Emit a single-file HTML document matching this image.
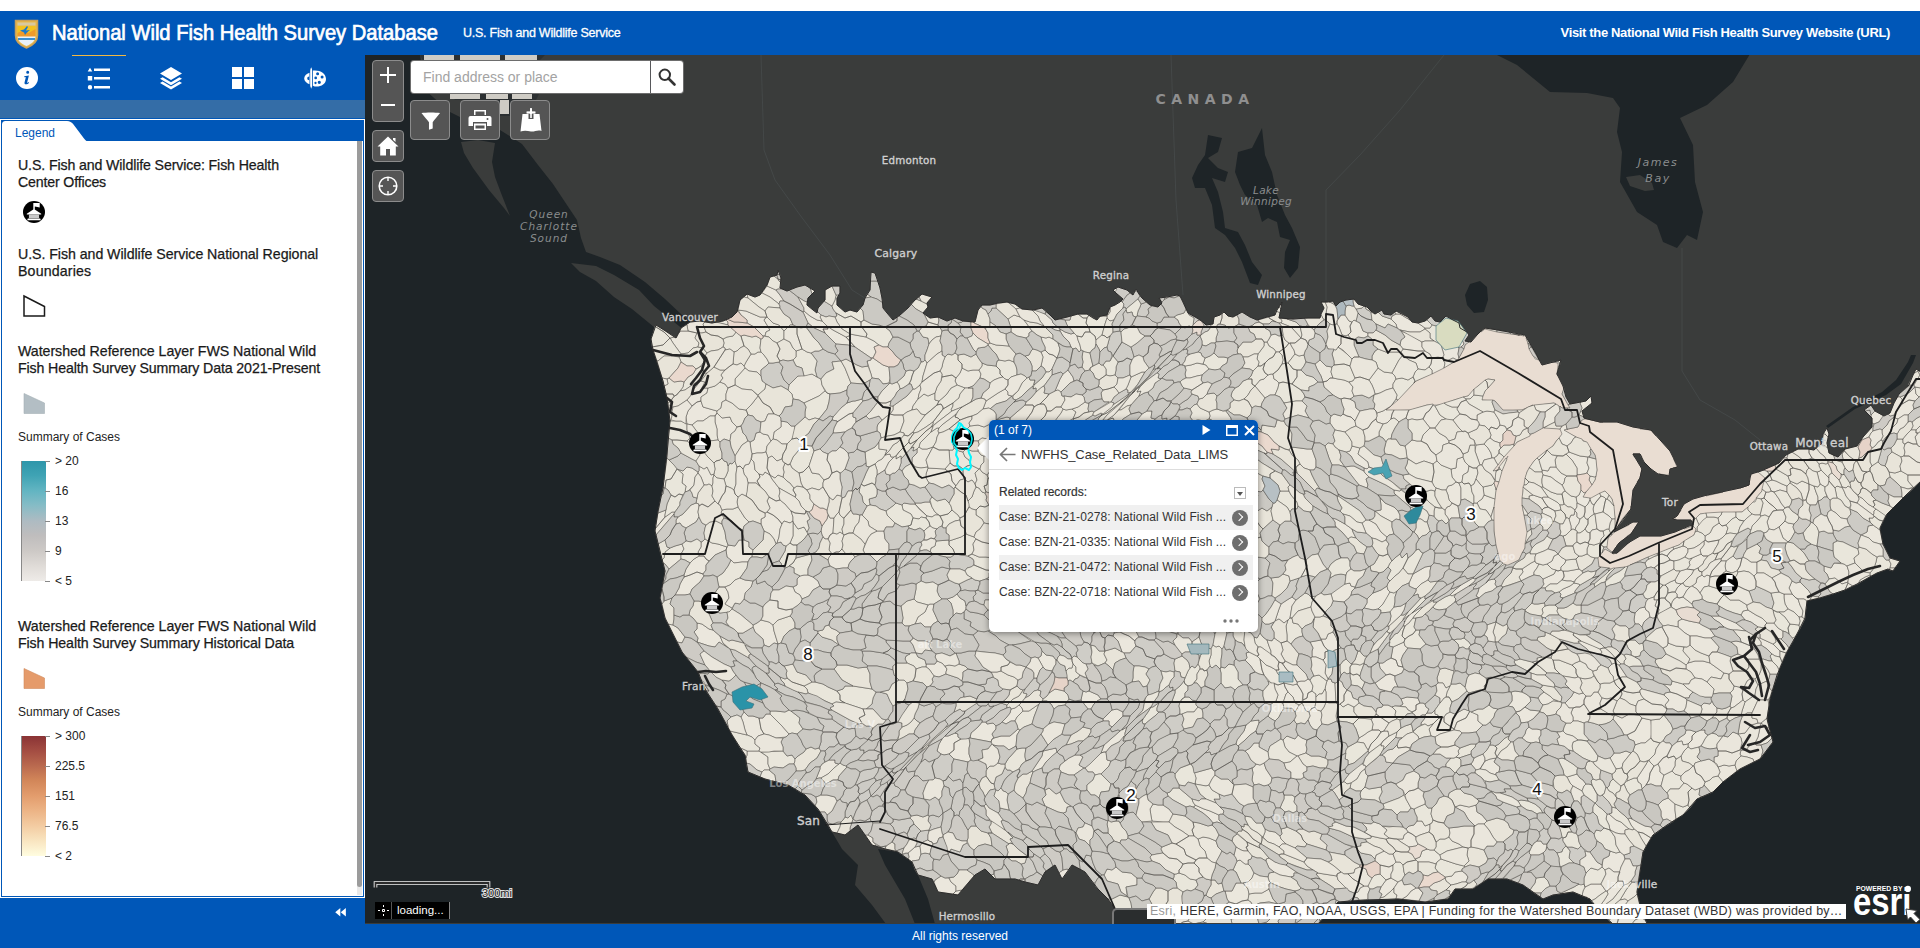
<!DOCTYPE html>
<html lang="en"><head><meta charset="utf-8"><title>National Wild Fish Health Survey Database</title>
<style>
html,body{margin:0;padding:0}
body{width:1920px;height:948px;overflow:hidden;background:#fff;position:relative;font-family:"Liberation Sans",sans-serif;color:#222}
.abs{position:absolute}
#hdr{left:0;top:10.75px;width:1920px;height:44.25px;background:#0057b8}
#title{left:52px;top:10.700px;height:24px;line-height:24px;font-size:21.5px;font-weight:normal;color:#fff;white-space:nowrap;-webkit-text-stroke:.7px #fff;transform-origin:0 50%;transform:scaleX(.936)}
#sub{left:463px;top:14.25px;font-size:12.5px;line-height:16px;color:#fff;white-space:nowrap;letter-spacing:-.24px;-webkit-text-stroke:.3px #fff}
#link{right:30px;top:14.25px;font-size:13px;line-height:16px;font-weight:bold;color:#fff;white-space:nowrap;letter-spacing:-.35px}
#side{left:0;top:55px;width:365px;height:869px;background:#0057b8}
#foot{left:0;top:924px;width:1920px;height:24px;background:#0057b8;color:#fff;font-size:12px;line-height:24px;text-align:center}
.ic{position:absolute;top:11px;width:24px;height:24px}
#band{left:0;top:45px;width:365px;height:18px;background:#346da7}
#pane{left:0;top:64px;width:363px;height:777px;border:1px solid #fff}
#white{left:2px;top:86px;width:360.700px;height:754.500px;background:#fff}
#sbt{left:357.300px;top:86px;width:5px;height:754px;background:#e9e9e9}
#sb{left:357.300px;top:86px;width:5px;height:746px;background:#9b9b9b;border-radius:0 0 2.500px 2.500px}
.lt{position:absolute;left:18px;font-size:14.2px;line-height:17px;color:#1a1a1a;white-space:nowrap;letter-spacing:-.25px;-webkit-text-stroke:.25px #1a1a1a}
.ls{position:absolute;left:18px;font-size:12px;line-height:14px;color:#222;white-space:nowrap}
.rl{position:absolute;left:55px;font-size:12px;line-height:14px;color:#222;white-space:nowrap}
.tick{position:absolute;left:45px;width:5px;height:1px;background:#888}
#map{left:365px;top:55px;width:1555px;height:869px;overflow:hidden;background:#3a3c3b}
.mb{position:absolute;background:#555;border:1px solid #8c8c8c;border-radius:4px;box-sizing:border-box}
.mb svg{position:absolute}
#pop{left:624px;top:365px;width:269px;height:212px;background:#fff;border-radius:5px;box-shadow:0 1px 6px rgba(0,0,0,.45)}
#pop .tb{position:absolute;left:0;top:0;width:269px;height:20px;background:#0057b8;border-radius:5px 5px 0 0;color:#fff;font-size:12px;line-height:20px}
.row{position:absolute;left:10px;width:254px;height:25px;font-size:12px;line-height:25px;color:#333;white-space:nowrap;letter-spacing:.09px}
.row i{position:absolute;left:233px;top:4.5px;width:16px;height:16px;border-radius:50%;background:#6e6e6e}
.row i:after{content:'';position:absolute;left:4px;top:4.500px;width:5px;height:5px;border-top:1.600px solid #fff;border-right:1.600px solid #fff;transform:rotate(45deg)}
</style></head><body>
<div class="abs" id="hdr">
 <svg class="abs" style="left:14px;top:7.75px" width="25" height="30" viewBox="0 0 25 30"><path d="M1.500 1.500h22v15c0 6-4.500 10-11 12.500C6 26.500 1.500 22.500 1.500 16.500z" fill="#e9b949" stroke="#c9a15a" stroke-width="1.500"/><path d="M3.500 3.500h18v3h-18z" fill="#d8c9a0"/><path d="M3.500 7h18v9.500h-18z" fill="#f3c21f"/><path d="M3.500 14l6-3 5 3 7-4v8h-18z" fill="#ef9a2a"/><path d="M3.500 17.500h18c-.3 4.500-4 7.500-9 9.500-5-2-8.700-5-9-9.500z" fill="#e8f1f8"/><path d="M4 19h17v2H4z" fill="#3b8fd0"/><path d="M6 11.500l4-1 3-3.500 1 1-2 3.500 4-.5-3 2.500-2 2.500-1-2.500z" fill="#1c79c9"/></svg>
 <div class="abs" id="title">National Wild Fish Health Survey Database</div>
 <div class="abs" id="sub">U.S. Fish and Wildlife Service</div>
 <div class="abs" id="link">Visit the National Wild Fish Health Survey Website (URL)</div>
</div>
<div class="abs" id="side">
 <div class="abs" style="left:72px;top:0;width:54px;height:1px;background:#f2b843"></div>
 <div class="ic" style="left:15px"><svg viewBox="0 0 24 24" width="24" height="24"><circle cx="12" cy="12" r="11" fill="#fff"/><path fill="#0057b8" d="M11.2 6.2a1.5 1.5 0 1 0 3 0 1.5 1.5 0 1 0-3 0M9.3 10.2l4.6-.6-1.7 6.6c-.1.6.2.7.6.5l.9-.6.4.6c-1 1.1-2.2 1.7-3.3 1.6-1.100-.1-1.500-.9-1.200-2.100l1.100-4.400c.1-.5-.1-.7-.5-.7l-1 .1z"/></svg></div>
 <div class="ic" style="left:87px"><svg viewBox="0 0 24 24" width="24" height="24"><path fill="#fff" d="M3 1.800 5.300 5.600H.7zM.8 10h4.400v4.400H.8zM3 19a2.200 2.200 0 1 0 0 4.400A2.200 2.200 0 0 0 3 19M7 2.600h16V5H7zm0 8.400h16v2.400H7zm0 9h16v2.400H7z"/></svg></div>
 <div class="ic" style="left:159px"><svg viewBox="0 0 24 24" width="24" height="24"><path fill="#fff" d="M12 1 23 7.500 12 14 1 7.500zM3.600 11.300 12 16.300l8.400-5L23 12.800 12 19.300 1 12.800zM3.600 15.500 12 20.500l8.400-5L23 17 12 23.500 1 17z"/></svg></div>
 <div class="ic" style="left:231px"><svg viewBox="0 0 24 24" width="24" height="24"><path fill="#fff" d="M1 1h10v10H1zM13 1h10v10H13zM1 13h10v10H1zM13 13h10v10H13z"/></svg></div>
 <div class="ic" style="left:303px"><svg viewBox="0 0 24 24" width="24" height="24"><path fill="#fff" fill-rule="evenodd" d="M8.200 1.300c.6 1.200 1 2.400 1 3.600v15.100l-1 2.700-1-2.700V4.900c0-1.200.4-2.400 1-3.600zM6.500 6.800v11.400C3.300 17 1.200 14.800 1.200 12.400c0-2.300 2.100-4.500 5.300-5.600zM6.100 10.400a1.900 1.900 0 0 0 0 3.800zM10 4.600c6.800-.8 13 2.800 13 8.400 0 4.600-4.600 7.600-9.400 7.600-1.400 0-2.600-.3-3.600-.9zM13.1 7.7a1.5 1.5 0 1 0 3.0 0a1.5 1.5 0 1 0 -3.0 0zM17.6 11.1a1.5 1.5 0 1 0 3.0 0a1.5 1.5 0 1 0 -3.0 0zM11.35 11.9a1.35 1.35 0 1 0 2.7 0a1.35 1.35 0 1 0 -2.7 0zM14.700000000000001 16.3a1.6 1.6 0 1 0 3.2 0a1.6 1.6 0 1 0 -3.2 0zM11.35 17a1.15 1.15 0 1 0 2.3 0a1.15 1.15 0 1 0 -2.3 0z"/></svg></div>
 <div class="abs" id="band"></div>
 <div class="abs" id="pane"></div>
 <div class="abs" id="white"></div>
 <svg class="abs" style="left:2px;top:66px" width="90" height="21" viewBox="0 0 90 21"><path d="M0 21V3.500Q0 0 3.500 0H65Q69 0 71.500 3.500L82 17.500Q84.500 21 88 21z" fill="#fff"/></svg>
 <div class="abs" style="left:15px;top:71px;font-size:12px;line-height:14px;color:#0057b8">Legend</div>
 <div class="abs" id="sbt"></div><div class="abs" id="sb"></div>

 <div class="lt" style="top:102px;letter-spacing:-0.13px">U.S. Fish and Wildlife Service: Fish Health</div>
 <div class="lt" style="top:119px;letter-spacing:-0.17px">Center Offices</div>
 <svg class="abs" style="left:22px;top:145px" width="24" height="24" viewBox="-12 -12 24 24"><g transform="translate(0,0)"><circle r="11" fill="#000"/><path fill="#fff" d="M-.7,-9h6.400v4.600l-2.300,-.6l-2.600,-.5v3.300h-1.500zM0,-2.900l7.200,4.700v.6h-14.400v-.6zM-6.200,6.400h12.400l.6,1.800h-13.600z"/><path fill="#c9c9c9" d="M-5.100,2.400h10.200v3.900h-10.200z"/></g></svg>
 <div class="lt" style="top:191px;letter-spacing:-0.055px">U.S. Fish and Wildlife Service National Regional</div>
 <div class="lt" style="top:208px;letter-spacing:0.15px">Boundaries</div>
 <svg class="abs" style="left:22px;top:239px" width="25" height="24" viewBox="0 0 25 24"><path d="M2 2 L22.500 12.500V22H2z" fill="none" stroke="#1a1a1a" stroke-width="1.500"/></svg>
 <div class="lt" style="top:288px;letter-spacing:-0.04px">Watershed Reference Layer FWS National Wild</div>
 <div class="lt" style="top:305px;letter-spacing:-0.125px">Fish Health Survey Summary Data 2021-Present</div>
 <svg class="abs" style="left:22px;top:337px" width="25" height="24" viewBox="0 0 25 24"><path d="M2 1.500 L22.500 11V21.500H2z" fill="#b3bec4" stroke="#a4b0b6" stroke-width=".6"/></svg>
 <div class="ls" style="top:375px">Summary of Cases</div>
 <div class="abs" style="left:21px;top:406px;width:24px;height:120px;background:linear-gradient(#2f96aa 0%,#3fa3b4 12%,#63b5c2 25%,#86bcc6 37%,#aebbc2 50%,#bfbdbd 62%,#cdc9c6 75%,#e0dcd8 88%,#eeebe8 100%);border-left:1px solid #888"></div>
 <div class="tick" style="top:406px"></div><div class="tick" style="top:436px"></div><div class="tick" style="top:466px"></div><div class="tick" style="top:496px"></div><div class="tick" style="top:526px"></div>
 <div class="rl" style="top:399px">&gt; 20</div><div class="rl" style="top:429px">16</div><div class="rl" style="top:459px">13</div><div class="rl" style="top:489px">9</div><div class="rl" style="top:519px">&lt; 5</div>
 <div class="lt" style="top:563px;letter-spacing:-0.04px">Watershed Reference Layer FWS National Wild</div>
 <div class="lt" style="top:580px;letter-spacing:-0.11px">Fish Health Survey Summary Historical Data</div>
 <svg class="abs" style="left:22px;top:612px" width="25" height="24" viewBox="0 0 25 24"><path d="M2 1.500 L22.500 11V21.500H2z" fill="#e59b6b" stroke="#d08a5c" stroke-width=".6"/></svg>
 <div class="ls" style="top:650px">Summary of Cases</div>
 <div class="abs" style="left:21px;top:681px;width:24px;height:120px;background:linear-gradient(#8a3335 0%,#a34c42 12%,#ba6a4f 25%,#d28659 37%,#e39d6d 50%,#ecb385 62%,#f3cca2 75%,#f9e6c2 88%,#fffde0 100%);border-left:1px solid #888"></div>
 <div class="tick" style="top:681px"></div><div class="tick" style="top:711px"></div><div class="tick" style="top:741px"></div><div class="tick" style="top:771px"></div><div class="tick" style="top:801px"></div>
 <div class="rl" style="top:674px">&gt; 300</div><div class="rl" style="top:704px">225.5</div><div class="rl" style="top:734px">151</div><div class="rl" style="top:764px">76.5</div><div class="rl" style="top:794px">&lt; 2</div>
 <svg class="abs" style="left:335px;top:853px" width="11.500" height="8.500" viewBox="0 0 13 10"><path d="M6 0v10L0 5zM12.500 0v10l-6-5z" fill="#fff"/></svg>
</div>
<div class="abs" id="map">
<svg id="mapsvg" viewBox="365 55 1555 868" width="1555" height="868" style="position:absolute;left:0;top:0;display:block">
<rect x="365" y="55" width="1555" height="868" fill="#3a3c3b"/>
<polygon points="364,54 420,54 425,90 450,112 470,122 500,130 522,144 538,165 553,184 565,202 577,220 581,238 586,252 600,257 620,265 645,282 665,299 682,315 695,325 681,328 676,338 664,330 656,325 651,339 653,350 663,381 667,398 670,421 667,454 663,488 658,511 655,531 660,551 665,571 660,598 665,618 672,632 682,652 698,672 705,689 718,709 732,735 745,755 748,772 765,779 788,785 805,795 818,809 828,825 832,832 842,849 858,865 855,885 872,905 886,924 364,924" fill="#1e2427"/>
<polygon points="1495,54 1517,65 1550,92 1587,93 1613,98 1620,108 1617,132 1622,152 1620,182 1637,212 1657,225 1663,242 1677,248 1687,235 1697,240 1703,212 1695,182 1693,145 1680,118 1707,105 1733,82 1750,54" fill="#1e2427"/>
<polygon points="1921,481 1907,494 1897,504 1887,514 1880,528 1883,544 1890,558 1900,561 1893,571 1888,569 1877,573 1868,578 1857,584 1845,590 1833,594 1820,598 1807,601 1805,618 1797,634 1787,652 1777,675 1770,699 1767,719 1773,742 1760,759 1740,769 1723,782 1713,792 1697,799 1683,815 1667,825 1653,835 1643,852 1640,872 1637,892 1640,905 1647,924 1921,924" fill="#1e2427"/>
<polygon points="1613,924 1603,915 1590,899 1573,892 1553,895 1543,899 1523,885 1507,879 1488,879 1473,889 1455,889 1448,899 1425,902 1398,899 1365,900 1338,902 1318,924" fill="#1e2427"/>
<polygon points="878,849 898,852 912,862 918,875 928,899 935,924 915,924 905,899 885,865" fill="#1e2427"/>
<polygon points="1826,426 1853,407 1882,392 1896,380 1908,362 1911,355 1916,355 1913,363 1901,384 1886,395 1855,409 1828,428" fill="#1e2427"/>
<polygon points="1262,128 1265,155 1272,172 1277,195 1285,215 1292,228 1300,247 1298,268 1290,278 1284,268 1285,252 1290,240 1280,237 1277,222 1268,218 1262,222 1257,205 1245,195 1240,185 1235,172 1238,152 1252,148 1257,138" fill="#1e2427"/>
<polygon points="1208,135 1222,138 1218,152 1208,158 1218,168 1228,172 1225,182 1212,178 1218,192 1223,212 1225,228 1238,232 1245,245 1252,262 1262,275 1258,285 1250,283 1242,262 1235,248 1225,235 1215,228 1212,205 1205,188 1195,188 1192,178 1198,165 1205,155" fill="#1e2427"/>
<polygon points="1470,284 1480,281 1487,287 1488,300 1484,312 1474,313 1467,305 1465,295" fill="#1e2427"/>
<polygon points="571,263 596,266 614,275 639,290 654,306 669,318 684,330 690,337 676,338 654,327 632,309 614,297 596,281 580,272" fill="#3a3c3b"/>
<polygon points="461,142 478,140 495,143 492,162 495,177 501,193 510,216 504,208 489,190 473,168 464,153" fill="#3a3c3b"/>
<polygon points="1626,177 1640,175 1652,183 1654,190 1645,191 1630,186" fill="#3a3c3b"/>
<g fill="none" stroke="#444848" stroke-width="1"><path d="M761,55L764,150 775,180 800,215 830,255 852,290 868,300"/><path d="M1171,55L1176,200 1183,295"/><path d="M1444,55L1400,110 1360,155 1326,190 1326,300"/><path d="M1682,248L1682,371 1700,400 1735,420 1760,440"/></g>
<polygon points="420,55 545,55 538,62 540,92 536,100 512,100 510,116 500,116 498,100 455,100 448,92 428,70" fill="#2c3032"/>
<g fill="#cfccc5"><rect x="424" y="55" width="30" height="5"/><rect x="460" y="55" width="40" height="6"/><rect x="505" y="55" width="32" height="5"/><rect x="450" y="94" width="30" height="5"/><rect x="486" y="93" width="22" height="6"/><rect x="512" y="94" width="20" height="5"/><rect x="500" y="100" width="9" height="14"/><rect x="521" y="56" width="10" height="3"/></g>
<path d="M656,325l-5,14 2,11 10,31 4,17 3,23 -3,33 -4,34 -5,23 -3,20 5,20 5,20 -5,27 5,20 7,14 10,20 16,20 7,17 13,20 14,26 13,20 3,17 17,7 23,6 17,10 13,14 10,16 4,7 13,3 13-10 14,20 13,4 13,3 14,10 6,13 14,4 6,13 20,3 17-20 10-6 10,10 10,0 10,0 10,3 13,3 7-13 10-7 7,14 10-14 13,7 13,17 10,10 7,10 13,10 10,5 180,0 20-22 27-2 33-1 27,3 23-3 7-10 18,0 15-10 19,0 16,6 20,14 10-4 20-3 17,7 13,16 10,9 34,0 -7-19 -3-13 3-20 3-20 10-17 14-10 16-10 14-16 16-7 10-10 17-13 20-10 13-17 -6-23 3-20 7-24 10-23 10-18 8-16 2-17 13-3 13-4 12-4 12-6 11-6 9-5 11-4 5,2 7-10 -10-3 -7-14 -3-16 7-14 10-10 10-10 14-13 0-109 -5-3 -3,6 -4,10 -10,9 -5,9 -4,10 -6,3 -9-5 -4-6 -7,5 8,8 0,9 -9,10 -6,9 -12,3 -7,8 -9-4 -2-10 2-9 -2-6 -4,6 -1,9 -8,7 -6-1 -10,0 -12,6 -7,8 -18,8 -10,3 -1,4 -1,7 -9,3 -14,3 -19,4 -14,4 -9,5 -7,12 -5,3 5,1 14,0 2,5 -4,1 -14,6 -14,4 -21,0 -12,7 -11,10 -5,0 7-10 12-9 8-12 -6,0 -19,10 7-10 10-13 2-19 7-12 2-9 -9-15 7,0 4,8 7,7 7,5 11,2 1-7 8-2 -8-16 -9-10 -10-11 -18-3 -16-5 -17,0 -16-4 -2-7 10-8 -1-7 -5,5 -16,3 -4-7 -3-11 -6-12 4-14 -19,5 -7-13 -10-17 -27-5 -13-2 -4,3 -4,4 -6,7 -6-1 4-6 -2-3 -7-4 -1-5 -6-3 -7-4 -6,6 -5-1 -4-5 -6,5 -7,2 -6-1 -4-5 -6-3 -6-3 -5,4 -7-1 -2-4 -7,4 -4-3 -4-4 -9-3 -4-5 -8,1 -6,2 -4,4 -3-5 -6,1 -6,0 3,6 -3,6 -1,4 -12,0 -15,1 -14-1 2-10 1-6 -5,8 -2,5 -8,2 -10,3 -7-3 -8-5 -9,5 -5-1 -4-4 -4,3 -6,2 -1,7 -7,1 -3-3 -6-4 -9-5 -5-11 -3-6 -3-1 -10,2 -8,1 3,5 -4,4 -8-2 -8-7 -3-4 -3-5 -3,6 -6-5 -9-3 -5,3 4,4 6,5 -3,3 -5,3 -5,2 -3,8 -7,1 -3,4 -4-2 -6-4 -9,0 -11,3 -12,3 -7-7 -6-5 -9,2 -11-1 -7-5 -8-2 -9,1 -8,2 -8,0 -4,5 -3,12 -12-1 -8-3 -8,3 -9-4 -8,1 -7-5 5-6 -1-4 5-6 -10-3 -7,6 -7,8 -8,7 -7,5 -6-7 -4-5 -1-10 -2-10 -5-15 -4-1 -1,18 -5,8 -2,7 -6,7 -7-2 -5,2 -8-7 0-7 3-5 0-7 -8,0 -7,4 0,10 -7,8 -1,5 -4-3 -6-5 1-7 7-7 -10-6 -8,2 -10,4 -7-3 1-10 -3-8 -1,5 -7,2 -3,8 -7,10 -5,2 -8-3 -7,6 -3,12 -5,5 -9,4 -11,2 -12-2 -10,1 -9,6 -5,10 -12-8z" fill="#e9e6db"/>
<path d="M1411,410l16-5 14,0 13-5 14-4 10-10 10-7 7,1 -10,11 -4,9 14,1 8,10 19-1 10-4 22-3 8,5 9,0 -9-14 2-5 -1-3 -6-12 2-11 -6-1 -11,3 -3-5 -4-1 -6-12 -3-10 0-1 -7-1 -19-3 -15-4 -7,6 -1,1 -6,7 -2,0 -1,0 -3,3 -5,11 -6,6 -38,19 -19,19 -12,11z" fill="#e9ddd2" stroke="#6a6865" stroke-width=".5"/>
<path d="M1544,427l-14,8 -13,7 -12,13 -13,17 6-2 10-14 -6,14 -6,19 -3,21 1,21 2,17 4,14 8,4 11-6 6-12 3-17 -5-21 0-19 4-19 7-11 10-8 9-7 4-6 6-6 -2-5z" fill="#e9ddd2" stroke="#6a6865" stroke-width=".5"/>
<path d="M1570,434l16,8 9,13 2,15 -2,10 -13,17 9,2 14-8 7,8 3,19 -1,14 7-10 10-13 2-19 7-12 2-9 -9-15 7,0 4,8 7,7 7,5 11,2 1-7 8-2 -8-16 -9-10 -10-11 -18-3 -16-5 -17,0 -16-4 -3,3 -3,6 -15,3z" fill="#e9ddd2" stroke="#6a6865" stroke-width=".5"/>
<path d="M1597,558l2,9 13,2 15-2 19-9 16-6 17-7 15-10 3-6 -4-4 -4,1 -14,6 -14,4 -21,0 -12,7 -11,10 -5,0 -7-5z" fill="#e9ddd2" stroke="#6a6865" stroke-width=".5"/>
<path d="M1677,520l14,0 1,3 8-9 42-2 8-6 12-15 4-13 -7-6 -5,1 -3,2 -1,3 -1,7 -9,3 -14,3 -19,4 -14,4 -9,5 -7,12 -5,3z" fill="#e9ddd2" stroke="#6a6865" stroke-width=".5"/>
<path d="M1608,538l-2,10 6,5 7-10 12-9 8-12 -6,0 -19,10z" fill="#e9ddd2" stroke="#6a6865" stroke-width=".5"/>
<g stroke="#484742" stroke-width=".5" stroke-linejoin="round">
<path fill="#ebe7dd" d="M1039,311l-7-1 6,6 2,5 4,5 2,2 4-1 5,3 5,1 0-2 -7-6 -1-3 -7-6zM1425,567l-12,7 -4,9 0,3 4,2 3,1 5-5 7-4 2-4 0-5 1-5zM1120,731l-16,14 -3,8 3-1 2,0 5-6 8-4 6-6 0-3 2-6zM748,298l-1-4 -3,3zM727,557l7,6 8-1 6,0 2-4 2-1 1-7 -4-3 0-5 -5-2 -5,0 -4,6 -7-1 -1,2 -1,3zM1314,470l2-3 0-7 -4-11 -5,0 -7-1 -9-1 -2,3 3,5 6,5 2,4 4,4 6,2zM1584,704l6,9 3-2 8-2 -1-6 2-5 -4-6 -4,0 -3,4 -5,0 -2,4zM744,474l3,4 1,5 8,0 4,3 -3-5 3-4 -1-3 -4-4 -1-8 -3-3 -2,5 -4,1 -2,4zM798,376l-9,9 -1,5 4,4 1,5 6,1 5,3 15-7 6-5 -3-6 -1-6 -4-2 -5-3zM1527,742l4,1 5-1 4,1 -1-5 2-3 0-5 -4-1 -5,0 -3-2 -3,3 -1,4 -3,4zM1092,551l4-1 3-1 2-4 4-2 -3-7 -4-3 -3-1 -5,0 -3,7 -4,2 0,3 2,3 1,3zM1269,346l5,3 2,3 3,0 7-5 3-4 -4-3 -2-5 -4,1 -4-2 -4,1 -2,4 -2,3zM1226,621l-2,5 1,5 2,2 6-1 1-2 0-6 -1-6 3-6 -2-1 -3,1 -2,1 -3,2zM1834,563l-3,5 -7-2 0,5 3,3 2,5 6-1 7,6 6-2 1-10 -2-6 -3-2zM1918,433l-3,4 2,7 1,2 3,1 0-16zM881,531l-4,0 -6,3 -3,4 -5,12 2,4 5,1 7,7 4-4 5-3 3-5 0-6 -4-5 -1-8zM785,504l-5-4 -4,1 -7-4 -2,4 3,7 -3,4 6,3 5,4 4,5 2-3 6,2 3-2 0-4 -2-6zM1548,507l7,4 6-1 -1-5 -3-3 -5-3 -4-2 -5,0 -1,1 3,5zM952,481l-1-7 -6-5 -17-1 -2,6 0,4 3,5 5,1 8,4 7-3 5,4 1-2 1-1zM1067,869l-4,1 -3,2 -1,1 3,6 7-9zM1415,509l2-3 4,1 0-4 -3-3 -10-5 -7-5 -1,1 -6-1 0,3 2,2 14,12zM1282,364l6-1 7-9 -1-4 -2-3 -2-4 -1,0 -3,4 -7,5 3,3 1,5zM765,336l1-4 4-2 -6-10 2-3 -6,0 -14-6 -8-1 3,5 6,5 0,3 7,4 9,9zM1415,715l0,4 3-1 4-3 3,0 2-2 2-4 -3-2 -1-3 -2-1 -3,0 -4,2 0,5 -4,2 0,1zM1043,351l-2,1 2,5 -2,9 3,2 2,4 3,0 3-3 5-11 -4-3 -4-1 -4-4zM680,584l-1,4 -4,7 10,0 5-1 2-5 8-7 4-6 -1-2 -6-2 -7,3 -6,2zM1404,642l-11,5 -2,11 5,2 2,6 5,1 -2-7 2-5 5-7 -3-2zM1643,833l8,5 2-3 2-1 -4-7 -6-1 -6-3 -7-4 -2-1 -2,1 3,6 3,4 4,3zM1422,342l-13-8 -8-3 4,6 -4,3 -1,5 3,4 15,2 7,0 -3-4zM1474,579l-1-1 -12,7 -5,4 -6,6 2,1 4-2 13-8 5-4 3-4zM955,381l2,4 8,3 3,0 5-2 4-4 3-4 1-4 -2-4 -6,0 -5,1 -6-3 -2,5 -4,5zM1571,697l-6,6 4,5 4,0 3-1 4,0 4-3 0-4 2-4 -3-3 -4,1 -5-2zM1491,427l6,2 3-4 -1-5 -5-8 -7-1 -4,1 -6,3 0,5 2,3 0,2 6,1 4,4zM954,743l0,7 -5,4 5,5 14,3 3-2 -2-6 0-6 1-4 -1-6 -8,1zM1043,751l-1,5 -10,15 1,1 4-2 5-2 4-6 11-10 -1-4zM1883,544l-3-14 -7-5 -5,1 -1,6 -6,3 8,3 4,4 7,2zM1762,489l0,2 -6,7 5,1 3-1 1-3 1-3zM1749,483l0,2 -9,3 9-3zM1255,386l10,12 5-3 5,0 3-7 1-5 -3-3 -2-1 -1-5 -2,0 -3,1 -4,4 -4,1zM1623,881l-5,0 -4,4 -7,6 1,3 -3,5 -5,7 3-1 2,0 8-6 11-14zM1117,709l-5,1 -9,9 0,2 6,0 0,4 3,2 6-6 5-5 0-2 0-2zM1621,867l4-8 -1-4 -4-3 -4,1 -6-2 -1,5 -6,3 -1,8 3,3 4-2 5,4 6,0zM1446,437l-7-4 -4-5 -5,0 -7,7 -2,6 6,3 4,7 5,4 6-4 1-6 6-2 0-2zM1194,924l-6-3 -5,1 -3,2zM1387,423l4-4 1-5 2-4 -8,0 12-10 -2-1 -5,7 -8,5 -6,2 0,3 -1,3 1,3 6,2zM1246,653l1,5 -2,2 5,5 5,7 4,2 5,1 -2-5 -2-11 -3-3 -8-4zM874,341l-8-4 -16-3 -1,2 -3,1 9,10 16,11 2,0 3-6 -2-5 5-2zM720,442l4-3 3,1 3,1 1-7 4-3 2-4 -5-5 -2-5 -8,1 -5-5 -2,3 0,6 2,7 0,6 1,5zM827,824l5,8 5,1 3-6 1-5 -3,0 -5,2 -5-1zM1226,585l-2-6 -8-4 -3,2 -7,0 -3,3 0,4 6,3 6,5 2,8 4-2 6-4 4-2 1-1zM1466,399l4,0 4-4 0-6 -6,7 -5,1zM1388,731l-4,0 -3,1 -4,6 -6,6 -3,7 1,2 12-9 2-3 6-5zM1574,515l-3,0 -2,4 2,7 0,4 2-1 2,1 1-3 3-4 1-4 -3-2 0-4 -2-2zM1016,746l1-11 3-5 -2-1 -8,7 -9,0 -7,2 -2,1 -1,3 1,2 1,1 5,1 6,0 5,4zM853,426l3-4 0-4 -3-1 0-4 -4,1 -12,8 -3,6 -1,5 3,0 9-1 3-2 4-2zM1458,354l1-6 -2-2 -4-1 -5-1 -2,2 -5-1 3,10 -2,3 5,3 6-3 4,2 2-2zM1324,387l9,8 5,3 3,1 3-1 6,1 2-1 2-2 -2-5 1-4 -4-5 -5-2 -6-1 -5-1 -3,0 -3,3 -4,1zM1374,717l-3,2 2,5 -1,6 7,0 2,2 3-1 5-8 -3-2 -10-7zM1352,529l-7-5 -9-5 -4-1 3,4 0,3 1,2 6,5 6,7 3-2 5,1 -3-6zM1396,862l-3-8 -4,0 -5-3 -4,2 -4,2 -1,4 0,2 3,2 2,2 9,2 6-3zM978,727l-7,6 -1,5 21,4 1-3 2-1 -2-4 4-5 0-3 -3-3 -6,1 -1-2 -4,0zM1782,484l-6-3 -4-1 -6,2 4,6 1,3 3,1 6-2 7,2 0-2 0-4zM1564,483l1-5 2-2 -6-3 -5-6 -6,0 -2,4 -6-1 0,2 1,3 8,2 5,4 6,4zM1327,681l-1,3 -1,5 1,3 0,10 3,1 7,0 -1-20 -3-1 -1-3 -3,0zM1337,321l0,3 2,3 3,8 4,1 2-1 3-3 -1-6 2-4 -3-1 -4-6 -4,0zM1704,541l0,4 -4,5 1,4 2,2 5,0 5-3 2-4 3-5 1-4 -11,2 -3-2zM894,415l9,0 4-3 5-2 1-4 5-7 1-5 2-5 -1-4 -5,4 -2,0 -6,7 -14,10 0,4 -3,4zM1584,474l3-1 2-5 -2-5 1-6 -8-1 -11-4 -3,2 6,6 5,8 0,7zM1311,709l-2,3 1,4 -2,4 2,5 3,4 4,1 3-4 2-2 -1-4 1-5 -1-4 -4-1 -2-3zM843,568l5,0 1-4 2-3 4-4 -3-4 -6,1 -4-5 -3,3 -3,0 -4,2 -3,3 -1,3 1,4 1,2 6,3zM1781,503l-2-4 -5-7 -3-1 -2,1 -3,0 -1,3 -1,3 5,5 4,3 4,4 6,0 2-2zM1570,586l-7,3 -4,3 2,2 -1,3 3,1 12-5 0-2 5-6 -1-1 -5-1zM1381,532l-5-8 -7-4 -3,0 -4,3 4,10 6,5 4,1 6,3 4-2 1-3zM672,512l-4,3 -3,2 -10,12 0,2 1,4 18-21 1-2zM1396,314l-4,2 -1,3 5,5 1,4 3,2 10,2 10,0 5-3 0-1 -7-5 -6-1 -2-2 -10-6zM956,486l4-6 4-1 -1-6 0-4 -4-3 -5,0 -4-3 -5,6 6,5 1,7zM836,552l3,0 3-3 1-4 -1-4 2-6 -1-1 -3-2 -3,2 -4-1 -3,2 -2,4 2,4 -1,7 3,4zM1673,709l5,3 6-1 2-4 1-7 -2-2 -8-4 -7-2 -5,1 -1,2 5,5 -4,5 2,4zM920,846l-5,1 -7,6 1,4 -1,2 4,3 0-1 7-1 2-6zM1529,853l2,2 8,0 4-2 3-3 1-6 -4,0 -2-3 -4,0 -3,2 -2,3 -2,4zM759,751l-12,0 0,4 -1,3 0,5 4,1 7,6 5,2 2-2 5,0 1-1 -2-5 0-7zM855,401l-2,0 -6,2 -5,4 -5,5 -4,5 -1,3 5,1 0,1 12-8 4-1 10-12 -1-2zM1810,600l2-4 -3-5 -9-9 -4,1 -4-2 -3,7 3,6 4,4 2,1 6,0 3,2zM1305,681l-4,0 -4,1 0,2 4,6 2,4 0,6 4-2 1-5 4-2 1-5 -3-6 -2-1zM1558,571l-2-1 -2,4 -11,5 0,3 1,2 -3,4 4,0 5-4 7,0 5-4 2-3 0-2 -1-4 -2-1zM769,647l5-4 4,1 -4-13 -1-6 -4-3 -8-2 -4,3 -4,2 0,2 2,5 8,7 1,6zM1335,430l10,2 6-4 5-2 -1-5 -4-4 -4-1 -4-2 -2,2 -7-2 -3,2 -1,3 0,4 2,3zM1638,883l-6-1 -6,8 -6,10 5-1 3,2 6-4 3-3 0-2zM1062,440l1-2 -1-2 -4,1 1-2 -6,2 -6,8 -2,4 5-1 2,0 5-1 2-2 2-3zM1651,838l-8-5 -5-1 3,6 5,8zM1679,598l-2-1 -3,2 -2,3 -1,4 2,2 3,2 5-2 6-1 7,1 -2-4 -9-7zM1559,406l-3-2 -11,8 0,5 -2,5 0,6 6-3 6-3 0-5 5-6zM697,333l-9-2 -8,0 -4,7 -1-1 -5,1 3,5 8,11 7-1 5-5 5-1 1-4 -4-5zM745,368l4,3 8,1 4,4 0-6 5-4 3-3 -2-4 -3-4 -3-3 -3,0 -3,2 -4,0 -5,8 -2,4zM1579,415l5,2 -2-6 10-8 -1-7 -5,5 -5,1 -1,1 2,5zM1536,410l6,2 3,0 11-8 -2-1 -20,2zM688,491l6-6 1-8 3-4 0-1 -6-4 -5-1 -4,4 -6-2 6,5 -1,9 4,3 -1,6zM1109,564l7-1 3-3 1-4 5-3 0-1 -4-2 -7-7 -6,1 -3-1 -4,2 -2,4 -3,1 5,4 3,6zM1435,428l6-8 5-1 -6-4 -5-9 -2-1 -4,6 -3,2 -3,6 7,9zM1544,508l4-1 -3-4 -3-5 -9-3 -4,1 0,3 10,7 3,4zM779,488l-7-9 -2-4 -5-3 -2,3 -4-1 1,3 -3,4 3,5 5,5 4,6 7,4 4-1 -1-4 1-4zM1090,620l-1-5 2-4 -5,0 -4-3 -5,1 -6,3 -3,3 -1,6 6,2 3,3 4,0 4-4 4,2zM1222,915l4,2 5,2 15-2 5-4 1-3 1-4 -2-4 -3-2 -6,1 -6,3 -7-2 -4,3 0,5 -4,2zM1074,333l-3,1 -6-2 -5-3 0,2 3,5 6,6 2,5 2,2 3-1 3,4 2-2 -1-5 -2-5 -1-4zM1788,523l-3-2 -6,6 4,11 5,4 3-3 4-7 -2-5 1-3zM1137,420l-3,6 0,5 0,1 4,3 10-2 2-4 4-5 1-5 -4-1 1-7 -5,0 -5,3zM1642,789l4-4 3-5 1-7 4-7 -2-2 -2-2 -1-2 -1,1 -3,5 -8,12 1,4 3,2zM1262,446l-12-8 -5-6 -3,0 -5-3 -5,0 -8,0 8,8 12,5 8,7 5,1 7,3 3,1 0-2zM1403,355l6,5 7,3 2,6 7,1 4-3 2-3 1-6 -2-4 -5-3 -7,0 -15-2 -2,3zM1387,691l4,1 3-5 4,0 -3-7 0-4 -5-2 -4,1 -8,6 -3,2 4,6zM1409,623l4-5 2-3 8-8 -3,1 -8,5 -3,2 -5,7 1-1 -2,5 2,0zM1015,540l2-5 0-11 -13-8 -3,2 -3,5 -4,2 5,5 6,4 5,6zM1396,519l4,1 0-5 -2-4 -4-4 -9-4 -5-5 1,7 0,5 -6,1 6,5 11,6zM1533,719l7-8 -10-1 -5-3 -5,4 -4,1 0,1 3,3 2,7 7-1zM1478,824l6,0 3-3 -5-6 -5-3 -1-7 -7,2 -9-2 -5,2 9,5 4,7 7,7zM1564,575l0,2 -2,3 5,1 4,0 3,1 2-3 7-6 -1-2 -3-2 -11,2 -5,0zM1637,915l0-4 -6,2 -4,0 -6,1 -3,5 -1,5 15,0 3-4 5-2zM1728,629l5,1 4,0 9,1 -10-8 -9-4 -8-3 -8,0 4,4 5,3 4,4zM1461,347l3-3 -3-7 2-6 -7-4 -7-2 -6,0 -3,2 4,7 8,5 1,6 4,1 2,2zM694,559l-4,4 -4,6 -2,6 0,2 6-2 7-3 6,2 3-4 0-5 3-4 -3-2 -2-3 -5,0zM1740,754l1,2 6,1 6,2 1,3 4-2 3-2 2-7 -2-6 -5,0 -1-2 -6,3 -3,4 -5,0zM1416,840l0-3 -4-3 -4-2 -4,3 -1,4 -6,0 4,3 8,5 7-1 2-2zM1662,554l-9,3 -6,3 -2,3 1,3 1,2 4-1 3,1 5-4 5-1 6-3 -1-2 -2-2zM1616,833l5,1 4,0 0-4 4-1 -8-7 -5-2 -7-6 -2,0 -1,5 3,6 1,5zM1275,832l-6-1 -4-2 0,3 -2,5 5,5 6,2 5,3 3-3 4,0 -5-5 -1-3zM752,737l3,3 3-4 6-2 -3-5 -2-11 -6-2 -5,0 -4-4 -2,3 -1,2 2,5 2,8 2,5zM1338,643l-2-6 -3-5 -5,2 -2,5 -5,0 3,7 6,6 2,0 3-2 6-2zM1350,338l4,2 4-3 6,1 4-2 0-3 -5-2 -3-8 -6-3 -2,2 -2,4 1,6 -3,3zM1894,415l1,3 3,1 6-4 4,0 6-6 -1-4 2-4 -6-1 -7,4 -6,7zM1702,625l-3-2 -10-2 -7-2 -4,2 0,6 7,6 5,3 7,0 8,2 6,0 4-2 -5-7zM938,621l-5-11 1-6 -4,0 -2,1 -3,7 -7,5 -3,7 6-1 4,4 6,0 2-3zM1775,656l5,1 0-6 -7-7 -13-6 -2,0 3,4 0,3 6,4 5,5zM1469,733l7-1 7-7 -5-4 0-6 -8-4 -4,7 -9,4 -3,8 6,1 2,2zM1137,633l-3-4 -1-3 -7-3 -3-2 -1,3 -3,3 1,5 4,2 5,2 6,5 1-2 3-2zM1649,612l-3-2 -1-3 -5,1 -5,5 -1,7 1,4 4,0 3,3 2-5 2-2 4-3zM1017,470l8-12 -2-2 0-3 -3,3 -2,0 -7,8 -2,4 1,4 4-1 1,4zM1540,695l-2,3 2,4 3,3 5-1 5-3 5,0 -5-2 -3-3 -6-4zM1054,667l2-3 0-4 -3-4 -7-1 -4-4 -1,5 -3,2 5,9 3,3 6,1zM1642,718l-7,13 -8,4 2,4 5,2 1,4 6-2 4,0 6-5 1-7 -1-11zM1009,490l4,1 6,2 2-2 5-1 1-6 -3-5 -6-1 -3-3 -4,4 -5,3 -2,4zM988,478l4,2 9,8 1-1 2-1 -5-10 2-6 -2-3 -6,2 -3,2 -3,4zM701,547l-3,5 1,4 5,0 2,3 3,2 6-6 11-5 1-3 -9-3 -6-1 -7-4 -2,2 -2,1zM1243,594l3,5 0,5 3,3 3-1 3,1 5-8 -5-11 -5,0 -2,2 -5,0zM1515,691l-4,1 1,4 0,5 -4,5 5,1 3,5 4-1 5-4 3-3 3-3 -1-4 -4-3 -4-2zM1803,611l-3-6 -2-6 -2-1 -4-4 -8,0 0,4 1,6 3,5 6,3 5,5 3,0zM951,603l2,7 0,6 3-3 5,1 3-2 2-3 0-2 0-1 -1-5 -5-3 -3-4 -4,3 -6,2zM1359,485l8,3 1-3 -2-6 3-2 -4-4 -1-2 -10-5 -3,0 -6,1 9,12zM1355,421l5-10 -4-3 -1-6 -5-3 -6-1 -3,1 1,5 2,5 -1,5 4,2 4,1zM1367,469l2-2 -1-5 -10-8 2-6 -4-1 -4-1 -2,5 -4,1 5,4 4,7 9,5zM819,778l2,0 7-4 6-6 5-4 -4-1 0-3 -6,0 -4,2 -3,2 -2,3 0,2 -4,10zM1590,500l2,4 2,1 2-3 5-6 -1-2 0-1 -9,5 -1,0zM675,546l-5,2 -5,4 -1,6 -2,2 1,3 2,1 4,5 12-10 0-5 3-5 -2-5zM1069,758l-4,3 -5,4 -1,4 1,1 1,2 8,3 5,0 10-7 -5-3 4-8 -3-2 -5,0zM1307,749l-1-4 1-5 -5-2 -4-3 -3,4 -8-3 -4,4 2,7 4,5 8,4 1,0 2-1 6-2zM1248,889l-5-6 -2,0 -5,0 -4,8 -7,0 2,8 2,3 7,2 6-3 6-1 1-6zM1129,636l-5-2 -4-2 -2,0 -4,1 -1,3 5,5 4,11 2,1 6,0 6-7 -1-3 0-2zM1175,470l5-1 1-3 -6-6 1-3 -7-1 -4-4 -5-2 -2,4 -4,3 -2,4 1,3 0,2 6,4 5-3 8,4zM1290,618l2-12 4-6 -4-3 -5,3 -6,4 -2,5 -4,12 4-2 5,4 4-3zM809,596l4-6 7-4 -2-5 -5-4 -5-2 -4,0 -4,1 -3,3 0,6 -4,2 2,5 5,3 2,4zM1358,898l1,2 7,0 2-1 0-5 2-5 -2-3 -4,0 -4,2 -2,4 -4,1 0,2 0,2zM956,891l-3,3 5,1 4-5zM887,416l-9,8 -1,3 0,4 3,2 1,5 7-2 6-1 6-3 4-11 -1-6 -9,0 -4-1zM1674,569l0-8 -4-1 -6,3 -5,1 -5,4 3,2 0,4 4,2zM1701,746l2-3 2-4 3-4 -3-2 0-3 -4,0 -5,2 -4,4 0,4 -4,4 0,1 0,2 3,2 8-2zM1615,519l0-1 -1-12 -4-5 -3-2 -1,0 -1,3 -2,10 6,4 3,3zM1042,341l3,6 0,3 4,4 4,1 4,3 2-5 1-4 -2-6 -5-4 -4-2 -3,1 -5-1zM777,543l2-6 1-8 2-5 -4-5 -5-4 -6-3 -2,1 0,4 -4,2 0,5 3,7 6,3 4,5 2,5zM1741,615l4,5 6,2 7,5 7,1 0-3 2-2 -5-5 -6-3 -8-5 -5,1zM1577,503l6,3 2,1 3-3 2-4 0-2 -7-1 3-5 -2,1 -3-3 -2,5 -3,2zM956,891l0-5 -5-4 -2-4 -4,0 -4-2 -6,4 -1,2 4,10 15,2zM1316,701l0-7 -4-3 -4,2 -1,5 -4,2 -1,3 4,8 3,1 2-3 4-2zM1416,710l0-5 4-2 -2-5 -11-1 -6,2 2,5 -3,2 6,1 2,3 4,2zM698,384l-5,6 -2,5 -4,5 5,6 5-4 4-1 0-4 6-4 1-5 -6,0 3-6 -4-1zM1396,737l1-5 -4,2 -4,2 -6,5 -2,3 0,2 3,0 -1,4zM1005,541l-4,4 -1,5 4,9 8,2 4,4 2,0 5-3 5-6 1-8 -6-6 -3,0 -5-2 -5,0zM1244,731l-7,9 -1,4 2,2 6-5 6-6 6-4 3-8 0-3 -8,1 -5,4zM1010,713l-4,5 -4,4 4,2 5-3 4,0 2-4 6-6 -1-3 -3-3 -4,3 -4,1zM1408,412l1-2 -15,0 -2,4 -1,5 3-1 3,2 2,2 3-2 4-2zM830,518l-2-3 -1,4 -5,7 -1,5 1,4 3,4 3,0 2-4 3-2 1-15zM999,459l4-1 2-2 4-3 3-3 0-3 3-4 -6,0 -3-4 -4-2 -3,0 -4,2 3,3 -2,6 -2,5 2,4zM1587,897l0,1 3,1 1,2 4-2 5-4 6-4 -5-7 -4,0 -6,0 -6,3 -2,4 -1,5 3,1zM1494,441l6,2 3-3 0-6 4-4 -2-4 -5-1 -3,4 -6-2 -2,3 2,5 -1,3zM1395,715l1-4 -4-4 -4-2 -5,0 -1,2 -5,1 -1,4 0,2 10,7 3,2 3-2 5-2zM1454,729l-10-7 0-5 -4,1 -1,0 -6,6 -4,5 2,7 4,1 5-3 14-4zM1562,426l-2,3 2,5 -3,4 3,6 5,2 4-3 3-5 2-1 -12-7 4-1 -1,0 -1-5zM1534,572l3-4 2-4 -3-1 -1-2 -4,2 -9,6 1,3 -4,5 2,4 8-4 5-2zM1445,514l3,4 1,3 2-3 9,0 -1-6 -1-6 -6-3 -2,3 -3,1 -2,3zM871,358l0,2 -4,1 4,13 1,4 7,1 4,5 6-1 1-5 -1-11 -6-2 -10-7zM1105,432l-1-7 3-5 -4,0 -4,2 -6,3 -3,4 -5,3 3,5 5,4 9-3zM1593,653l4,1 4,0 1-2 -2-3 -6-3 -13-5 -3,0 1,2 8,6 3,4zM1408,420l4-1 5,1 6-1 3-6 3-2 4-6 0-1 -6,1 -18,5 -1,2 -2,6zM1586,722l2,0 2-4 0-5 -6-9 -4,3 -4,0 -3,1 -2,5 2,4 0,4 5,0 6,2zM1737,771l-2-6 -6,1 -5-1 -6,2 2,5 -2,4 5,6zM1380,393l6-3 7-2 0-4 3-5 -1-3 -3-3 -8-1 -6-4 -3,4 -6,8 3,5 2,5 1,4zM1499,482l3-11 -2-2 -4,2 -1,5 0,5zM1286,865l-11-3 -6-4 -3,1 0,2 3,7 5,4 6,3 11,2 3-1 0-3 4,0zM1116,470l0,3 12,7 6,5 1,0 0-3 2-4 0-4 -2-4 -5-2 -8,0 -5,1zM768,435l-5-1 -3-2 -4,1 -2,7 -4,2 1,8 1,4 5-1 5,0 4-1 1-6 4-5zM1696,518l3,7 8-8 -1-4 -6,1zM697,402l-5,4 -4,5 -2,6 1,7 5,1 5-4 6,0 7-5 5,0 2-3 0-2 -14-4 -2-6zM691,505l-8,9 -5,3 -2,3 0,4 4-1 2,3 4,2 10-6 3-5 -1-5 1-6 0-2 -3-1zM1745,702l10-7 1-6 2-4 -3-6 -2-1 -2,0 -4,3 -2,4 -2,5 -1,4 1,6zM671,420l1-4 0-4 1-5 -3-1 1-5 -3,2 2,18zM1253,500l5-4 -2-5 -4-4 -9-4 -2,3 -8,1 -1,4 1,4 2,2 13,7 6,0zM1583,780l-3-2 -3-4 -10,3 3,6 3,3 9,5 2-5 2-2zM1660,772l0-4 -2-4 -4,2 -4,7 -1,7 -3,5 5-1 5,2 5,0 3-11zM770,297l9,7 1-3 4,0 -4-6 -4-5 -9-4 -5,7zM1744,571l5,1 5,4 3-3 0-11 -6,0 -4-3 -4-2 -1,1 -2,8 -3,5 1,1zM1279,702l4,1 3-9 2-2 -3-5 -1-4 -6,2 -4-2 1,6 3,6 -2,6zM1457,459l-1,9 -5,1 1,8 4,5 3,1 3-1 1-7 5-3 1-6 -4-4 -2-5zM1687,569l-7,2 -5,9 1,3 5,1 2-1 9-9 2-4zM1807,503l3,2 6,0 2-4 0-4 -2-5 -2-6 -5-2 0,6 -3,10zM1683,684l-11-3 -1,4 -8-1 6,5 1,3 7,2 8,4 4,0 1-3 3-3 -6-4zM1355,587l-4-1 -1-3 -5,1 -5,2 -9,8 2,7 11,1 5-4 2-3 1-4 3-3zM885,470l4-8 5-5 -3,0 -1-3 -5,1 -3,4 -4,2 -3,3 2,6 0,5zM1175,919l0,5 5,0 3-2 5-1 3-5 -1-3 1-5 -3-2 -5,0 -6,6 -3,5zM1027,324l-3-4 -4-3 -6-2 -3,2 -3,2 1,3 2,6 0,4 6,4 9,2 3-2 0-3 3-2zM1364,743l2,4 2,3 3-6 6-6 4-6 -2-2 -7,0 -4,2 -4,3 -5,3 -2,4zM1425,724l3,2 5-2 6-6 -1-3 -3-1 0-4 -3,3 -5,0 -2,2 0,3 -4,5 0,2zM781,427l-7,5 -1,7 4,1 5,4 5,0 5-5 2-4 1-9 -4,0 -4-4 -6-1zM1328,679l4-5 1-7 2-4 0-6 -3-5 -2,0 -2-1 -3,1 0,6 -2,2 3,5 -1,8zM1234,468l6,10 3,5 9,4 4,4 5,1 2-2 2-4 -3-7 1-3 -4-2 -8-6 -8-3 -8,1zM1639,715l-10-1 -7,4 -7-3 -1,1 -1,3 8,10 3,6 3,0 8-4 7-13zM1451,895l-6,4 3,0zM1496,773l3-1 1-5 -6-5 2-4 -6,1 -5,2 -5,8 6,1 4,3 6,2zM1121,410l6-4 4-1 8-9 2-5 -4,1 3-5 -2,1 -9,9 -10,13zM1702,679l5,3 4-5 10,2 3-6 -14-10 -7-2 -8,0 -7,2 -2,2 0,4 5,3 4,6zM1162,915l-3,5 0,1 3,2 5-4 3-2 4,0 3-5 6-6 -12,2 -7,0zM1067,455l7,0 -1-3 5-4 -4-2 -1-3 -1-2 -11,1 -2,3 -2,2 0,2 3,3 2,4zM1260,659l2,11 2,5 7,8 7,2 6-2 -1-4 -5-5 -2-4 -5-3 -5-2zM1388,590l-1-4 -6,4 -8,3 -6,6 0,4 -3,5 9,2 5-1 5-5 4-6 3-6zM1871,415l0,2 1,1 0,5 2,1 5-2 5-6 -9-5zM917,453l-5,5 0,5 3,4 6,1 7-1 -2-7 7-13 -6,2 -5,0 -3-2 -2,2zM1190,378l7-2 5-1 7-6 -3-4 -9-2 -6,2 -6,1 1,4 -1,4 1,4zM1271,783l1-5 -6-9 -2-6 -4,2 -4-1 -2,3 -2,1 1,5 -1,7 2,5 5-1 5,2 4-1zM1842,462l3,6 4,4 4-2 1-6 2-3 -7-5 -5-5 -2,3 1,5zM1293,697l2,6 4,2 2-1 1-1 1-9 -2-4 -4-6 -4,1 -9-2 1,4 3,5zM1675,804l-7-6 -5,2 -5,5 3,6 0,5 2,4 4-1 5,3 4-3 -1-9zM1687,569l7,1 4-2 5-4 1-3 4-5 -5,0 -2-2 -9,4 -3,4 1,3zM1068,370l-5,4 -3,5 -5,12 3-1 3,2 9-9 4-2 -1-4zM1484,444l-8,1 -1,6 5,14 2,0 2-5 4-1 4-1 -1-5 -3-5zM1418,862l11,0 7,2 1-2 4-3 -1-4 -4-3 -2-2 -4,0 -3-1 -5,2 -2,6 -5,2 1,1zM711,475l-4-8 -3,2 -5-3 0,5 -1,1 0,1 3,4 3,8 3,0 2-1 3,2 1-3 0-5 1-3 0-1zM1610,673l3,3 1,5 8-4 5,0 -8-12 -4-2 -3,1 -4,4zM1718,518l1,5 3,3 4-1 6-6 4-2 0-5 -14,0 -1,3zM1445,363l-3-5 -4-1 -6,1 -1,6 -2,3 3,3 0,4 12-6zM958,737l0-3 -3-1 -7,3 -3,0 -3,3 -3,5 -2,7 4,3 3,1 5-1 5-4 0-7 7-4zM1710,576l-3-1 -3,2 -2-2 -5,3 -1,5 -4,3 5,3 3,4 4-6 5-1zM1365,765l-2,0 0-2 -5,3 -9,8 -6,8 2,0 2,2 4-1 6-4 4-7 4-3 1-2zM846,337l-13-7 -6-4 1,3 -5,0 2,4 11,11 12,1 7,2zM1407,458l9,6 8-3 9,3 4-3 -1-6 -5-4 -4-7 -6-3 -4,0 -5-1 -7,6 1,4zM1765,515l4,2 4-6 4-1 -4-4 -4-3 -5-5 -3,1 2,4 -3,12 1,1zM1107,881l11,3 3,8 6,4 -1-9 11-2 0-7 -6-5 -9-1 -6-5 -4,3 -5-1 -3,6zM1117,314l2-2 4-4 1-4 -3-3 -6,4 -5,2 0,5 -3,4 0,2 3,3 4-1zM1195,806l-2,1 10,6 6,5 4,5 4-1 6,2 -4-4 0-5 -9-4 -6-2 -9-4zM1617,924l4-11 -6,4 -5,2 -2,1 5,4zM1098,695l-9-4 -3,1 -3-1 -1,4 -1,5 7,9 3,0 3-5 3-3 4-2zM963,473l1,6 4,3 4-2 3,4 2-4 -2-7 4-4 -8-4 -4,1 -4,3zM1332,303l-3-1 -4,0 2,5 -2,13 3,2 2,2 3,1 4-1 0-3 1-2 -1-10 -2-4zM1398,882l-7-4 -5,2 -5,7 -2,5 3,2 -2,4 4-1 6-5 4-4zM1732,573l5-2 3-5 2-8 -6,1 -3-3 -3,2 -4,3 -1,5 1,5zM1780,510l-7,1 -4,6 -2,5 2,7 5,1 5-3 6-6 1-4 -3-7zM1391,874l2-4 0-5 -4,2 -9-2 0,9 6,6 5-2zM1482,499l-3,2 -2,2 3,6 6,1 5,7 3-10 1-8 -11-4zM1390,674l5,2 7-3 2-4 -1-2 -5-1 -2-6 -5-2 -4,2 -4,3 -4,0 1,5 6,7zM1708,542l11-2 3-2 4-4 2-6 -2-3 -4,1 -3-3 -6,4 -3,6 -5,3 0,4zM1478,592l-2,4 3,2 6-5 7-2 5-4 -2-3 1-3 -2-2 -5,1 -10,8zM1008,395l0-3 -3-3 -7,4 -6,4 -6,4 -3,8 6-1 1,1 6-5 10-3 6-5zM1101,753l-16,15 3,4 5,0 2,3 4-1 2,0 8-8 2-5 -4-1 -1-8 -2,0zM927,516l-12-12 -5,0 -6-1 -2,2 1,5 8,4 2,4 6,1 2-2 5,1zM1232,424l-1-6 -5-7 -3,0 -6-2 -4,1 -4,2 1,4 -1,3 7,3 3,4 5,3 8,0 5,0zM1787,458l1-4 -2,1 -3,3zM687,325l1,6 9,2 5,0 4-1 -3-8 2-2 -5-1 -10,1 -4,3zM1517,410l2,3 14-8 -11,5zM1797,488l4,5 2,7 3,0 3-10 0-6 -7-3 -5,3 -7-3 0,2zM1445,877l1,4 5,4 5-1 6-2 4,0 2-5 -2-3 -4-3 -7,1 -3,4zM697,629l-3,3 4,6 -1,4 12,4 6,1 4-5 9,6 -5-5 -3-7 -7-6 -4-1 -7-5 -5-1zM1595,514l8-2 2-10 1-3 -2-2 -3-1 -5,6 -2,3 -1,4 1,5zM1419,901l4-8 -5-5 -2,0 -5,3 -4,5 -5,3zM954,466l5,0 4,3 4-3 4-1 -2-5 -4-3 -2-5 -4-1 -5-3 -1,2 -4,0 1,13zM1480,769l5-8 0-3 -2-4 -5,2 -4,2 -1,3 -2,3 5,6zM1673,547l-15,6 -1,2 5-1 5,2 3-4 4-3zM682,643l3-6 -7-9 -5-3 -5-1 9,18zM1325,658l0-6 3-1 -4-5 -3-6 -11,2 3,6 -1,3 0,6 4,0 7,3zM1561,567l4-4 1-3 -5-3 -3-3 -4,2 -2,5 -5,3 5,5 6,2 3-1zM1274,702l-3,2 0,6 -3,6 2,2 5,3 4-4 2-4 3-5 -1-5 -4-1 -3-1zM1326,366l-6-6 -5,4 2,5 4,7 2,6 4-1 3-3 3,0 -2-6 1-5zM1420,835l9-3 1-3 0-5 -5,2 -3-5 -5,0 -3,4 -5,1 -3,3 2,3 4,2 4,3zM1679,560l6-3 3-5 0-3 -2-2 -3-1 -9,3 -4,3 -3,4 2,2 1,2 4,1zM1452,503l6,3 2-1 1-5 0-12 -2-5 -3-1 -4,3 -4,1 -2,4 2,5 1,5zM1677,588l-2,4 2,2 0,3 2,1 4-1 4-7 3-3 -5-1 -2-3 -2,1zM1717,712l0-4 -3-3 -2-4 -2,3 -6-1 -3,3 1,3 -1,4 -2,3 8,5 5-3zM1910,392l-5,3 -5,2 2,2 0,5 7-4 6,1 4-4 -3-3 -1-7zM873,842l0-4 -5-3 -3,0 7,10 3,1 1-1zM942,663l-5-2 -2,3 -9,0 0,3 3,2 5,7 5,1 7-3 0-2 1-3zM1216,863l4-8 2-4 -4-4 -2-6 -7-3 -6-1 -5,2 2,7 5,5 2,7 5,4zM786,737l3-3 -7-8 -12-12 -4,0 -3,4 -4,0 2,11 3,5 5,1 7,3zM1169,809l-6-4 -5,0 -5-1 -3,5 1,7 1,5 11,1 6,0 4-8zM814,328l11,5 -2-4 5,0 -1-3 -5-5 -5-1 -7-4 -6-5 -1,1 5,11zM1616,769l6-1 1-5 8-10 -5-2 -6,2 -6,0 -2,3 -2,2zM1470,711l-6-2 -9,5 -5-2 -4,2 -2,3 0,5 10,7 3-7 9-4zM1778,628l-4-5 -7,0 -2,2 0,3 6,4 4,6 6,1 2-2 0-6zM1542,513l9,4 2,5 1-1 1-3 1-2 -1-5 -7-4 -4,1 -2,2zM1696,732l-6-2 -4,0 -1,4 -6,4 -2,4 5-1 1,4 5-1 4-4 0-4zM1817,472l3,12 5,3 3-2 1-4 0-3 -8-8 -1,1zM1857,503l16,12 1-1 0-3 2-2 -3-2 -5-3 -6-6 -4-2 1,3zM1742,694l1-4 -4-3 -5-1 -1,4 -3,3 2,3 -2,10 1,2 3-1 9-7zM1761,723l-3,14 -3,6 1,2 5,0 6-2 5-5 -3-10 -4-2zM1212,779l3-4 0-4 -2-1 -1-2 -18,5 2,5 -1,6 11,2 3-1zM666,510l-8,3 -3,16 10-12 0-2zM935,512l-3-5 -2-5 -5,0 -4,1 -6,0 0,1 4,5 8,7 5,1 3-2 4,0z"/>
<path fill="#cfcdc7" d="M1346,480l-8-4 -7-2 -2,2 1,6 6,7 2,5 7,4 7,1 4-1 3-2 -2-5 0-5zM1432,533l5-2 0-7 2-3 -3-2 -2-3 -5-1 -1,4 -1,3 3,9zM1182,410l5-2 3,1 4-4 3-1 2-5 -1-3 -6-2 -4,5 -5,3 -4,3 1,2 -1,3zM1122,827l4,4 2,5 7-2 4-1 5-7 -2-4 -3-3 -3-4 -3-3 -5,1 -4,3 -1,4 -3,3zM755,603l-5,0 -6-4 -4,5 -5-1 -3,6 8,5 13,11 4-2 4-3 2-4 0-9zM773,363l-4,0 -3,3 -5,4 0,6 1,5 4,3 7,4 8-2 7,4 1-5 -5-5 -3-7 2-6 -4-5zM1249,569l3,6 8,4 4-2 4-1 0-6 2-7 -5-5 -8-1 -7,4 -7-3 0,4 -2,5zM930,500l2-3 -7-10 -5,1 -6-3 -5-1 -2,4 -2,1 3,5 7,9 6,0 4-1 5,0zM1345,844l-18-10 -5,0 -2,5 7,6 -1,5 3,2 16,3 0-4 8-4zM945,736l5-5 7-6 2-3 -2,0 -5,2 -20,17 -4,5 1,0 13-7zM1038,844l-11-7 -2,1 -1,2 -2,0 5,5 2,4 5,5 6,4 5-4 -2-5zM1092,641l0-5 2-3 -1-5 -5-4 -4-2 -4,4 -4,0 4,6 1,5 3,5 4,1 2,2zM802,790l-4-4 -3,3 6,4zM1158,584l3-6 7-7 -1-1 -2-1 -5,1 -4,4 -6,2 -5,5 -2,4 3,2 5,0 1,2zM1590,631l0,3 -4,1 6,4 9,5 4,4 3-1 4,0 -1-3 1-4 -13-7 -6-2zM1255,588l5,11 4-1 4-2 4,0 1-13 -2-5 -3-2 -4,1 -4,2 -4,4zM1379,655l8-11 3-2 0-5 4-7 -5,4 -11,15zM1478,756l5-2 4-4 3-5 1-3 -1-1 -4,1 -3,0 -4,0 -3,2 -1,3 -4,4 0,3 1,3 2,1zM1055,537l5-2 4,3 5,0 2-1 1-1 -2-4 -12-5 -8-5 -3,0 1,4 6,5 -2,3zM1152,627l-8-3 -5-3 -4,2 -2,3 1,3 3,4 2,4 3,0 7,3 5,0 2-2 0-3 -1-4zM1184,729l-2-4 2-6 -2-5 -2,0 -4,2 -6,0 -4,3 -2,3 6,7 0,5 8-1 3-1zM691,542l6-3 4,3 2-1 2-2 -1-6 1-5 1-3 -4-2 -3-6 -3,5 -10,6 -2,5 1,3 1,5zM890,701l-3-7 -7-2 -4,0 -3,6 -1,6 -6,5 7,0 9,10 4,1 2-1 2-4 3-4 0-5zM1026,803l-3-5 -7-5 -2-3 -6,4 -1,6 2,10 5,4 5-3 7-7zM1642,468l-2,10 -3,4 1-1 2-3 2-9zM1060,452l-3-3 0-2 -5,1 -2,0 -5,1 -7,9 2,3 5,3 6-2 6,0 5-6zM1524,772l-8-2 -1,1 2,5 2,5 3,4 10,3 6-6 -7-8zM845,432l-9,1 -3,0 -13,16 3,3 5,2 4-3 4,0 4-4 3-4 -2-5zM1010,574l0-3 -13-1 -5,0 -3,3 0,4 -3,2 4,1 2,4 3,0 6-2 3-3 5-3zM1275,600l6,4 6-4 5-3 5-8 -1-3 3-8 -9,3 -3,7 -6,6 -6,4zM1192,642l7-5 1-5 0-5 -2-6 -4-2 -4,0 -4,4 -7,0 -2,3 1,8 5,4 6,0zM1517,807l-14-5 -2,3 -5,1 7,5 3,5 13-2 1-3zM1097,748l-4,0 -8,5 -5,2 3,2 -4,8 5,3 1,0 5-4 11-11 3-8zM1218,324l-2,3 2,5 -2,6 0,4 11-1 7,1 3-4 -3-5 0-6 -6,1 -3-3 -5-1zM1446,758l-6-4 -7,0 -3,2 -2,2 -1,3 5,3 2,3 5,2 3-2 4,0 0-3 5-6zM1092,820l2-2 -1-5 -2-3 -4-5 -5-2 -3,0 -4,2 -2,2 3,6 5,6 4,4 7,3zM917,843l-2,4 5-1 3-4 5-2 0-5 1-4 0-1 -8,1 -3,3 -2,5zM1144,303l-3,1 -1,3 -2,4 -1,5 9,1 3-4 -1-4 4-3 -2-1 -4-3zM1127,519l-3,3 -2,5 0,3 7,0 10,4 2-8 0-5 6-6 -2-2 -5-1 -6,2 -6,1zM1755,589l-6,2 4,11 7,1 6,4 6,2 2-6 -3-10 -6-3 -9-4zM874,778l4-6 1-4 -3-1 -5,2 -7,1 -4,2 -1,4 -4,9 2,0 5-3 7-2zM1152,667l4-1 -2-4 1-3 -9-3 -3-7 -7-3 -6,7 -6,0 2,5 3,4 5,4 5,0 6,1 4,2zM1374,621l4-3 3-5 0-3 -3-1 -5,1 -9-2 -2,2 1,4 -1,7 3,5 2,0 4-1zM1367,507l-4-4 -7-5 -4,1 -7-1 -7-4 0,2 22,15 6,9 3,0 4-1 2-3 0-5zM1595,743l5-4 6,2 2-2 -1-6 -3-3 -5-5 -6-2 -5-1 -2,0 -2,1 0,7 0,4 5,6zM1349,542l-7,2 -4,2 1,8 2,4 7,0 2,4 4-7 3-2 -3-7zM1007,705l-6-2 -7,3 -12,9 -2,5 2,0 0,2 4,0 7-4 7-7 7-3zM1563,841l0-3 -1-1 -3,2 -4-1 -4,0 -4,6 0,3 2,3 5,0 3,3 5-1 1-3 3-3zM1019,644l12-3 -11-8 -5-4 -7-1 -5,0 -9-3 -2,4 -4,2 8,5 4,4 9,5 3,0zM877,494l-1,3 -7,2 1,6 6,1 4,3 6,2 7-5 3-3 -5-4 -4-4 -1-4 -4,0 -5-2zM1570,851l-1,7 5,5 6,2 0-5 6-4 -1-5 -4-5 -3,3 -6-2 -5,0zM1320,904l-3-2 -7,3 -2,4 0,3 -2,4 13,2 2-2 -1-4 3-5 0-4zM942,599l5,0 6-2 4-3 3-3 1-2 -2-5 -4-1 -6-3 -4,2 -7,3 -1,6 2,5zM1607,613l-3-6 1-6 -1-2 -2-1 -14,7 -7,0 0,4 0,4 7,1 6,2 9,2zM1283,470l-19-17 -7-3 -5-1 -3,0 -1,2 1,2 13,10 5,3 12,7 3,1 0-2zM1531,529l3,0 6-5 0-3 2-3 -1-4 -10-3 -3,3 -1,1 4,4 -1,5zM1599,807l3,2 5,5 2,0 3-1 0-3 0-3 -3-5 -7-7 -2,1 -3-2 0,7 -2,2zM1331,594l14-10 1-9 -5-1 -6,1 -5,3 -2,6 -7,9 3,2zM1227,719l0,6 2,3 2,0 4-1 3-6 5-9 -2-3 -4-2 -3-5 -4,5 -4,2 -2,6zM1506,634l-4,3 -4,5 4,3 6,1 6,1 2-2 5-1 0-6 -4-3 -1-4 -6-1 -2-3zM764,645l-2,3 1,5 6,9 3,0 4,2 3-2 0-6 -2-6 1-6 -4-1 -5,4zM1033,511l8,5 9,4 10,1 4-1 -4-7 -6-1 -12-5 -7-2 -7,1zM823,732l10,0 4,1 7-6 -5-3 -7-5 -6,0 -9-2 3,6 4,3 -2,5zM1269,704l-4-1 -6,5 -1,4 -4,4 -3,5 8-1 0,3 9-7 3-6 0-6zM1514,334l6,1 0-1 -9-2zM1476,585l-3,3 1,1 2,0 3-1 7-5 7-9 2-4 -3,3 -3,1 -8,6 -5,3zM1598,622l-2,6 -3,3 6,2 13,7 2-1 1-4 -3-6 4-5 -2-3 -7-1 -4-2zM1373,333l3-3 1-2 -1-4 -4-4 -5-1 -6-3 -3-3 -2,8 4,2 3,8 5,2zM1052,619l7,2 6,1 2-1 0-7 -9-3 -1-6 -6-7 -5,0 -7,2 1,5 3,6 -1,6 2,1zM817,361l-2,9 2,7 4,2 5-6 8-4 -2-7 9-1 -6-7 -7-2 -5-3 -4,2 -4,0 -4,2zM1172,475l7,8 21,5 5-1 -2-5 4-3 -2-1 -9-5 -9,0 -7-4 -5,1 -3,1zM832,306l-8-5 -6,7 -1,3 4,4 5,2 3-1 6,1 2-1 -1-3 -3-4zM1101,413l-6,3 -2-1 -14,9 0,2 0,1 7-3 7-4 9-5 -1,0 2-1zM1383,804l16-6 5-3 -1-5 -5-3 -2-3 -5-2 -4,1 -4,2 -2,2 1,5 -3,6 2,5zM1228,795l-4,1 -5-2 1,5 -6,0 2,4 4,4 15,3 8,4 -1-4 2-4 -5-3 -7-9zM1076,833l2-5 5-1 2-4 -4-4 -5-6 -3-6 -2-1 -4,1 -1,5 -3,1 5,5 1,5 3,7zM851,742l5-6 -1-8 -6,1 -5-2 -7,6 -1,4 4,8 5,0zM1427,320l5,5 4,1 4,1 3-2 -2-4 -1,1 -5-1 -4-5zM1742,543l-4,3 -3,6 -2,4 3,3 6-1 1-1 1-3 3-5 0-3 0-7zM811,539l1,5 -4,7 3,3 5-2 3-4 1-5 3-6 -1-2 -1-4 -3,3 -5-1 -5,1zM1182,365l3-4 1-4 4-3 -3,0 1-4 -2-1 -3,1 -6,4 -5,6 3,0 4,2 1,3zM1375,635l-4,5 3,3 -1,3 4-5 5-4 5-6 2-2 0-3 -2,0 -5,4 -4,1zM742,715l2-3 -4-9 -4-2 -3-5 -4-2 -2,0 -2,5 -4,2 0,6 2,3 5,4 3,3 6-2 4,2zM1061,638l5,0 -4-6 3-10 -6-1 -7-2 -8-1 -3,3 7,7 -2,3zM871,821l-1-3 -5,3 -5-1 -4,1 -3-2 -3,9 0,3 8-6 7,10 3,0 3-4 2-8zM963,719l5-2 14-11 -2,0 -2-1 -1-2 -4,2 -8,6 -1,3 -12,10 5-2 2,0zM1078,503l-6,1 1,4 -3,2 -1,3 12,7 7,3 8-5 -2-4 -2-5 -4-4 -8-3zM909,830l1-3 4-3 -1-3 -3-3 -11,2 -6-1 0,3 -3,2 3,3 3,8 8-3 3,2zM1168,372l12-7 -1-3 -4-2 -3,0 -4,4 -4,2 -4,4 -3,3 2,1 -1,4 3,1 1-1zM944,755l-3-1 -3,4 -3,1 -3,7 3,12 5,1 3,2 3-1 6-8 0-8 2-5 -5-5zM906,767l18-20 -5,3 -19,20 3,0zM1466,549l3,4 6,1 5,0 4-2 1-6 3-2 -16,0 -5-4 -1,3zM845,469l-5,4 0,6 2,8 -1,9 1,2 3-1 3-6 4,0 2-8 -2-11 -2-1zM1366,533l-9-1 -5-3 1,3 3,6 4,4 7,5 3,0 2-1 1-3 -1-5zM1354,897l-6,4 11-1 -1-2zM1373,696l-7-1 -2,1 -5,1 -1,3 1,3 5,3 8,1 4,5 1-4 5-1 1-2 -3-3 -1-2zM1432,713l3-3 5-7 0-5 -5-3 -10,9 1,3 3,2 -2,4zM1638,582l-4,5 -4,3 7,5 6-1 3-4 1-5 4-3 -4,0 -2-3 -4,0zM968,556l-13-2 -4,3 -5,0 4,4 -1,4 1,4 10,0 5,2 2-3 4-1 3-2 0-4 -1-2zM1331,606l-5,5 -3,5 5,2 3,3 10-4 5-4 1-6 -3-5 -11-1zM663,584l3-6 0-3 3-6 -4-5 -2-1 2,8zM928,338l-5-1 -4-6 -2,0 -4,3 0,5 -3,4 1,5 2,3 2,6 5,1 1,4 2,0 2-2 0-5 2-5 2-6zM1601,665l7,3 4-4 -2-4 -9-6 -4,0 -4-1 -3,0zM925,853l-4,1 -2,6 -7,1 0,1 3,8 5-2 7,3 6-1 0-4 0-4 1-3 -3-2 -1-3zM1616,624l4,2 6,0 3,3 4-2 2-3 -1-4 1-7 -4-1 -2-2 -6,1 -3,5 -6,5zM1403,704l-2-5 -3-4 -7-3 -6-1 -5,1 -1,8 1,2 3,3 5,0 4,2 3-1 5,0zM1077,779l-3,6 4,4 3,2 4,0 2-1 0-5 6-5 2-5 -2-3 -5,0 -3-4 -1,0 -10,7zM1654,677l-10-7 0-4 -1,0 -10,0 -4,1 3,4 6,3 3,4 12,2zM1215,532l-3,8 18-1 1-3 2-1 1-5 -1-4 -2-3 -12,5zM1125,614l1-3 -3-1 -2-5 -4-3 -3,0 -2,2 1,4 -3,4 1,5 3,2 5-2 4,1zM1176,702l-4-1 -5,7 -5,4 3,1 1,6 4-3 6,0 4-2 0-4 -1-4 1-4zM1296,472l-15-13 -8-5 -6-2 0,2 -3-1 19,17 2,0 6,5 3,1 -1-4zM971,867l5-2 1-5 -3-5 0-5 -4-3 -3-4 -4,2 -3,7 -9-3 -3,5 3,7 8,9 8,0zM1328,760l5,0 13-7 0-3 2-3 -2-4 -7-2 -5,2 -6-3 -4,2 -2,5 5,5 -2,6zM869,387l-5,5 -2,7 1,2 5-1 6-3 4,0 4-6 8-8 -7,1 -4-5 -7-1 -2,2zM1211,524l1-7 -5-2 -13-2 -2,5 4,7 -1,5 2,2 5,0 5-3 4-1zM878,575l-2-1 -4,6 -8,4 -2,5 -7,4 -3,4 3,0 1,2 5-3 4-1 6-4 4-5 4-6 0-4zM823,602l-6,2 -4,3 -1,5 2,2 -2,6 5-1 6-6 5-1 3-5 -4-3 2-5zM1174,484l-4,2 8,7 2,3 5,2 5,2 6,0 0-3 9,0 0-4 -2-2 -3-3 -21-5zM1158,756l15-9 5-9 0-5 -8,1 -7,3 -5,3 -6,7 1,6 3,1zM810,643l8-10 0-2 -4-1 0-6 -3-3 -3,1 -5,4 -3,3 1,8 -1,5 5-2zM1115,375l3,3 5,0 7-3 0-10 2-5 -5-2 -4,3 -5,1 -2,5 0,3zM929,831l5-2 7-2 2-9 0-5 -4,4 -6-2 -4,1 -1,5 3,4 -2,5zM1121,761l-6-2 -4,2 -2,5 -8,8 10,10 2,0 5-5 2-6 5-5 1-4 0-5zM1796,583l4-1 0-2 2-2 -6-5 -4-6 -4-5 -7,1 3,5 -5,2 2,3 8,4 3,4zM1174,317l-5,0 -5,0 -3,5 -4,1 0,3 1,2 12,2 5,4 3-3 4-4 -3-4 -1-3zM1156,401l4-8 7-4 7-6 -1-3 -7,0 -4-2 -7,5 -2,5 -5,4 1,3 3,2 2,4zM1403,780l3-6 8-3 0-1 -4-5 -17-2 -5,5 -3,4 0,5 2,6 4-1 5,2zM935,778l-3-12 3-7 -6,3 -4-3 -4,3 -6,9 -1,5 4,0 5,5 10-1zM889,803l1-1 3-4 5-2 3-6 -3-3 -3-1 -1-3 -2,0 -4,2 -3,4 -5,8 2,4 3,2zM692,459l-11-6 -3,3 -9,4 8,9 6,2 4-4 5,1 6,4 1-1 0-5 -3-5zM760,777l2-5 -5-2 -7-6 -4-1 2,9zM1080,869l5,3 8,11 2,0 3-5 4-3 -6-5 -3-7 -2-7 -5-1 -3,7 -4-2zM1123,361l4-3 5,2 2-3 -1-4 -2-6 -9-5 -9,14 5,6zM1476,732l3,6 0,4 4,0 3,0 4-1 3-5 6-3 3-5 -9-2 -3-4 -4,3 -3,0zM1247,685l7,5 4-1 5,2 6-7 -1-3 -4-6 -5-1 -4-2 -5,2 0,8zM1557,891l-1-5 -6,0 -4,2 -5,5 -1,4 3,2 10-4 8-1 0-1zM956,792l7-3 0-6 -3-4 -7,2 -5-5 -2,4 -3,1 1,5 5,2 1,7 3,3zM1432,549l-2,0 -7,4 -10,21 12-7 6-1 3-3 1-10 -1-2zM1817,546l-6-2 -4,2 -2,3 -5,0 4,4 5,8 6,0 5,2 -2-5 1-6zM963,682l-5-4 -12-4 -7,3 -5-1 -2,3 1,3 -3,4 5,1 2,2 5,1 6-1 6-3 5,1 4-2zM948,736l7-3 4-3 8-5 4-4 0-2 -2-1 -1-1 -5,2 -4,3 -2,3 -7,6 -5,5zM1149,640l-7-3 -3,0 -3,2 -1,2 0,2 1,3 7,3 3,7 9,3 2-3 4,0 3-2 -1-4 -9-10zM1091,657l1-5 -2-7 -2-2 -4-1 -2,3 -4,0 -2,1 2,4 -2,3 1,4 6,6 3,1 4,0 2-1zM1314,338l-5,2 -1,4 3,3 9,6 2-2 3-2 1-5 -3-6 -3-3 -5-2zM1371,667l7-5 1-7 -1-6 -6,3 -2,1 -5,6 -1,5 3,1 1,2zM1145,581l5-5 0-3 -3-8 -6,3 -11,3 -2,5 0,3 1,2 2,1 12,3zM1555,802l0,6 2,3 2,4 3,3 1,0 2,1 1-4 2-2 3-1 -1-2 -4-3 -4-6 -4-3 -2,1zM1213,630l-1-2 -4,2 -4-1 -4-2 0,5 -1,5 2,6 2,2 3,5 2-2 3,1 2-4 2-11zM749,658l-14-8 -5-1 3,7 4,5 6,4 6,3 5,6 -2-5 1-2 3-1zM994,784l1,5 1,1 2,1 3-3 3-7 3-4 6-5 -3-2 -3,0 -2-3 -3,7 -6,3zM1335,430l-5-7 -4,1 -7-4 -6,1 -3,5 5,9 -1,7 0,1 6,0 5,3 3-3 5,1 2-3 -2-6zM1528,432l2,2 4-1 9-5 0-6 2-5 0-5 -3,0 -2,0 -4,7 -4,5 -4,4zM1189,315l5,3 -1,7 4-4 3-1 -12-7zM1572,652l5,2 13-1 -3-4 -8-6 -5,0 -15-4 2,3 5,4 2,3zM1070,363l-2-2 -3-2 -3-2 -5,1 -5,11 0,6 9-3 2,2 5-4 2-4zM1164,552l-6,2 -7,4 -2,3 -2,4 3,8 0,3 6-2 4-4 5-1 0-6 3-11zM1631,612l4,1 5-5 5-1 1-5 2-3 -3-1 -2-4 -6,1 -6,5 -1,4 -1,6zM1672,822l-5-3 -4,1 -3,5 3,3 11-7zM798,692l-13-6 -7-3 -3,1 -1,1 4,4 -2,1 9,5 8,2 11,5 2,0 -2-3 -2-3zM1367,599l-9-5 -7,1 -2,3 -5,4 3,5 -1,6 5,1 5-4 6,0 2-2 3-5zM871,796l-2-7 -6,4 -3,1 -2,3 2,5 -2,5 3-4 6-3zM1630,565l10-3 5,1 2-3 2-1 -1-2zM1493,568l-5,6 1,0 3-1 6-5 5-5 -3-2zM1509,736l-1,3 3,3 2,0 5-4 4,0 3-4 1-4 3-3 -1-5 -7,1 -2,4 -6,3zM1166,672l4-1 4,1 1-1 -1-8 1-4 -4-1 -7-4 -3,2 -4,0 -2,3 -1,3 2,4 5,5zM899,569l5-3 12-10 4-5 0-3 2-3 -1-3 -2,0 -3,1 -4,3 -3,6 -8,11 -2,5zM1238,569l3-2 2-5 0-4 -2-2 0-2 -5-1 -5-3 -3-1 -11,6 3,3 -1,7 2,5 6-2zM1126,309l12-10 2-3 -3-5 -3,1 -1,3 -3-2 -3,2 -3,4 -2,3 2,2 -1,4 2-1zM1110,336l-3,11 1,4 3,1 2,4 9-14 -1-10 -1-1 -7,1zM1871,415l-1-5 -5,1 6,6zM1833,533l1,3 3,5 6,1 8,4 7,3 1-2 -1-4 3-8 -8-5 -3-4 -5,1 -6,4 -6-1zM1235,466l-4-5 -5-3 -3-4 -9-3 -8-4 -7-2 -6,1 -6,0 0,4 4,7 8,6 12,4 8,0 15,1zM1068,565l-8,0 -2,5 -7,2 -3,4 4,3 3,5 4-2 6,1 6-3 -1-3 5-5 -1-4 -4-1zM713,623l9,0 7,3 -3-4 2-4 -1-6 -7,1 -6-2 -8-4zM909,753l-1,4 9-5 5-4 4-5 4-5 -1-4 -5,2 -5,2 -10,10 -4,4zM1505,613l4-2 5-4 10-13 -2,0 -2-2 -12,9 -6,3 -1,8zM1136,785l-3-2 -2-2 -3,5 -5,3 -4,4 0,5 2,4 3,1 3-1 3-5 5-5 1-3zM1595,803l-8-6 -3-2 -3,2 0,8 4,8 5,1 3-2 0-5zM1540,836l-3,5 4,0 2,3 4,0 4-6 -3-5 0-4 -3,0 -1-1 -5,4zM1800,582l9,9 3,5 6,1 3-3 -2-7 2-4 -6-4 -6,1 -7-2 -2,2zM820,750l1,1 4,0 4-4 5,0 5-4 -3-6 1-4 -4-1 -10,0 -2,4 0,6 -2,6zM1196,525l-4-7 2-5 -4-2 -6,0 -9,4 1,8 -6,4 4,3 7,2 14-2zM1261,739l-2,4 0,4 9,5 2-6 11-7 0-5 -4-5 -2-1 -4,3 -4-1 -4,4zM1067,549l8,3 5,0 6-2 -1-3 -2-3 0-3 -7-4 -4-1 -1,1 -2,1 -1,4 2,3zM1073,443l1,3 4,2 8,0 4-3 3-4 -5-4 -3-5 -2,0 -4,4 -5,2 -2,3zM1234,661l0,4 4,7 0,7 5,6 4,0 3-3 0-8 5-2 -5-7 -5-5 -6,1 -3-2zM947,575l3-6 -8-2 -10,4 -8,2 -3,3 0,5 5,2 7-1 5,3 7-3 4-2zM1531,701l-3,3 -3,3 5,3 10,1 3-6 -3-3 -2-4 -8-1zM894,659l-5-4 -6-2 -13-2 -8,0 1,4 -1,6 6,5 9,0 9,2 7,2 0-4 4-3zM954,686l-6,3 -6,1 3,4 -5,5 2,4 4,1 5,0 5-1 4-5 4-1 0-4 -4-3 -1-3zM911,448l-10,11 0,4 -2,6 3,2 3-4 7-4 0-5 5-5 0-4 -4,2 1-4zM1644,851l-10-5 -4,1 0,6 -6,2 1,4 5,0 3,7 4,0 4-1 2-13zM1642,575l-1,4 4,0 2,3 4,0 4,0 4-2 2-4 -4-2 0-4 -3-2 -3-1 -4,1 -3,2 -3,4zM1114,403l-1,2 11-7 7-6 -3,1 0-3 -2-1 -7,4 -5,4 -3,5zM952,724l12-10 1-3 -3,0 -2-2 -6,3 -4,3 -5,5 1,2 2,2 -3,4 5-3zM1021,613l3,0 -5-6 -1-3 -13-4 -6,1 10,13 10,2zM1335,544l-11,1 -4,5 -2,4 5,10 4,5 1,0 3-5 5-4 5-2 -2-4 -1-8zM1767,561l4,7 8,2 5-2 -3-5 5-1 -7-3 -3-5 -6-1 -3,2 -4,0 -2,5zM1202,322l2,3 -3,7 0,3 4-3 3-1 3-4 0-3 -5,1 -3-3zM1371,672l0,5 4,6 3-2 8-6 -6-7 -1-5 -1-1 -7,5zM1626,591l-8,7 1,10 4,3 3,0 3-1 1-6 1-4 6-5 -7-5zM1887,461l1-5 4-4 -1-4 -3,0 -4,2 -2-2 -4,14 3,3 4,1zM979,586l1-2 0-3 -5-1 -3-2 -5,2 -8,4 2,5 -1,2 5-1 5,1 5,0 3-1zM1496,775l3,5 8,4 3,2 6,0 6-1 -3-4 -2-5 -2-5 -6-1 -5,1 -5,1 -3,1zM1640,906l-3,5 0,4 3,3 2,0 2-2zM914,838l2,1 2-5 3-3 -2-2 -5-5 -4,3 -1,3 -2,4 2,6zM975,591l1,3 -3,3 1,4 3,1 3,2 4,1 1-5 5,0 3-3 -3-4 -7,0 -5-3zM810,647l3,3 5,0 6,2 7,1 3-6 5-2 -7-5 -10-3 -4-4 -8,10zM1622,585l0,3 4,3 4-1 4-3 4-5 3-3 1-4 -1-1 -16,2 -5,6zM1051,598l6,7 1,6 9,3 0,7 1-6 3-3 6-3 -2-7 -5-3 -17-3zM1025,879l5-3 3-1 4-3 -4-10 -4-5 -2-1 -2,7 -4,1 2,4 -1,7 2,4zM1536,544l8-4 3-4 2-3 -2-3 -4,0 -4,4 -3,4 -4,2 -2,4 2,4zM748,689l-1,5 6,5 10,4 -3-7 4-2 -4-7 1-4 -5,3 -5-2 -7-2zM1094,633l5-3 1-4 3-4 -2-5 -6-2 -1-6 -3,2 -2,4 1,5 -2,4 5,4zM1366,309l-1-3 -1,0 -2,2 -6,1 2,4 3,3 6,3 5,1 -1-8zM891,648l12,5 7,1 1-1 5,0 -3-8 -3-4 -7,0 -17-1 0,2zM1222,508l2-4 2-3 -7-4 -7-1 -7-3 0,4 -9,0 0,3 9,3 8,3 6,4zM1105,585l7,1 3,2 6,3 6-6 4-3 -2-1 -1-2 -6,1 -11-3 -8,5zM933,716l3-9 -3-4 -9,3 -5-2 -1,4 -3,6 -1,4 3,3 3,2 6-4zM1039,683l-2-1 0-4 -3,0 -9,11 -2,4 4,1 -2,4 4-2 5-5 4-1 2-5zM1475,882l2,2 -2,3 2-1 6-4 6-10 -2,0 -6,2 -3,4 -4,2zM999,686l-1-6 -5-3 -6,2 -1,5 -8,1 6,2 1,4 8,2 4-1 4-1 2-2z"/>
<path fill="#e9e6db" d="M1174,877l-1,2 3,3 1,6 6,4 4-2 4,1 4-2 3-4 -2-5 -6-1 -5-4 -6-2 -3,1 -2,0zM840,700l0-5 -3-4 -9-4 -5-3 -8-2 -3,0 -8,4 3,3 1,4 24,11 4-2 9,1zM652,347l11-2 7-7 -6-6 -8-5 -1-1 -4,13zM1554,664l1,5 5,5 3,2 6,1 6,1 3-1 -2-4 0-4 -4-4 -13-5 -6,0zM1102,316l5,0 3-4 0-4 -3,7 -7,1 -1,1zM922,382l1-6 4-13 -1-2 -1-1 -2,2 -2,0 -3,6 -4,3 -2,5 -1,4 -2,4 2,0 2,5 2,0 5-4zM1620,582l5-6 0-2 3-8 -3,1 -5,4 -6,3 -9,8 1,5 4-2 5-1zM1070,567l4,1 5,0 6,0 2-1 -4-5 7-8 -3-4 -1,0 -6,2 -5,0 -3,5 -4,8zM914,433l4-1 8-5 7-5 10-13 0-2 -2-3 -4,1 -7,6 -5,4 -9,12 -3,5zM1657,592l6-7 -4-2 0-3 -4,2 -4,0 -4,3 -1,5 -3,4 2,4 3,1 6-2zM1915,387l1,7 3,3 2-1 0-8zM703,348l-5-1 -5,1 -5,5 -7,1 -2,3 2,5 6,4 6,0 3,3 2-1 3-2 3-4 0-4 3-5zM785,551l-6,10 2,2 1,3 3,2 3-1 1-1 4-3 3-5 1-9 0-4 -4,0 -3-2 -4,3zM1391,570l-4,8 3,3 5-5 4-3 4-5 5-10 -1-5 -5,5 -2-4 -4,3 -6,6 -2,4zM1365,787l3-11 -2-2 -1-5 -4,3 -4,7 -6,4 -1,5 6,3 5,0zM1744,521l8-7 -4-4 0-3 -6,5 -6,0 0,5 3,3zM973,559l1,2 0,4 12,5 6,0 4-8 -3-4 -7-1 -7,0 -7-3 -4,2zM1013,399l3,1 5-3 6-6 6-5 2-6 -5,0 -1-3 -2,1 -5,5 -4,8 -5,5zM1371,719l-12-1 -6,6 3,5 3,9 5-3 4-3 4-2 1-6zM698,368l-2,1 -3,5 -5,3 -4,5 -1,5 -3,4 5-1 10-7 3,1 3-3 6-8 -3,0 -1-4 -2-3zM1335,575l6-1 5,1 1-3 4-3 -1-3 0-4 -2-4 -7,0 -5,2 -5,4 -3,5 3,4 -1,5zM1291,327l10,11 1-3 -2-9 -4-4 -9-3 -7-1 2,3 -1,2zM917,409l4,5 4,1 5-4 7-6 2-4 -4-1 0-7 -7,3 -4-2 -6,5 -5,7 -1,4zM1327,681l-8-6 -5,1 -2,1 -2,3 3,6 -1,5 4,3 0,3 3-3 3,0 3-5 1-5zM685,492l1-6 -4-3 1-9 -6-5 -6,10 -5,1 -1,8 3,2 3,5 4,2 4-3 4,1zM1872,466l6-4 4-14 1-7 -2-1 -3,2 -3,4 -3,2 -2,3 0,5 0,6zM1121,402l6-5 2-3 -16,11 -5,5 -7,5 1,0 5-2zM1264,342l0,4 -6,8 -1,5 2,3 -1,4 3,0 4-3 4-4 4-2 3-5 -2-3 -5-3 -2-4zM1591,884l6,0 4,0 5-10 -1-4 -3-3 -4,3 -7-2 -5,5 -2,5 0,6 1,3zM1672,592l-4,1 -3,5 1,2 4,3 1,3 1-4 2-3 3-2 0-3 -2-2zM1067,325l7,8 3,3 5,1 3-5 5,0 -1-4 -3-5 1-5 -4,0 -5-4 -7,2 -1,4 -5,0zM1000,370l0,4 5,5 3,1 3-3 6-2 0-5 -1-4 -2-4 -5-2 -4,1 -6-1 -2,1 -1,5zM1666,654l14,7 6,4 2-2 2-4 -7-8 1-4 -8-1 -8-3 -1,3 -4,2 2,4zM730,585l5-5 5-2 7-10 1-6 -6,0 -8,1 -3-3 -3,6 -5,7 -6,4 1,6 1,4 6,0zM1694,766l1-3 6-2 -4-4 3-5 -1-5 -8,2 -3-2 -4,4 -3,5 1,5 7,2 4,3zM949,524l6-3 5-1 0-2 -2-3 -6-5 -4,4 -8,2 3,6 -1,4 1,2 3,0zM1056,424l3-1 0,3 14-7 3-7 -4-3 -6,1 -3-1 -2,4 -7,9zM1182,699l-2,3 -1,4 1,4 0,4 2,0 5-2 7,0 4-5 -2-2 0-4 -4-1 -3-3 -4,0zM1616,685l-2-4 -4,2 -6,0 -4,1 0,4 -2,4 4,6 5,1 4-1 6,3 3-3 2-4 -1-4zM1450,708l2-6 -3-5 -3,0 -2,1 -4,5 -5,7 0,4 3,1 1,3 1,0 4-1 2-3 4-2zM1559,362l1,3 1-5 -4,1zM1068,681l2-1 3,2 2-3 3-1 2-3 -4-3 0-5 -3-3 -1,4 -3,0 -3,3 1,7zM846,766l-3-1 -3-2 -1,1 -5,4 -6,6 -7,4 5,6 7-4 5,0 1-4 8-9zM1448,486l4-1 4-3 -4-5 -1-8 -10-4 -4-4 -4,3 1,8 -2,10 2,4 2,2 6,2 4,0zM861,322l0,4 6,8 -1,3 8,4 5,4 4,2 5,0 1-4 4-6 -3-6 -5-4 -6-2 -7-1 -8-4zM1428,808l-3-4 -7,3 -4,2 1,4 2,4 0,4 5,0 3,5 5-2 2-1 1-3 -2-6 1-6zM819,396l-15,7 2,4 -1,5 0,5 4,3 6-2 4,1 8-10 2-7 1-8 -3-1 -2-2zM707,393l-6,4 0,4 2,6 14,4 4-3 1-6 4-2 0-6 2-6 -3-4 -5-2 -5,4 -7,2zM1005,767l2,3 3,0 3,2 6-3 3-5 4-3 -1-4 0-3 1-6 -4,0 -5,1 -9,10 -3,5zM1286,626l1,9 0,6 4,3 4-5 4-2 4-1 -1-4 0-3 -4-5 -5-1 -1-5 -2,0 -2,2zM742,340l1,2 1,4 4,3 3,5 4,0 3-2 3,0 -1-4 1-9 -5-3 -4,1 -8-2 -3,1zM812,446l-9-1 -10,12 -3,7 2,4 4,3 3,2 4-1 3-3 3-3 3-9 2-6 -1-3zM1292,606l-2,12 2,0 6-7 13-4 1-5 4-6 -5,1 -3-3 -3-1 -9,7zM1526,338l2,5 4,5 -5-10zM1522,334l-2,0 0,1 -2,0 1,0 5,1zM896,503l-3,3 -7,5 1,4 8,8 7,4 6-1 3-1 1-4 1-3 -2-4 -8-4 -1-5zM980,506l5,1 4-2 -3-5 1-3 -2-4 -3-1 -3-4 -3-1 -2,4 -2,6 -4,4 1,6 3,2 4,1zM1584,516l-4,3 -1,4 -3,4 -1,3 2,1 0,2 3,0 3-2 2-2 3-5 0-5 -2,0zM1610,830l-6-2 -3,3 -5-1 -2,4 1,4 2,3 5,3 3,5 5,2 6,2 4-1 -4-7 -1-8zM1010,304l6,5 4-1 -5-4 -6-1zM1261,647l10,8 0-4 -2-5 -2-6 -4-3 -3-4 -3,5 -3-1 1,6 3,4zM1594,545l-5-1 -2,5 0,5 4,3 4,1 3,0 4-5 2-6 -3-2 -1-2zM668,438l4,2 5,0 10,1 3-3 -3-8 0-6 -6-3 -11,0zM806,511l3,1 3-2 1-3 1-3 -4-5 0-4 -3-5 -4-3 -6-1 -3,2 -1,2 3,5 -1,2 4,4 2,5zM679,494l-4,3 -4-2 -4,9 -2,11 0,2 3-2 4-3 3,0 5-7 0-3 3-7zM1043,578l-6-2 -1,1 -2,5 -4,8 -2,6 6,0 5,4 7-2 5,0 2-2 3-4 -4-4 3-4 -3-5 -4-3zM1357,742l-9,5 -2,3 -1,9 3,1 0,5 6-2 14-12 0-1 -2-3 -2-4zM1214,799l6,0 -1-5 -7-4 -3-5 -3,1 -11-2 5,10 6,5 10,4zM1563,571l5,0 11-2 -1-3 -2-7 -10,1 -1,3 -4,4 0,3zM1577,507l0-4 -1-6 -5-1 -6-5 -2,1 -1,2 1,5 1,5 4,3 3,0 4,3zM1187,473l9,0 9,5 2-4 1-4 3-3 -12-4 -8-6 -4-7 -2,4 -9,3 -1,3 6,6 -1,3zM1640,656l1-4 3-2 -1-7 -4,1 -4-4 -5,0 -4,3 2,5 3,3 0,4 4,2zM1438,502l-3-6 0-5 -4-1 -7,2 -1,2 4,6 3,3 5,4 4,1 3,0zM682,544l2,5 -3,5 0,5 4,1 5,3 4-4 5-3 -1-4 3-5 0-5 -4-3 -6,3 -5-1zM1078,340l2,5 1,5 2,1 2,1 5,1 2-3 3-2 1-4 0-4 -1-4 -5-4 -5,0 -3,5 -5-1zM1206,365l3,4 6,1 5-1 2-3 5-3 1-5 -4-1 -6,0 -4-4 -4,3 -5,2 -2,6zM1758,723l-7,2 -6,8 -7,1 3,4 1,5 -2,7 1,0 5,0 3-4 6-3 3-6 3-14zM1631,506l0,3 -8,9 1,1 7-10zM1403,878l2-3 -1-3 -1-7 -3-3 -4,0 -3,3 0,5 -2,4 0,4 7,4 4-2zM1434,850l6,5 7-4 16-4 -4-3 -7-3 -3-4 -4,2 -5,0 -4,3 0,5zM804,575l4,0 0-6 4-9 -1-6 -15,4 -3,5 -4,3 5,2 0,5 6,3zM1086,323l3,5 1,4 5,4 1,4 6-5 3-11 2-6 0-2 -5,0 -3,1 -2,3 -8-5 -2,3zM1185,786l3-4 7,2 1-6 -3-11 -2-3 -11,4 -5,6 0,3 4,8zM1418,727l-5,5 5,4 1,3 5-2 7-1 -2-7 4-5 -5,2 -3-2zM767,286l9,4 2-1 4,0 -2-1 1-5 -2-2 -1-2 -4-3 -4,1zM939,320l-1-3 -8,1 -6-4 4,8 10,3zM921,301l-5-2 -5,5 5,5 7,4 5-6 -1-3zM1558,823l4,14 1,1 3-1 2-5 4,0 -5-9 -2-4 -2-1 -1,0zM1770,656l2,5 5,5 2,4 3-8 -2-5 -5-1 -3-2zM1894,445l-3,3 1,4 9,5 3-1 1-4 -1-4 1-4 -2-1 0-4 -4,0 -2,0zM1452,876l3-4 7-1 0-2 3-2 -1-1 -8-2 -15-5 -4,3 -2,6 3,4 7,5zM1195,668l-3-2 -2,2 -2,3 -3,7 -1,3 1,3 3,2 4-1 5-6 0-5 3-5 0-2 -2-3zM951,410l2-4 0-3 -10,6 -10,13 0,2 -2,3 21-16zM793,529l0,7 -3,7 3,2 4,0 4-3 4-4 3-4 -1-2 -3-5 -6,2 -5-7zM1886,515l-10-6 -2,2 0,3 -1,1 1,1 5,4 4,1zM802,349l-6,2 0,6 -3,3 3,6 6,2 2,8 8-2 5,3 -2-7 2-9 -6-8 -4-1zM1248,395l3-5 4-4 -3-2 0-5 -4,0 -5,2 -4,5 -4,2 -3,4 -1,4 3,4 5,1 5-2zM1237,861l-4,9 3,2 5,11 2,0 5-1 4-4 2-5 -3-6 -3-3 -3,0 -5-4zM1826,464l-4-1 -3,1 0,2 2,4 8,8 0-3 3-2 -1-4 -3-6zM1339,450l7,2 4-1 2-5 0-4 -3-5 -4-5 -10-2 -2,5 2,6 -2,3 2,3zM1242,581l-7-6 3-6 -11-1 -6,2 -3,1 -2,4 8,4 2,6 6,6 3-2 6-1zM965,457l4,3 2,5 8,4 1,0 1-4 3-3 0-6 -3-1 -3-4 -6,0 -6-2 -3,3zM1194,318l-5-3 -3-6 -2,4 -7,2 -3,2 4,3 1,3 3,4 3,1 4-2 3,1 1-2zM1530,554l6,0 8-3 4-2 5-10 -3-1 -3-2 -3,4 -8,4 -4,4 -2,4zM1667,595l1-6 -1-2 -2-2 -2,0 -6,7 -3,5 0,3 3,0 4-2 4,0zM1047,696l-4,3 -1,2 5,0 4,3 3,5 4-3 7-1 4-6 -1-4 -4-4 -4-1 -5-1 -6,4zM760,748l-5-4 0-4 -3-3 -5-2 -17-4 10,17 3,1 4,2 12,0zM1375,351l-3,5 0,4 4,2 2,6 6,4 8,1 7-13 4-5 -2-3 -15,0 -8-3zM1348,704l-5,3 -3-3 -2,1 -2,11 1,5 10,1 6,2 6-6 -5-6 0-5zM728,322l-2-2 -3,1 -7,1 12,3zM1690,565l-1-3 3-4 -3,1 -4-2 -6,3 -5,1 0,8 2,2 4,0 7-2zM1584,734l0-4 0-7 -6-2 -5,0 -2,2 -5,0 -2,4 -1,4 3,3 7,2 5,4 3,0 6,1 2-1zM1674,549l9-3 1-5 -5,4 -6,2zM1521,800l-3,1 3,5 6,4 5,1 5,3 2-1 4,0 -3-5 -5-4 -7-3zM1245,819l3,6 3,4 7,4 5,4 2-5 0-3 -3-6 -6,0 -5-6 -6-1zM876,481l0-3 1-3 0-5 -2-6 -6,3 -3,6 -2,5 -3,6 3,2 8-3 3,2zM748,298l11,9 6,4 3-4 12,1 0-2 -1-2 -9-7 -8-4 -2,2 -5,2 -8-3zM1705,739l-2,4 -2,3 4,2 5,1 7-1 0-4 6-8 -5,0 -2-2 -4-1 -4,2zM1645,743l-4,0 -6,2 -2,6 4,3 2,4 1,3 4,1 5-2 6-6 1-5 4-6 -7-2 -2-3zM1290,365l3,4 4,1 4,0 3-4 2-4 -2-7 -5,1 -4-2 -7,9zM1668,475l-9-1 9,2zM1640,690l2-1 -5-7 -10-5 -5,0 -8,4 2,4 5,5 6,2 6,1 7-1zM696,461l4-6 0-5 -13-9 -10-1 -5,0 1,4 5,4 3,5 11,6zM1421,552l-2-3 -3,1 -3,4 -5,4 -5,10 5,6 5,0 10-21zM1240,612l5,7 1,6 5-8 4-3 1-3 -1-4 -3-1 -3,1 -3-3 -3,4zM851,383l-6-15 -4-7 -9,1 2,7 -8,4 -5,6 1,6 5,8 3,1 10-1 7-3 1-4zM1834,557l7,6 3,1 3,2 5-2 3-1 -1-5 5-4 -1-5 -7-3 -8-4 -6-1 -4,2 0,8zM1416,618l-3,0 -4,5 -4,3 -2,5 -1,5 3,3 4-3 4-2 3-4 -2-3zM806,469l-3,3 -4,1 2,10 2,4 4,3 5-2 7,2 4-3 0-4 1-3 -5-6 -7-1 -3-7zM1415,381l-2-4 -5,3 -6-2 -6,1 -3,5 0,4 4,7 -1,4 2,1 16-17zM1278,370l-5,4 1,5 2,1 3,3 4-1 9,2 5-7 0-7 -4-1 -3-4 -2-2 -6,1zM1763,470l-5,2 7,6 -1,3 2,1 6-2 -2-5 -3-4zM1112,569l-2,5 1,3 11,3 6-1 0-3 2-5 -4-3 -7-1 -3-4 -7,1 -1,1zM1380,755l3-5 1-4 -3,0 0-2 -12,9 -4,5 -2,7 2,0 1,2zM1421,598l-13,14 -5,7 0,1 9-7 15-15 -2,1 0-3zM885,455l2-5 -8-1 0-7 -4,5 -10,5 1,11 0,3 3,1 6-3 3-3 4-2zM1107,660l-3-6 1-3 -6,0 -4-5 -4-1 1,7 -1,5 1,6 6,3 7-3zM1777,612l-4-2 1,5 2,5 -2,3 4,5 5,3 3,1 3,2 -1-6 2-4 -5-7 -6-5zM1790,481l-1-2 -1-3 -12-7 -3,2 -6,0 3,4 2,5 4,1 6,3 5,2 3-3zM768,757l0,7 2,5 4-2 9,1 6-4 5,0 1-3 0-2 -3-4 -5,1 -4-5 -22,1zM1604,536l-3,3 -1,4 1,2 3,2 3,0 1-9 4-3 -1-1 -2-5 -2,0 -4,2zM1112,511l-3,6 -1,4 4,4 6-2 4,4 2-5 3-3 1-4 -2-5 -5-4 -4-1 -5,1zM1259,924l-2-8 -6-3 -5,4 -15,2 1,5zM940,516l8-2 4-4 -1-4 -2-3 -4-4 -8,2 -5-4 -2,3 2,7 3,5zM1780,657l2,5 4-9 -6-2zM1721,598l-4,6 2,2 7,4 8,3 7,2 2-4 5-1 -1-3 0-2 -8-5 -9,0 -6-5zM1565,865l4-2 5,0 -5-5 1-7 -4-5 -3,3 -1,3 -5,1 2,5 0,3 1,6zM1581,740l-3,0 -5,2 -1,4 1,5 10,7 7,3 3,1 4-1 1-5 -7-10 -4-5zM1675,774l-3-3 -8,4 -3,11 2,3 4,4 3-4 9,0 5-6 -3-3 0-4zM1216,338l2-6 -2-5 -5,0 -3,4 -3,1 -4,3 -1,1 2,5 0,4 4,1 5-3 4,0 1-1zM797,734l6-5 -4-6 1-5 -9-7 -2-1 -4,2 -9-1 -6,0 0,3 12,12 7,8 3-1zM1198,420l7,1 4-2 1-3 -1-4 -9-4 -3-4 -3,1 -4,4 2,4 -2,4 3,4zM1713,777l-3,3 -5,2 -1,3 7,8 2-1 10-10 -5-6zM866,709l6-5 1-6 3-6 -4-3 -19-3 -8,0 -2,3 -6,2 3,4 0,5 5,3 9,3 9,3zM1914,385l6-10 -2-4 -4,2 -6,12zM998,523l3-5 3-2 -2-2 0-2 -7-5 -6-2 -4,2 -5-1 -4,4 0,5 6,4 2,4 5,1 5,1zM1397,895l-3-2 0-5 -4,4 -6,5 -4,1 -1,2 17-1zM1473,468l-4-2 -1,6 -5,3 -1,7 2,2 5-1 2,3 3-2 2-5 2-6 -1-5zM1148,433l-10,2 -4-3 -1,8 -3,4 10,7 6-10 3-4zM745,368l-10,11 0,6 7,4 10,1 6,5 7-6 1-5 -4-3 -1-5 -4-4 -8-1zM1848,582l-6,2 -7-6 -6,1 -4,5 5,8 3,2 12-4 3-7zM1758,685l9-4 2-2 1-5 -2-4 -3-4 -4-3 0,7 -2,5 -4,4zM1432,370l-3-3 -4,3 -7-1 -3,3 -2,5 2,4 -1,2 2-2 16-7zM1439,508l-4-1 -1,4 0,5 2,3 3,2 3-1 4,4 2-2 1-1 -1-3 -3-4 0-4 -3-2zM1757,531l4,0 3,2 3-1 2-3 -2-7 2-5 -4-2 -4,1 -4,5 -5,5 -2,6 0,2zM1543,579l11-5 2-4 -4-1 -5-5 -4,1 -4-1 -2,4 -3,4 0,3 6,1zM1765,726l4,2 -2-10 -6,5zM1917,418l-5,4 1,4 -2,4 5,0 5-5 0-9zM1176,565l5-5 5-9 0-3 -8-1 -6,2 -4,3 -3,11 0,6 2,1 1,1 2,0 2-2zM939,596l-2-5 1-6 -5-3 -7,1 -5-2 -5,3 0,5 -2,10 3,3 11,3 2-1 4,0 8-5zM1262,893l-7,0 -6,1 -1,6 3,2 2,4 7-3 9-1 8,2 -4-5 -4-10zM1083,318l4,0 2-3 -2-1 -9,0zM939,515l-4,0 -3,2 -5-1 -1,2 3,4 1,4 3,2 4,1 5-3 1-4 -3-6zM1384,807l-1,2 9,1 5,5 3-3 8,0 3-4 -5-9 -2-4 -5,3 -16,6zM1268,752l1,7 10,1 5,3 6-1 7-6 -8-4 -4-5 -2-7 -2-1 -11,7zM941,329l-3-4 -10-3 -2,4 -4,1 -3,4 4,6 5,1 1,6 3-4 4-3 5-1 1-5zM1473,504l1,6 -3,6 4,7 4,4 2,0 3,0 4-5 4-2 -1-3 -5-7 -6-1 -3-6 -3,0zM1719,589l-10-3 -5,1 -4,6 2,3 0,3 5,3 10,2 4-6 3-3zM767,317l-3,3 6,10 -4,2 -1,4 4,1 4,4 4,2 7-4 0-5 0-3 -5-6 -6-2zM1453,420l7-6 -3-5 1-2 -6,0 -5-2 -3-2 -3,1 -6,2 5,9 6,4 3,1zM1217,605l-5,4 -7,0 -5-3 -6,4 -1,4 1,5 4,2 2,6 4,2 4,1 4-2 4-6zM981,374l-1,4 4,1 6,4 4-3 5-2 4-1 -3-3 0-4 -4-4 -9-1 -5-2 0,3 -3,4zM1120,535l-5,4 -1,4 7,7 4,2 3-4 14-8 -3-6 -10-4 -7,0zM1360,511l-13-9 -9-6 -1,0 1,5 4,7 -2,3 3,3 7,2 7,6 5,1 4-3zM851,316l-6,2 -9-5 1,3 -2,1 2,5 5,7 8,5 16,3 1-3 -6-8 0-4zM1331,372l2,6 5,1 6,1 5,2 4-1 2-3 -5-12 -6-2 -10,1 -2,2zM1130,917l3-1 -2-13 -2-5 -1-1 -8-2 -8,4 -4,0 7,10 13,10 1,0zM1631,881l-4,3 -3,1 -11,14 -8,6 0,2 3,0 6-2 6-5 6-10 6-8zM1846,496l-2-5 -2-4 -2,0 -3-1 -2,2 2,10 4,2 4,6 4,2 2-3 -1-4zM1458,644l1,4 4-1 3,2 3,0 0-2 2-2 -2-3 -5-4 -3,1 -4,0 -3,1zM658,361l6-5 9,0 6,1 2-3 -8-11 -3-5 -7,7 -11,2 5,14zM1298,388l3,2 8,1 0-4 5-2 4-3 -5-5 -7-2 -5-5 -4,0 0,7 -5,7zM974,537l-8-3 -5,3 -12,4 0,4 4,4 2,5 13,2 4-2 2-4 -1-6 3-5zM1862,440l7-3 2-4 2-2 0-3 1-4 -2-1 0,4 -9,10 -2,3zM1068,565l4-8 3-5 -8-3 -7,2 -3,2 -2,2 2,3 0,4 3,3zM1412,712l-4-2 -2-3 -11-1 -3,1 4,4 -1,4 2,4 3,1 4-2 3-4 5-1zM1220,669l1,4 0,5 0,5 4,5 6-1 4,3 3-3 5-2 -5-6 0-7 -4-7 -5-1 -4,4 -4-1zM949,540l-13,1 -1,5 -4,2 -1,4 2,1 0,2 4-1 5,2 5,1 5,0 4-3 -2-5 -4-4 0-4zM714,611l6,2 9-1 3-3 0-1 -7-4 4-6 -1-6 -3-5 -6,0 -5,7 -7,2 -3,7 2,4zM1805,540l6,4 6,2 2-14 -2-5 -4-4 -2-1 -2,4 -3,3 -3,4zM1561,894l12-2 9,4 1-5 2-4 -1-3 -5,0 -5,3 -13,6zM1364,663l-4,2 -4-1 -4,0 -2,3 0,6 3,2 4-1 3,2 1-4 3-8zM1372,312l-5-5 -2-1 1,3zM1283,360l-1-5 -3-3 -3,0 -3,5 -4,2 -4,4 -2,6 2,4 3,2 3-1 2,0 5-4 4-6zM1574,582l-3-1 -4,0 -5-1 -5,4 -7,0 -5,4 1,3 6,0 3,2 4-1 4-3 7-3 4-3zM1407,464l-2,4 4,6 7,4 16,4 2-10 -1-8 -9-3 -8,3 -8-5zM1676,583l-1-3 -5,2 -5,3 2,2 1,2 0,4 4-1 3,0 2-4 4-4zM1425,329l5,4 0,5 4,3 4,2 3,2 5,1 2-2 5,1 -1-6 -8-5 -4-7 -4-1 -4-1 -2,3 -5,0zM1278,388l-3,7 5,2 4,6 12-2 6,0 3-4 -1-3 -3-4 -3-2 -6-4 -9-2 -4,1zM667,458l-4,29 1,1 1,0 1-8 5-1 6-10 -3-4 -5-5zM1417,441l4,0 2-6 7-7 -7-9 -6,1 -5-1 -4,1 0,8 4,5 0,7zM1517,660l-2,0 -1,2 2,3 15,8 6,2 8,0 2-2 -8-7 -7-4 -12-3zM1148,712l-5,7 -1,2 1,3 2,0 6-5 4-3 4-4 -2-1 0-3 2-5 -2,1 -4,3 -2,0zM1137,474l0,4 -2,4 0,3 4,0 7,3 2-3 4-3 4-1 -7-8 -5-1 -5-3 -4,1zM712,543l6,1 9,3 1-2 -2-6 -1-7 -3-8 -6-3 -6,1 -4,3 -1,3 -1,5 1,6zM1651,720l0,18 2,3 7,2 3-2 3-5 5-3 2-4 -2-5 -7-9 -4,4zM1017,725l1,4 2,1 4-3 8-3 2-7 5-13 -10,7 -6,0 -6,6 -2,4zM996,555l-3,3 3,4 -4,8 5,0 13,1 6-6 -4-4 -8-2 -2-5zM1451,758l-5,6 0,3 4,1 5,5 1-1 5-6 0-6 -2-2 -3-1 -2,1zM1567,777l10-3 0-4 1-2 -5-4 -8-5 -3-1 -4,1 2,5 3,6 1,5zM1007,708l3-1 1,2 4-1 4-3 3-3 3-4 2-4 -4-1 2-4 -2,1 -4,6 -6,3 -6,6zM1185,693l3-3 0-4 -3-2 -1-3 -4,5 -5,4 0,3 -3,8 4,1 4,0 2-3 3-2zM897,704l4-1 4-4 3-10 -1-6 -3-3 -5,0 -7,4 -3,6 -9,2 7,2 3,7 3,5zM1411,510l4,3 2,6 4,0 4,3 2,0 1-3 1-4 -2-4 -6-4 -4-1 -2,3 -5-2zM1446,609l9-7 1-3 -2-2 2-3 -4,2 -2-1 -5,2 -8,5 -4,5 2,2 4,1zM1610,570l-16,14 1,3 6-4 4-1 1-2 1-3 3-4 5-5 -2,0zM656,327l8,5 6,6 5-1 -19-12 -1,1zM680,331l8,0 -1-6 -1,0 -5,3 -2,5zM1321,315l3,5 1,0 2-13 -2-5 -4,0 3,6 -3,6zM1285,491l-5,0 -3,9 10,7 3,5 2-3 5,0 1-3 -1-4 -6-7 -2-4zM733,509l-6,0 -5,1 -1,3 3,5 8,3 6,7 5,2 1-4 5-4 -4-4 -7-11zM1193,802l-1-3 -13-11 -6,0 -3,4 -3,1 1,3 5,4 13,7 4-1 3,1 2-1 0-1zM1738,533l2-6 4-6 -5-1 -3-3 -4,2 -6,6 2,3 -2,6 4-1 7,1zM1676,519l-3,0 4-3 4-6 -4,6 -5,3 4,1zM1280,313l1-4 -2-2 -3,4zM1111,784l-10-10 -2,0 -4,1 -2,5 -6,5 0,5 4,5 4,0 4,3 2-6 8-1zM1600,906l5-7 3-5 -1-3 -1,0 -6,4 -5,4 -4,2 6,7zM928,467l-7,1 -6-1 -3-4 -7,4 -3,4 2,5 4,4 1,4 5,1 6,3 5-1 2-2 2-2 -3-5 0-4 2-6zM1474,496l-2-4 -1-6 -2-3 -5,1 -2-2 -3,1 2,5 0,12 4-1 5,3 3,2 1-1zM1537,658l0,3 -5,1 7,4 8,7 7,0 6,1 -5-5 -1-5 -1-4 -2-2 -9-1zM1265,373l-2-4 2-6 -4,3 -3,0 -5,5 -2,5 -3,3 4,0 0,5 3,2 5-6 4-1 4-4zM1395,602l0-5 2-6 -3,2 -4-1 -7,12 -5,5 3,1 0,3 9-1 4-5zM963,435l10,6 5,0 4-3 6,1 3-3 2-8 -1-5 -8,4 -6-2 -8,1 -5,5zM1357,674l-4,1 -3-2 0,4 1,4 0,4 7,1 4,3 3-7 -4-3 -1-3zM1610,830l-1-5 -3-6 1-5 -5-5 -3-2 -4-4 -2,4 0,5 4,4 2,8 5,4zM796,495l-3-5 1-2 -4-5 -3-2 -4-4 -5-2 -3,3 -5-3 2,4 7,9 16,9zM1480,465l-5-14 0-6 -5,0 -2,7 -5,2 0,3 2,5 4,4 4,2 4,0 1-2zM1616,820l5,2 8,7 4,1 1-1 -3-4 -3-6 -4-4 -5-4 -3-3 -4-1 0,3 0,3 -3,1zM1126,309l1,4 5-1 1,4 3,1 1-1 1-5 2-4 1-3 -1-2 -2-3zM1587,419l13,3 3,0 -3,0zM1684,541l-1,5 3,1 2,2 6-1 5-3 5-4 1-1 0-4 -3-3 -5-2 -2,1 -1,3zM1542,470l-3-10 -2-2 -3,3 -5,7 1,0 5,4 7,0zM1194,562l6-2 2,2 5-4 5-3 -4-3 4-7 -3-2 -7,4 -3,4 -7,6 -2,4 0,1zM1119,627l3-3 1-3 0-3 -4-1 -5,2 -3-2 -2,3 1,4 4,4 0,5 4-1 2,0zM1624,664l5,3 4-1 10,0 -3-6 -5-3 -4-2 -5-1 -2,1 2,4 -2,2zM1848,583l-3,7 8-4zM1758,700l-3-5 -10,7 -3,9 -1,5 1,1 5-4 5,0zM1131,608l3,0 -1-4 1-4 0-4 -4,2 -4-2 -5,1 -1,3 -3,2 4,3 2,5 3,1zM1781,639l-6-1 1,4 -3,2 7,7 6,2 3-5 -2-3zM1426,644l-7-9 1-5 -4,0 -3,4 -4,2 -4,3 -1,3 1,4 3,2 12,1zM717,435l0-6 -2-7 0-6 -5,0 -7,5 -6,0 -5,4 9,12 8,4 9-1zM1042,387l2-1 8-11 0-6 -3,3 -3,0 -4,6 -8,7 -1,4 3-1 0,4zM1542,617l3,1 4-3 10,0 -2-4 1-3 -3-3 -6,0 -4,1 -3,3 1,4 -2,3zM971,567l-4,1 -2,3 2,4 8,5 5,1 3-1 3-1 3-2 0-4 2-2 -5-1 -12-5zM1595,803l2-2 0-7 -5-9 -3-1 -3,0 -2,2 -2,5 2,4 3,2zM1834,456l-1-1 -4-2 -1-5 -3-2 -5-2 -4,4 4,5 4,3 4,6 1,0 4,1 -1-2 3-1zM911,380l1-4 2-5 -4-1 -4,1 -2,5 -7,6 2,3 1,4 3-1 6-4zM1219,646l-3,1 -3-2 -2,4 0,6 -2,6 1,5 2,2 4-3 4,4 1-2 0-7 1-6 0-5zM1483,396l-9-1 -4,4 -4,0 0,1 3,4 14,8 4-1 7,1 1-2 -3-8 1-2 -11,0zM996,879l-2-5 -3,1 4,4zM1557,494l-6-2 -8-5 -2,0 7,10 9,5 3,3 3,0 1-1 -1-5 -1-5zM1879,520l-5-4 -1,2 -4,0 1,4 3,3 7,5 0-2 3-7zM1352,664l-6-5 -3,2 -3,4 0,6 1,4 3-3 3,2 3-1 0-6zM1567,847l5,0 6,2 3-3 -2-4 -1-6 -2-3 -2,0 -2-1 -4,0 -2,5 -3,1 0,3zM1402,636l1-5 2-5 -2,0 -5,7 -3,1 -5,6 -1,6 4,1 11-5 1-3zM1488,448l3,5 1,5 2,0 3-2 2-3 0-3 2-2 -1-2 0-3 -6-2 -4-3 -3,2 -3,4zM1375,875l-3,3 -2,3 -2,5 2,3 3,0 4-2 4,0 5-7 -6-6zM1347,354l-9-7 -2,3 -2-1 -2,5 2,7 0,4 10-1 6,2 2-7zM1780,490l-6,2 5,7 2,4 4,5 2-1 2,0 2-3 1-4 -2-3 -3-5zM1548,881l-4-4 -8,1 -1,5 -3,4 -2,3 4,3 7,0 5-5 4-2zM1371,312l1,8 4,4 9,4 3-4 9,4 -1-4 -5-5 -9-3 -4-4 -3,2zM1107,415l10-8 6-6 -16,12 -5,2 -4,4 1,3 4-2zM1879,556l-2,1 -1,5 -2,6 -4,5 0,2 1,1 6-3 11-4 1,1 1-2 1-4 -2-4 -3,0 -3-4zM733,336l-6,1 -4,2 1,4 -1,4 2,1 0,2 5-1 4,3 3-1 3-3 4-2 -3-10 -5-4zM1798,515l-6-4 -3-4 -2,0 -2,1 -2,2 3,7 -1,4 3,2 6,1 4-4 1-3zM1388,439l3,0 1-5 3-6 4-6 -2-2 -3-2 -3,1 -4,4 -4,1 -4,8 0,4 4,2 3,4zM1768,700l1,6 1-9zM1490,773l-4-3 -6-1 -4,1 -1,1 0,2 7,5 3,3 5,1 9-2 -3-5zM937,405l4-1 2,3 0,2 10-6 6-5 1-4 5-6 -8-3 -6,3 -5,7 -7,6zM1289,811l4,2 4-2 0-5 -3-4 1-5 -3-2 -8,0 0,4 -2,4 -2,5 2,1 3,3zM1633,693l-6-1 -6-2 1,4 -2,4 5,2 5,4 6,2 2-5 6-2 -3-4 -1-3zM922,449l5,0 6-2 3-5 1-5 2-4 -1-2 1-3 -2,0 -6,4 -11,11 -1,4zM736,464l-1-3 -3,3 -2-1 -2,3 0,5 -2,5 -2,3 2,7 5,2 3,2 2-6 0-10 1-7zM1816,492l2,5 0,4 3-1 3-3 3,0 -2-6 0-4 -5-3 -2,3 -4-1zM839,295l-3,0 -1,5 -3,6 1,3 3,4 9,5 6-2 10,6 3-2 -1-9 -3-3 -3,4 -7-2 -5,2 -8-7 0-7zM1036,422l-4,0 -5,3 -2,5 0,4 -2,4 3,1 7,0 9-8 3-5 0-4 -4-2zM1908,481l0-6 -7-4 -6,2 -6-1 1,5 7,6 4,4 7,2 5-2zM1865,577l-5,3 -2,4 13-8 -1-1zM1624,784l3,7 3,4 8-5 4,0 0-1 -1-5 -3-2 -1-4 -3,0 -7,3zM1585,679l6-1 3-2 -1-3 0-2 -5-3 -2-4 -6-3 -5,2 -3,2 4,4 0,4 2,4 2,1zM1788,628l1,6 3,4 3-1 5-8 -1-4 -9-1zM1486,725l4-3 4-5 1-4 3-4 -5-1 -4-3 -6,4 -5,0 -7,3 7,3 0,6 5,4zM915,530l5-2 4,3 2-2 4-3 -1-4 -3-4 -5-1 -2,2 -6-1 -1,3 -1,4 -3,1 1,2zM1447,692l-1,5 3,0 3,5 6-3 9-8 -2-4 -5-4 -4,1 -5,0zM1683,807l-8-3 0,6 1,9 7-4 7-7 -2-3zM1603,781l-3-2 -4,1 -3-1 -2,2 1,4 5,9 3,2 4-2 1-3 1-4zM1502,455l2,2 10-11 0-2 -4,1 -6,0 -3,3 -2,2 0,3zM1785,604l-1-6 0-4 -5-2 -8,1 3,10 -2,6 1,1 4,2 7,0 4-3zM1496,489l-2-6 -2,2 -9,2 1,8 11,4 1-9zM1027,563l9-5 4-4 2-3 0-4 -9-6 -5,0 -5,1 6,6 -1,8 -5,6zM1379,798l3-6 -1-5 -12,2 -4-2 -4,4 -1,3 1,5 14,1 6,3zM1609,791l4,2 3,4 0-4 4-2 1-5 -8-7 -3,3 -1,4 -2,2zM872,483l-8,3 -3-2 -1,3 -1,5 3,4 1,6 4,4 3-1 -1-6 7-2 1-3 0-5 -2-4zM1846,488l2-2 3,2 -1-5 -6-9 -1,1 -2-1 0,3 -2,3 2,4 1,3zM836,515l-2,3 -1,15 4,1 3-2 3,2 -1-5 2-5 0-6 -2-1 -2-2 -1-3zM1597,529l-2-15 -1,0 -3,2 -3,3 0,5 -3,5 2,3 3,1 2-3zM1842,462l-7-2 -3,1 1,2 3,3 1,4 4,4 2,1 1-1 0-4 1-2zM1459,758l12-4 0-3 4-4 1-3 -5,0 -11,4 -2,3 1,3 -3,3zM1106,369l0,6 4,1 5-1 1-5 0-3 2-5 -5-6 -3,5 -4,0 -3,4zM1661,598l-4,2 -2,6 4,3 -1,5 5-2 8-5 -1-4 -4-3 -1-2zM922,667l4,0 0-3 -1-4 -7-3 -2-4 -5,0 -5,3 -1,3 2,4 7,3 2,3z"/>
<path fill="#e8e4d9" d="M761,339l-1,9 1,4 3,3 3,4 2,4 4,0 6-1 1-1 -3-5 3-7 -3-6 -4-2 -4-4 -6-1 0,2zM949,541l12-4 5-3 -1-5 -4-3 -1-6 -5,1 -6,3 -3,4 0,5 3,2 0,5zM862,367l-5-2 -11-6 -5,2 4,7 6,15 12,1 7-4 2-2 -1-4 -3-8zM1296,716l-2,4 1,2 2,2 4-1 4,1 3-4 2-4 -1-4 -3-1 -4-8 -1,1 -2,1 -4,7zM727,462l-3-1 -2-3 -2,2 -4,1 -2,2 1,6 -1,5 0,1 3,3 7,1 2-3 2-5 0-5zM1045,416l-4,4 4,2 0,4 4-3 5-1 7-9 2-4 -2-2 -5,0 -5,4 -4,0zM1757,544l-10,5 -3,5 -1,3 4,2 4,3 6,0 4-2 2-5 -4-2 2-5zM910,444l2-1 5-3 9-9 5-4 2-3 0-2 -7,5 -8,5 -4,1 -5,7 0,2zM1274,638l7,5 6-2 0-6 -1-9 2-6 -4,3 -5-4 -4,2 -4,6 3,5zM1393,854l3-3 -3-4 -5-4 -2-4 -6-1 -9-2 0,2 -6,1 2,3 7,4 6,2 4,3 5,3zM1429,611l8-9 -4,0 1-2 -7,4 -4,3 -8,8 -2,3 3,0 6-1zM994,453l2-5 2-6 -3-3 -4-3 -3,3 -6-1 -4,3 1,3 -1,4 0,3 3,4 3,1 7,1 5,0zM1276,311l-1,4 -6,2 0,1 7,4 3,1 2,0 1-2 -2-3 -1,0 1-5zM1122,468l8,0 5,2 -4-11 -4-3 -7,1 -6-2 -1,0 0,5 2,4 2,5zM984,486l3-1 1-7 -1-3 -5-3 -2-3 -1,0 -4,4 2,7 -2,4 1,3 3,1 3,4 3,1 1-1zM699,504l0,2 3-2 6,3 7-6 -3-5 1-5 -1-5 -3-2 -2,1 -3,0 -6,8 -1,5 -1,5zM1617,701l-4,10 2,4 7,3 7-4 10,1 -3-3 0-6 -6-2 -5-4 -5-2zM668,384l-4,2 2,8 7,0 1,2 3-1 6-8 1-5 -3-1 -7,1 -5-4 -2,1zM1549,425l-5,3 16,1 2-3 -6,0 -1-4zM1514,446l3-4 13-6 0-2 -2-2 0-4 -5,2 -3,5 -4,1 -2,8zM1062,456l-5,6 6,6 2,6 12,4 5,0 1-2 3-1 -2-4 5-4 -1-4 -5-5 -9-3 -7,0zM1131,392l7-8 7-12 -3,0 -11,5 -3,8 -2,4 2,1 0,3zM829,502l-2,8 0,2 3,6 4,0 2-3 3-3 3-14 -1-2 -4-1 -4,5 -4-3zM992,423l1,5 -2,8 4,3 4-2 3,0 3-5 5-4 6-3 -6-3 0-4 -3-1 -11,3zM986,492l11,3 2-1 0-2 3-1 -1-3 -9-8 -4-2 -1,7 -3,1zM941,381l-4,6 -2,6 0,7 4,1 7-6 5-7 6-3 -2-4 1-3 -4-3 -10,2zM965,666l-6-2 -4,2 -6-1 -4,1 2,3 -1,3 0,2 12,4 4,3 1-5 0-4 5-3zM1123,419l8-5 -2-5 2-4 -4,1 -6,4 -2,0 -5,5 -7,5 6-2 2,4 5,1zM1090,368l0,2 3,3 2,5 4,2 7-5 0-6 -3-4 -2,0 -2-2 -6,3zM1156,923l-4,0 -1,1 10,0 1-1 -3-2 0-1zM1114,602l3,0 3-2 2-6 -1-3 -6-3 -3-2 -7-1 -1,5 0,6 -3,5 6,2 5,1zM1890,506l-8-3 -6-3 -3,1 2,4 -2,2 3,2 10,7 1-2 6-6zM1168,901l0-10 -7-3 -5,0 -3,4 -4,7 4,7 6-1 5,2zM1487,440l3-2 1-3 -2-5 -4-4 -6-1 -2,4 -9,4 2,5 4,2 2,5 8-1zM1211,327l5,0 2-3 2,0 2-6 0-5 -2,2 -6,2 -1,7 -2,0zM1285,449l4,1 2-3 1-13 -3-7 -3-2 -2-4 -3,0 -4-1 -2,7 -13-2 -1,5 0,2 7,3 6,7 5,4zM914,666l-7-3 -10,0 -4,3 0,4 1,5 5,5 5,0 3,3 3-1 3-1 2-4 1-8zM919,297l2,4 6,3 0-1 5-6 -10-3zM1483,487l9-2 2-2 1-2 -4-7 -6-4 -3-5 -2,0 -2,1 -1,2 1,5 -2,6 4,5zM1131,489l-2,3 3,3 5,4 4,8 5,2 10-6 2-2 -2-4 -7-6 -3-3 -7-3 -5,0zM715,501l-7,6 -6-3 -3,2 -1,6 1,5 3,6 4,2 4-3 6-1 6,3 0-3 2-3 -3-5 1-3 -2-5zM1487,382l-2-2 -7,6 -4,3 0,6 9,1 2-5 3-3zM1758,700l10,0 2-3 2-6 -4-5 -1-5 -9,4 -2,4 -1,6zM1233,636l2,4 3,2 4,1 3,3 -1-6 1-11 -4,3 -4-3 -3,1 -1,2zM1200,408l9,4 4-2 4-1 0-6 -1-3 1-4 -3-3 -7,1 -4,4 -4,1 -2,5zM1327,845l-7-6 2-5 -8-3 -5,1 -6-3 -4,0 -3,2 5,4 2,5 4,4 19,6zM1526,554l-2,4 -8,5 -3,4 0,1 3,1 6,0 9-6 4-2 0-4 1-3 -6,0 0-2zM994,766l-4,0 -3,3 -1,2 0,5 5,7 3,1 2-7 6-3 3-7 0-3 -4,0 -3-1zM1809,574l-3-4 -1-6 -5,0 -6-4 -4,1 -2,1 4,5 4,6 6,5 7,2 6-1zM1556,516l-1,2 -1,3 6,3 3,0 3-6 -1-4 -4-4 -6,1zM1721,561l3,0 2,0 4-3 3-2 2-4 3-6 -4,1 -3-1 -10,13zM1638,523l-7,11 -4,2 0,1 4-3zM1107,338l-2-2 -3-1 -6,5 0,4 3,5 1,3 4-4 3-1 3-11zM1450,891l-1,3 2,1 4-6 6,0 5-3 2-3 -2-1 -4,0 -6,2 -5,1 -2,2 -3,3zM1351,537l-3,2 1,3 5,4 3,7 7,1 3-7 -7-5 -4-4zM1019,705l3,3 1,3 6,0 10-7 3-3 1-2 -3-3 1-5 -3-1 -4,1 -5,5 -4,2 -3,4zM982,519l-6-4 0-5 -4-1 -3-2 -5,9 -4,2 0,2 1,6 4,3 1,5 8,3 2-5 4-3 4-6zM1088,737l3-5 0-3 -8-2 -5,4 -7,4 -5,10 5-1 7-3 5,0zM1670,671l6-3 10,1 0-4 -6-4 -14-7 -4,4 -6,1 -1,3 4,6zM1315,617l-3-6 -1-4 -13,4 -6,7 1,5 5,1 4,5 3-3 7-3zM795,426l-3,13 5-1 2,2 4-2 6-5 5-9 5-5 -4-1 -6,2 -4-3zM1542,472l-7,0 -5-4 -1,0 -2,4 -2,6 4,4 5,1 7,4 2,0 -1-4 0-4 1-4zM707,373l-6,8 4,1 -3,6 6,0 7-2 5-4 3-4 -2-3 4-5 -5,0 -6-3zM1218,884l-3-4 -4,0 0,5 -3,5 -2,5 2,2 3,1 5-4 8-3 -2-8zM1092,582l-3,4 -8,0 1,3 0,3 9,8 7,2 3-1 3-5 0-6 1-5 -2-3 -4-1zM763,403l7,4 4,7 5,2 3-3 3-6 7-1 1-7 -1-5 -4-4 -7-4 -8,2 -7-4 -1,5 -7,6zM1627,781l7-3 3,0 8-12 3-5 -4,1 -4-1 -5,6 -5,3 -3,4 1,3zM1890,477l-1-5 -2-4 -2-2 -4-1 -3-3 -6,4 -2,2 0,3 2,3 2,7 4,4 2,1 5-1 2-6zM1025,568l3,2 -2,6 5,2 5-1 1-1 0-4 7-6 0-4 -3-1 -1-2 -4-1 -9,5zM1475,887l2-3 -2-2 -1-2 -4,3 -2,0 -2,3 -5,3 10,0zM936,337l-4,3 -3,4 -2,6 -2,5 0,5 1,1 1,2 10-9 5-3 0-5 -2-5 1-5zM774,539l-4-5 -6-3 -1,9 -10,10 -1,7 5,0 5,1 7-5 2-4 5-5zM1856,461l-2,3 -1,6 1,5 4,7 3,1 2-3 1-6 3-2 -5-1 -5-10zM1102,438l-9,3 -3,4 10,6 3,3 5,1 5,0 1,0 0-5 3-3 -4-3 -2-3 -1-3zM1260,848l-13-6 1,4 -2,1 2,4 4,5 5,2 4,0 5,3 0-2 3-1 -5-6zM834,669l8,11 11,6 19,3 -2-7 0-8 -3-7 -9,1 -11-3 -10,0 -1,2zM1037,405l3-1 7-7 2-3 -5-1 1-4 -1-3 -2,1 -6,5 -5,6 -5,4 -1,3 4,0 4,0 1,2zM1745,685l2-4 4-3 -1-3 -4-4 -13,0 -4,3 0,5 5,7 5,1 4,3zM1269,554l0-7 -4-3 -3-3 -1-4 -11,3 -3,5 -6,5 0,4 0,2 2,2 7,3 7-4 8,1 2-1zM1278,921l5-6 -1-1 -8,1 -7,7 -8,2 20,0zM1335,889l12-1 -5-4 -4-4 -1-4 -13-2 -6-1 -2,1 4,5 11,7zM1799,617l1,4 -1,4 1,4 5-10 -3-2zM1231,919l-5-2 -4-2 -1-3 -3-1 -10,3 -2,5 -3,3 6,2 23,0zM1694,570l-2,4 -9,9 2,3 5,1 2-1 4-3 1-5 5-3 0-3 -3-1 -1-3zM1844,450l5,6 7,5 1,0 2-3 1-6 -2-5 4-7 -1,0 -4,6 -12,3zM1440,839l5,0 4-2 1-4 -1-5 -3-2 -2-3 -6-1 -5-2 -1,3 -2,1 0,5 -1,3 4,3 3,7zM1732,541l5-7 -7-1 -4,1 -4,4 -3,2 -1,4 -3,5 -2,4 1,1 4-1 5-3 4-6zM974,323l11,5 5-1 0-8 -2-5 -2-4 -4-2 -1-2 -3,4 -3,12 -2,0zM1418,862l0,9 3,1 2,3 5,1 5-3 5-1 -3-4 1-4 -7-2zM1765,628l-7-1 -3,2 5,5 0,4 13,6 3-2 -1-4 -4-6zM739,409l-7-6 -6-3 -4,2 -1,6 -4,3 0,2 5,5 8-1 2,5 5,5 4-1 2-3 2-5 3-3 -1-3 -1-2zM1331,626l0-5 -3-3 -5-2 -3,1 -5,0 -1,2 -1,8 5,6 3,6 5,0 2-5 5-2 1-3zM815,749l-4-2 -5,2 -2,3 -6,4 -3,3 0,2 -1,3 2,4 0,3 5,0 4-1 5-7 7-5 4-7 -1-1 -1-2zM1582,683l-2,5 3,5 3,3 5,0 3-4 4,0 2-4 0-4 -2-2 -4-6 -3,2 -6,1 -5-1zM1470,865l9,2 7-4 2-4 -4-9 -7-2 -6-1 -3,1 -1,7 2,6 -5,5 1,1zM1343,797l2-5 5-4 1-5 -4,1 -2-2 -2,0 -11,8 2,2 5,8zM1612,776l1,3 8,7 3-2 4-7 -1-3 -3-1 -2-5 -6,1 -1,3 -3,2zM886,527l7,0 2-4 -8-8 -1-4 -6-2 -4-3 -6-1 -3,1 -5,9 6,6 1,5 8,5 4,0 3,0zM736,332l-8-7 -12-3 -4,1 -7-1 -2,2 3,8 5,3 7,1 5,3 4-2 6-1zM914,824l5,5 2,2 8-1 2-5 -3-4 1-5 -1-1 -5,2 -6-2 -6,1 -1,2 3,3zM954,489l0,5 -3,5 -2,4 2,3 1,4 6,5 2,3 4-2 5-9 0-3 -3-9 -5-3 -6-5zM1776,469l12,7 3-1 -1-6 3-1 -4-5 -2-5 -4,0 -4,5 -4,2zM1004,516l13,8 5,1 7,1 3-3 0-2 2-2 -18-9 -6-1 -2,3 -6,0 0,2zM965,431l5-5 -1-3 3-4 0-3 -4,1 -8,3 -11,9 4,2 5,6 3-1 2-1zM1269,318l0-1 -11,3 1,2 4,2 6,0 3-3 4,1zM1281,309l0-1 1-6 -3,5zM1044,404l2,3 1,4 4,0 5-4 5,0 4-7 -1-4 -2,0 -1-4 -3-2 -3,1 -6,3 -2,3 -7,7zM1340,460l1-4 -2-6 -4-3 -2-3 -5-1 -3,3 2,6 2,6 3,7 7,0 6,2zM1553,715l3-1 1-3 4-4 1-4 -1-1 -8-1 -5,3 -5,1 -3,6 0,1 4,1 3,3zM1605,791l-1,3 -2,1 7,7 3,5 4,1 -2-4 2-3 1-3 -4-5 -4-2 -2-3 -1-1zM1532,424l4-5 4-7 -4-2 -2-5 -6,2 -9,6 -1,4 6,3 0,6 3,2 1,0zM832,306l3-6 1-5 -4-9 -7,4 0,10 -1,1zM810,288l2,6 3-3zM1031,458l3,1 4-1 7-9 2-4 6-8 -1-2 -2,0 -3,3 -13,11 -3,6zM1543,613l-1-4 3-3 0-2 -1-1 -6,1 -4,0 -2-1 -3,3 -4,4 0,1 5,3 4,1 7,1zM1390,563l2-2 -4-7 -5,2 -4-1 -2,4 -3,5 -4,2 1,5 6,1 2,1 4-1 5-5zM1847,519l4-5 -1-5 -5-3 -4-6 -4-2 -4,0 -3,2 0,6 1,4 5,3 5,5zM1401,615l-12,11 0,3 -2,2 1,2 2,0 -1,1 8-7 6-7 0-1 5-7 -4,3zM1171,908l12-2 -1-10 1-4 -6-4 -4,0 -5,3 0,10 -4,6 0,1zM1687,647l-3,0 -1,4 7,8 -2,4 7-2 8,0 7,2 -1-7 -8-3 -6-3 -5-5zM899,452l10-10 0-2 5-7 -1-1 -5,4 -4-1 -6,7 -5,3 -4,6 -4,4 5-1 1,3 3,0 2-1zM806,675l-9-3 -4-8 -9,2 3,5 -1,3 1,4 5,4 6,2 6,2 8-4zM1553,660l6,0 13,5 3-2 5-2 -1-4 -2-3 -5-2 -4-3 -11,2 -6-1 1,5 -1,3zM1021,422l-11,6 -5,4 -3,5 4,2 3,4 6,0 4-4 4-1 2-4 0-4 2-5 -3-2zM722,453l-2-6 0-5 -2-2 -9,1 -3,3 1,5 -4,2 4,5 4,4 3,3 2-2 4-1 2-2zM907,601l-6,5 2,12 -1,5 3,3 4,0 6-2 3-7 7-5 3-7 -11-3 -3-3zM1317,326l3-3 4-3 -3-5 -1,3 -16,0 2,3 2,4 6,5zM1690,808l7-9 5-2 -3-2 1-7 -5,2 -3-2 -4,4 1,8 -1,5zM1600,775l1-5 -6-5 -2-3 -3-1 -3,1 -2,6 2,4 4,2 2,5 3,1 4-1zM1445,510l2-3 3-1 2-3 -3-3 -1-5 -2-5 -4,0 -6-2 -1,3 0,5 3,6 4,6zM1503,587l18-6 -2-4 4-5 -1-3 -6,0 -3-1 -2,5 -7,7 -3,6zM1345,311l0,4 4,6 3,1 2-2 2,1 2-8 -2-4 -2-3 -2,0 -3-1 -3,1zM958,411l-3,6 3,1 2,2 8-3 4-1 5-2 6-5 3-8 -1-2 -4-1 -5,1 -5,3 -9,5zM1400,862l3,3 4-3 9-2 -4-6 -4-2 -7,0 -5-1 -3,3 3,8zM1033,405l-4,0 -4,0 -15,13 0,4 6,3 5-3 3,1 8-11 2-5zM920,753l12-12 20-17 -2,1 -5,3 -21,19zM1624,661l2-2 -2-4 -4-2 -4-4 -4-2 -4,0 -3,1 6,5 5,6 5,5 3,0zM1397,719l-5,2 -3,2 -5,8 4,0 1,5 4-2 4-2 4-4 -1-8zM1430,850l4,0 2-3 0-5 -3-7 -4-3 -9,3 -4,2 0,3 2,4 6,3 3,2zM1858,549l1,5 -5,4 1,5 9,9 6,1 4-5 2-6 1-5 -5-3 -6-5 -7-2zM1558,366l-1,8 1,2 -1-2 2-8zM850,504l3-13 -1,0 -4,0 -3,6 -3,1 -3,14 1,3 2,2 2,1 7-8zM1581,609l0-4 -5,0 -3-2 -6,4 -3,1 -6,0 -1,3 2,4 4,3 7,2 3-1 2-4 6-2zM1772,609l-6-2 -6-4 -7-1 -6,3 0,2 1,3 8,5 6,3 5,5 3,0 4,0 2-3 -2-5 -1-5zM1719,722l8-4 1-5 3-5 -1-2 -4,2 -4,1 -5-1 0,4 -5,6 4,0 2,2zM1702,533l3,3 5-3 3-6 6-4 -1-5 -4-1 -7,0 -4,3 -6,7 0,4zM1080,502l8,3 7-1 4-3 7-2 0-1 -9-4 -1-8 -5-4 -9-4 -5,0 -1,2 -3,1 -1,8zM1691,672l-5-3 -10-1 -6,3 -10-3 2,5 6,3 4,5 11,3 6,0 2-4 4-2zM1182,656l-7,3 -1,4 1,8 5,1 1,5 4,1 3-7 2-3 -1-5 -2-3zM1715,560l3-7 -4,1 -1-1 -5,3 -4,5 -1,3 -5,4 1,3 3,1 5-4 3-5zM930,686l3-4 -1-3 2-3 -5-7 -3-2 -4,0 -6,2 -1,8 -2,4 10,2 4,4zM1010,690l7-4 1-6 -4-3 -6-2 -7-4 -4,1 -6,0 2,4 0,1 5,3 1,6 4,3zM1326,768l2-4 0-4 -3-2 -6-2 -8,0 -5-3 -6,2 -2,1 5,8 4,3 6-1 7,2zM804,441l-1-3 -4,2 -2-2 -5,1 -3,3 -2,2 -1,5 -3,5 -1,5 1,3 5,3 2-1 3-7 10-12zM1041,631l2-1 -11-5 -3-4 -10-5 -10-2 -4,0 2,5 9,5 2,2 18,5zM1239,401l-5-1 -4,3 0,5 -3,2 7,5 6,0 7,3 4-4 1-6 -4-7 -4-2zM1555,460l1,7 5,6 6,3 10,0 0-1 0-7 -5-8 -6-6 -3,2 -6,0zM1297,846l8,1 2-3 -4-4 -2-5 -5-4 -9-4 -2,1 -4,1 1,5 -2,2 1,3 5,5 9,4zM693,618l4,5 5,1 7,5 4,1 -2-5 2-2 -7-16 -2-4 -5-2 -5,0 -1,5 -3,4 -1,5zM1526,485l3-3 -4-4 -1,7zM1258,833l-7-4 -3-4 -4-1 0,3 -3-1 1,3 6,4 5,6 8,5 1-4 0-3zM960,394l-1,4 -6,5 0,3 -2,4 1,1 10-4 9-5 2-5 0-9 -5,0 -3,0zM1298,884l-1-3 -6-4 -11-2 -6-3 -5,1 -1,4 1,4 2,2 9,4 6,2 9,2 4-1 2-2zM1111,402l3-5 5-4 -2-3 -3-3 -6,2 -5,1 -2,3 1,6 2,3 5,0zM1790,483l-3,3 0,4 0,2 3,5 2,3 7-2 4,3 -2-8 -4-5zM1204,671l-1-2 -3,0 -3,5 0,5 -3,4 3,0 4,5 4-2 0-5 3-6 -1-5zM1676,571l-2-2 -13,7 -2,4 0,3 4,2 2,0 5-3 5-2 5-9zM1237,834l-4,3 -1,4 4,6 5,3 3,1 4,0 -2-4 2-1 -1-4zM1579,556l-4-3 -2-7 -7,0 -4,2 -4,6 3,3 5,3 10-1zM1825,446l3,2 -1-5 1-6 -3-3 -2,1 -1,8 -2,1zM959,584l8-4 5-2 -5-3 -2-4 -5-2 -10,0 -3,6 2,5 6,3zM1618,641l5,0 3,2 4-3 -1-5 0-6 -3-3 -6,0 -4-2 -4,5 3,6 -1,4zM1557,651l11-2 -2-3 -5-4 -2-3 -9-5 -5-2 0,4 -7,1 -1,3 10,8 4,2zM1809,468l-5-7 -6-5 -6-4 -4,2 -1,4 2,5 4,5 8,2 5,4 1-4zM1853,491l5,4 2-2 1-4 2-1 -2-3 0-2 -3-1 -3-5 -1,4 -3,0 -1,2 1,5zM1222,313l0,5 -2,6 5,1 3,3 6-1 5-3 0-5 -2-4 -4,2 -5-1 -4-4zM1114,841l6,2 1-3 5,0 2-2 0-2 -2-5 -4-4 -3-6 -3,0 -5,1 -3-2 -1,4 1,5 0,4 3,3zM1862,498l6,6 5,3 2-2 -2-4 3-1 -4-4 -1-3 -5-4 -3-1 -2,1 -1,4 -2,2 0,1zM1082,367l3,4 5-1 0-2 3-2 -2-8 -1-5 -5-1 -2-1 -1,6 1,5zM1365,444l0-7 -2-7 -7-4 -5,2 -6,4 4,5 3,5 0,4 4,1 4,1 4-2zM1216,841l3-6 -3-6 -4-4 -4,1 -9-3 -6-1 1,5 -2,3 2,6 4,3 5-2 6,1zM1439,798l-3,6 -4,4 -1,6 2,6 5,2 6,1 3-7 7-3 1-6 -3-7 -4-3 -4-1zM1201,654l-3,10 2,3 0,2 3,0 1,2 3-1 3-4 -1-5 2-6 0-6 -3-1 -2,2 -2,3zM1577,531l-4-2 -2,1 -5,5 -3,1 1,3 2,7 7,0 1-2 3-2zM673,625l1-6 0-11 -4-4 2-6 -8,3 -2,3 3,14 3,6zM1460,805l9,2 7-2 2-2 1-2 -2-2 -5-4 -8-2 -4-4 -3,0 -3,1 -5,3 -1,4 4,3 3,7zM1598,682l2,2 4-1 6,0 4-2 -1-5 -3-3 -2-5 -7-3 -3,2 -1,3 -4,1 0,2zM1646,846l-5-8 -3-6 -4-3 -1,1 -4-1 -4,1 0,4 4,6 5,6 10,5zM1025,863l2-7 -9-7 -5-5 -3-1 -4,3 2,6 -1,5 5,4 4,0 5,3zM1502,471l5-12 -1-1 -7,9 1,2zM1502,455l-3-2 -2,3 -3,2 2,4 2,3 6-8zM1671,607l-13,7 -1,3 2,4 4,5 5-1 10,2 0-6 4-2 -4-4 -2-5zM1527,532l-2,12 1-1 2-4 4-5 -1-5zM1037,335l4,2 5,1 3-1 4,2 0-4 -4-4 -3-3 -2-2 -7-3 -7-1 -6-2 3,4 5,7zM718,336l-7-1 -5-3 -4,1 -5,0 -2,5 4,5 -1,4 5,1 4,5 4-2 7-1 5-3 1-4 -1-4zM974,875l-7-5 -8,0 -2,4 -3,3 -5,1 2,4 5,4 0,5 6-1 12-14zM960,698l-4,5 0,3 -2,6 6-3 2,2 3,0 12-8 -1-2 1-2 -7-3 -6,1zM952,355l-4-1 -3,3 -2,5 -1,5 -2,4 2,3 0,3 10-2 4,3 4-5 2-5 0-4 -4-4 0-5 -3-2zM1440,669l-3,9 1,5 5,0 3,5 4-2 1-2 2-9 1-4 -3-1 -6-2zM896,459l5-3 0,3 10-11 6-8 -5,3 -2,1 -1-2 -10,10 -3,4zM1714,689l-1,5 6-1 11,0 3-3 1-4 -5-7 0-5 -5-1 -3,6 -10-2 -4,5zM850,828l3-9 -2-4 -3,3 -3-1 -2,3 -2,2 -1,5 -3,6 8,2 5-4zM1005,361l4-1 5,2 0-4 2-4 -7-8 -13-1 -6-2 -2,1 0,1 4,5 4,4 3,6zM1562,485l3,6 6,5 5,1 3-2 2-5 0-5 -3-4 -1-5 -10,0 -2,2 -1,5zM1401,852l7,0 2-3 -1-2 -8-5 -4-3 -8-1 -3,1 2,4 5,4 3,4zM825,626l-2,4 -5,1 0,2 4,4 10,3 7,5 -2-5 0-4 3-3 -4-3 -5-2 -2-3zM1254,517l6,9 3,3 10-9 -2-9 1-4 -5,4 -5-3 -6,4zM1883,441l3-4 4-3 1-5 6-6 1-4 -3-1 -1-1 -5,4 -2,4 -5,5 0,3 1,3 -2,4zM807,689l-3-3 -12-4 -5-4 -2,1 -5-2 1,3 3,3 1,3 8,4 5,2 8,2 2-1zM1624,773l3,1 3-4 5-3 5-6 -1-3 -2-4 -4-3 -2,2 -8,10 -1,5zM1624,784l-3,2 -1,5 -4,2 0,4 1,1 3,1 5,3 4,2 -1-5 2-4 -3-4zM904,421l-4,11 4,1 0,2 4,1 5-4 3-5 9-12 -4-1 -4-5 -5,1 -5,2 -4,3zM1087,403l-2-1 -7,5 -6,2 4,3 -3,7 6-2 5-4 5-1 -1-3 1-6zM1389,535l5-1 -2-7 0-5 -11-6 -6-5 0,5 -2,3 -4,1 7,4 5,8 6,5zM1507,624l-4,2 -4-2 -3-2 -3,10 2,5 0,5 1,0 2,0 4-5 4-3 2-7zM1114,450l0,5 6,2 7-1 4,3 3-2 2-4 4-1 0-1 -3-2 -7-5 -6,2 -7,1zM1282,474l-7-3 -5,3 0,4 8,7 2,6 5,0 4,0 -1-4 2-2zM1015,784l-1,6 2,3 7,5 3-5 1-5 3-5 1-5 2-6 -1-1 -5,3 -4,0 -5,4zM1252,342l-9,0 -5,6 -1,3 1,3 3,0 2,3 5,0 6-3 4,0 6-8 0-4 -2-3 -6,0zM1793,543l-5-1 -2,1 -1,5 2,7 3,6 4-1 6,4 5,0 1-2 3-1 -5-8 -4-4zM895,849l0-5 -3-2 -6,4 -1,3 11,2zM783,360l5,1 5-1 3-3 0-6 -3-3 -3-6 -6-3 -7,4 3,6 -3,7 3,5zM1324,707l-3,4 1,4 -1,5 1,4 6,1 9-4 -1-5 2-11 -2-2 -7,0 -3-1zM1634,897l-6,4 -4,5 -1,3 -2,5 6-1 4,0 6-2 3-5 -3-12zM1772,578l9-5 -2-3 -8-2 -4-7 -6-1 -4,2 0,11 7,0zM1679,789l-9,0 -3,4 1,2 0,3 7,6 8,3 5-2 1-5 -1-8 4-4 -5-4 -3-1zM1522,498l7,1 0-3 4-1 -10-8 0,4zM1118,489l6,1 5,2 2-3 3-4 -6-5 -12-7 -5,2 -1,4 4,5 0,3zM842,329l-5-7 -2-5 -6-1 -3,1 -5-2 -1,2 2,4 5,5 6,4 13,7 3-1 1-2zM1416,591l-3,5 5-2 1,4 2,0 4-2 5-4 8-11 -8,1 -2-2 -7,4 -5,5zM748,483l-2,13 6,4 7,10 6,3 2-1 3-4 -3-7 2-4 -4-6 -9-8zM1437,895l9-5 3-3 2-2 -5-4 -1-3 -5,3 -6,2 -5,4 2,3 6,1zM1753,678l2,1 4-4 2-5 0-7 -2-4 -11,0 1,8 -3,4 4,4 1,3zM1867,472l-3,2 -1,6 -2,3 0,2 2,3 3,1 5,4 2-3 5,0 0-5 -4-4 -2-7 -2-3zM1354,862l-9-7 -16-3 2,4 1,4 -4,2 6,4 7,6 3,2 10-1 1-4 5-2 0-2zM1894,568l1,0 5-7 -10-3 -1,2 2,4 -1,4zM1623,518l-8,12 0-11 -3,0 -2,4 -1,6 2,5 1,1 2-3 15-7 0-1 -15,8 10-13zM1409,872l4,2 5-3 0-9 -2-2 -9,2 -4,3 1,7 1,3zM1352,664l4,0 4,1 4-2 1-4 2-3 -3,0 -2-2 -2-3 -2,0 -3,9zM1102,438l8,0 6-3 2-3 -1-4 3-5 -5-1 -2-4 -6,2 -3,5 1,7zM1430,531l-3-9 -2,0 -4-3 -4,0 -1,3 0,6 -2,4 3,3 2,4 3-3 4-1zM749,655l2-1 -4-5 -2-4 -1-2 -12-3 -3,1 -9-5 3,7 7,6 5,1 14,8zM1184,719l-2,6 2,4 9-2 4-8 6-1 0-5 -1-4 -4-2 -4,5 -7,0 -5,2zM790,616l-12,4 -5,5 1,6 4,13 3-1 3-7 5-5 6-3 0-5 -2-4zM914,447l-1,4 4-2 2-2 1-4 11-11 2-5 0-1 -7,5 -9,9 -6,8zM1413,574l-5,0 -5-6 -4,5 -4,3 -7,7 -1,3 1,4 2,2 4,1 3-2 5-5 7-3zM1505,738l-6,6 -4,2 2,2 -2,5 2,4 4-6 6-4 4-5 -3-3 1-3zM1373,340l0,5 5,4 8,3 15,0 2-3 -3-4 -9-5 -6-5 -9-5 -3,3 -5,0 0,3zM1753,759l-6-2 -6-1 -5,5 -1,4 2,6 3-2 14-7zM1261,844l-8-5 -5-6 -6-4 0,2 -3,0 -2,2 10,9 13,6 -1-3zM1406,829l-3-2 -6-1 -8,1 -7-1 5,4 -3,4 5,4 5,1 9,0 1-4 4-3zM1298,460l-6-5 -3-5 -4-1 -6-3 0,4 -8-1 2,5 8,5 16,14 -1-5 1-2 3-2zM747,412l1,3 5,1 3,4 5,2 4-1 3-7 6,0 -4-7 -7-4 -5-7 -7,9 -5,5zM970,847l4,3 4-4 7-2 7,2 -1-8 -3-5 -7-2 -5-5 -5,0 -3,4 0,8 -1,3zM670,406l3,1 5-1 9-6 4-5 2-5 5-6 -3-1 -10,7 -5,1 -8,8 -1,2zM1397,738l5,0 5-4 6-2 0-1 -1-5 -1-2 -6,2 -4,2 -4,4 -1,5zM1317,488l3,1 -5-8 -3-6 -2-5 -6-2 -4-4 -3,2 -1,2 1,5 6,6 5,5 7,7zM796,471l-4-3 -2-4 -2,1 -3-2 -2,5 1,4 -1,5 4,4 3,2 4,5 3-2 6,1 -2-4 -2-10zM1285,661l8,4 4,0 0-4 2-7 -4-5 -4-5 -4-3 -6,2 2,7 -2,4zM1828,437l1-3 -2-6 -3,4 1,2zM1260,533l3-4 -3-3 -6-9 -3,2 -3,4 0,5 -4,4 3,2 0,3 3,3 11-3zM1385,446l-1,4 1,4 7,1 8,4 7-1 -1-8 -1-4 -5-1 -4-6 -8,0 -2,3zM829,557l3-3 -3-4 1-7 -2-4 -3,0 -2-2 -3,6 -1,5 -3,4 -4,2 6,0 10,6zM1895,473l6-2 -1-5 2-5 -1-4 -9-5 -4,4 -1,5 -2,5 2,2 2,4zM1574,438l-3,5 -4,3 1,3 1,3 11,4 9,1 2-3 -1-4 1-1 -4-7 -4-1 -1-2 -6-2zM1627,537l-8,6 -5,7 5-7zM1613,554l4-1 13-11 -2,1 -11,10 -4,0zM1106,375l-7,5 0,4 -1,3 2,0 3,3 5-1 6-2 3-3 1-6 -3-3 -5,1zM849,533l4,0 2-6 4-5 1-7 -4-1 -3,0 -2-4 -7,8 0,6 -2,5 1,5 1,1zM1813,471l4,1 3-1 1-1 -2-4 0-2 -3-4 -4-2 -8,3 5,7zM1020,317l-4-8 -6-5 -1-1 -2-1 -11,2 0,4 12,11 3-2 3-2zM1563,456l6-4 -1-3 -1-3 -5-2 -3-6 -2,2 -4,6 -6,4 5,5zM1609,495l-2,4 3,2 4,5 -2-7zM1272,596l3,2 6-4 6-6 3-7 -1-5 -6-2 -4,3 -8,1 2,5zM1553,781l1,7 4,4 4,1 5-3 4,3 0-3 2-4 -3-3 -3-6 -3-2 -4,0 -5,1zM673,356l-9,0 -6,5 -1,0 5,17 5,1 2-1 9-10 3-6 -1-3 -1-2zM1689,763l-7-2 -1-5 -3,2 -2,1 -1,3 0,4 -3,5 3,3 6,2 4-4 4-2 4-4zM1088,463l7,2 8,1 6,2 7,2 1-1 -2-5 -2-4 0-5 -5,0 -5-1 -8,1 -6,2 -2,5zM1261,844l18,11 2-1 3,0 0-3 -5-4 -5-3 -6-2 -6-5 0,3zM1487,382l1,6 7-8 -7-1 -3,1zM1640,429l11,1 5,6 -5-6 -10-2zM955,487l6,5 5,3 2,6 4-4 2-6 2-4 -1-3 -3-4 -4,2 -4-3 -4,1 -2,3zM1193,822l-8-6 -5-1 -7-1 -4,8 6,5 7,4 7,5 5,0 -2-6 2-3zM1743,700l-9,7 -3,1 -3,5 -1,5 1,2 2,1 5-3 6-2 1-5 3-9zM1047,807l11,5 5,1 3-1 1-5 4-1 -6-4 -5-10 -4,2 -7-6 -4,2 1,5 -4,4 3,7zM771,441l-4,5 -1,6 2,6 4-2 5,5 5-2 1-5 3-5 1-5 -5,0 -5-4 -4-1zM1734,579l3-4 1-3 -1-1 -5,2 -6-2 -3,2 -1,3 -1,5 6,6 6,0 3-2zM737,502l1,5 7,11 4,4 4-1 8,3 0-5 4-2 0-4 -6-3 -7-10 -6-4 -4-2 -4,3zM1110,336l3-4 0-3 -1-5 2-4 -4,1 -3-3 -2,6 -3,11 3,1 2,2zM1755,515l5,0 3-12 -2-4 -4-1 -2,4 -2,0 -5,5 0,3 4,4zM740,348l-3,3 -3,1 -1,12 4,1 4-2 3,3 2-4 5-8 -3-5 -4-3zM1590,718l-2,4 5,1 6,2 6-1 5-2 3-3 1-3 -13-7 -8,2 -3,2zM917,721l-3-3 -3,4 -4,3 -5,2 -3,4 0,4 -1,5 6-3 5-3 5,0 1-4 5-7zM746,436l-3-3 -2-7 -4,1 -2,4 -4,3 -1,7 1,6 4,9 7-11 6-4zM671,401l1-2 2-3 -1-2 -7,0 2,9zM1252,460l-3,2 2,6 8,6 4,2 7,2 0-4 5-3 -8-5 -5-3 -8-6zM1092,411l-8,2 -5,4 -6,2 2,2 -3,3 3,1 4-1 14-9 0-1 1-2zM1013,699l6-3 4-6 -3-1 -3-3 -7,4 -1,5 -3,4 -5,4 6,2zM1115,663l5-3 6-2 -2-5 -9-5 -10,3 -1,3 3,6 -2,3 4,3 4,4zM738,310l8,1 14,6 7,0 -2-6 -6-4 -11-9 -4-1 -4,3zM985,797l5-7 5-1 -1-5 -3-1 -5-7 -4,2 -3,6 1,4 3,4zM1259,322l-4,1 -2,2 -5,2 2,5 4,2 2,5 6,0 2,3 3,0 2-3 2-4 -1-4 -5-3 -2-4zM1497,842l6,0 10-8 1-4 -4-2 -2-5 -4-3 -7-2 -10,3 -3,3 5,6 4,7zM1111,441l2,3 4,3 7-1 6-2 3-4 1-8 0-1 -5,0 -6,2 -5-1 -2,3 -6,3zM1797,484l5-3 7,3 -1-6 -2-4 -5-4 -8-2 -3,1 1,6 -3,1 1,3 1,2zM1757,719l-5-1 0-5 -5,0 -5,4 -2,5 -2,12 7-1 6-8 7-2zM846,554l6-1 3,4 4-2 6-1 -2-4 2-6 -4-5 -8-6 -4,0 -5,2 -2,6 1,4 -1,4zM971,357l-7-3 -6,1 0,5 4,4 0,4 6,3 5-1 6,0 3-4 0-3 -3-4 -3-5zM1595,477l-5-1 -1,4 3,5 3-5 1-4zM1899,439l4,0 4-5 4-4 2-4 -1-4 -2-1 -2,1 -4,5 -4,2 -3,5 0,5zM1014,584l-4-1 1-5 -2-2 -5,3 -3,3 -6,2 2,4 -3,4 2,4 5-1 6-5 5-2zM1434,511l1-4 -5-4 -3-3 -5,0 -4,0 3,3 0,4 6,4 2,4 5,1zM1611,906l-6,1 -5,5 6,6 2-2 -2-4zM1575,510l-4-3 -3,0 -4-3 -1,1 -3,0 1,5 4,4 1,4 2,0 1,1 2-4 3,0zM1005,830l-9-7 -5-2 0,3 -2,3 3,6 17,11 1-1 3,1 -3-5 3-1zM1870,468l2-2 -2-4 0-6 0-5 -4,2 -4,4 -3,1 -2,3 5,10 5,1 3-1zM1497,330l-12-2 -4,3 0,1 4-3 12,3zM1150,680l-4-6 3-5 -4-2 -6-1 -5,0 -1,6 0,6 -1,4 7-1 4,6 4-1zM1032,412l-8,11 3,2 5-3 4,0 5-2 4-4 2-5 -1-4 -2-3 -4,0 -3,1 -3,2zM1749,667l-1-8 -5-3 -5-2 -3,1 -4,2 -1,4 3,10 13,0zM1579,569l3,2 10-7 3-6 -4-1 -4-3 -5,2 -3,0 -3,3 2,7zM1288,863l19,7 6,0 -6-4 -3-4 -20-8 -3,0 -2,1 1,2 6,4zM1455,439l2-7 6,0 -4-4 -6-8 -7-1 -5,1 -6,8 4,5 7,4 3,4zM1540,688l4,4 6,4 3,3 8,3 1-5 -8-10 -12-2 0,2zM1248,401l4,7 3-2 6,1 1-4 3-5 -10-12 -4,4 -3,5 -4,4zM780,308l-12-1 -3,4 2,6 6,6 6,2 5,6 6-6 3,0 -3-7 -6-4zM943,432l6-3 11-9 -2-2 -3-1 1-3 -5,4 -8,6 -4,4 -1,3 1,2zM1382,542l-6-3 -4-1 1,5 -1,3 4,6 3,3 4,1 5-2 -1-6 2-4 -3-4zM1359,703l-5,4 0,5 5,6 12,1 3-2 2-3 0-2 -4-5 -8-1zM664,558l1-6 5-4 -3-1 -2-7 -7,4 4,16zM1430,338l0-5 -5-4 -5,3 -10,0 -10-2 22,12 3-1 5,0 4,0zM1719,559l2,0 10-13 1-5 -5,3 -4,6 -5,3 -3,7zM1485,758l0,3 5-2 6-1 1-1 -2-4 2-5 -2-2 -2-1 -3,0 -3,5 -4,4zM1031,351l-2,4 -4,1 5,5 2,5 0,5 4,0 5-5 2-9 -2-5 -4-2 -4-1z"/>
<path fill="#cdcbc5" d="M1008,852l-2-6 3-2 -17-11 -4,0 3,5 1,8 9,7 5,5zM1144,924l0-6 -11-2 -3,1 -1,2 9,5zM876,590l-4,1 -5,6 -5,7 0,4 1,0 5-2 7-1 6-2 2-1 0-1 -5-3 1-5 3-6zM1049,394l6-3 5-12 3-5 -2-2 -9,3 -8,11 1,3 -1,4zM870,622l-5-1 -5-2 -4,2 -5,2 1,8 6,3 8,1 8,1 3-1 1-3 0-4 4-3 -3-2zM1193,424l-10,1 -3,3 0,5 -2,4 9,9 6,0 6-1 0-5 0-5 4-3 -7-3zM801,602l4,3 4,0 4,2 4-3 6-2 6-3 2-3 -2-4 1-3 -7,0 -3-3 -7,4 -4,6 -7,3zM1312,890l6-1 1-3 -3-3 -5-4 -13-6 -4,0 0,3 -3,1 6,4 1,3 3,4 5,2zM832,616l1-3 -5-1 -5,1 -6,6 -5,1 2,4 0,6 4,1 5-1 2-4 4-1 1-4 4-4zM711,625l2,5 7,6 9,5 3-1 12,3 -5-6 -1-4 -4-4 -12-6 -9,0zM1557,739l3-2 -3-5 -6-1 -5-3 -3,1 -2,1 0,5 -2,3 1,5 2,2 6,1 4-2 7,1zM889,690l3-6 7-4 -5-5 -1-5 -7-2 -9-2 -9,0 -1,1 3,7 0,8 2,7 4,3 4,0zM1092,509l2,5 2,4 3,3 8,1 1-1 1-4 3-6 0-5 -6-7 -7,2 -4,3 -7,1zM1414,532l2-4 0-6 1-3 -2-6 -4-3 -3,2 -6-2 -4,1 2,4 0,5 9,8 4,4zM1172,549l4-12 -2-7 -4-3 -2,0 -5,6 -3,4 -9,4 1,5 4,4 2,4 6-2 4,0zM853,819l3-8 2-4 2-5 -2-5 -3,4 -5,1 -3,5 -2,5 0,5 3,1 3-3zM1588,571l3,1 5-1 5-4 -2,0 -1-9 -3,0 -3,6 -10,7 1,2zM907,537l0-6 2-3 -1-2 -6,1 -7-4 -2,4 -7,0 -2,4 1,8 4,5 0,6 10-1 5-6 3-1zM1251,859l-3,1 0,4 3,3 3,6 6,3 8,1 1-4 5-1 -5-4 -3-7 -5-3 -4,0 -5-2zM929,816l4-1 6,2 4-4 -1-5 -2-4 -1-4 -4-3 -5,3 -5-1 4,6 -1,10zM1233,526l1,4 -1,5 3,0 8-3 4-4 0-5 3-4 -3,0 -3-4 -9,1 -2,5 -3,0 0,2zM669,460l9-4 3-3 -3-5 -5-4 -1-4 -4-2 -1,20zM1434,901l0-3 -8,4zM993,693l-8-2 -4,2 -3,3 -2,5 2,4 2,1 2,0 4,0 2-2 9-12zM1534,604l4,0 6-1 3-3 3-4 5-3 -3-2 -6,0 -1-3 -4,0 -2,2 -5,5 -1,4 -1,4zM1599,824l-2-8 -4-4 -3,2 -5-1 0,3 -1,2 3,8 3,5 2,1 2,2 2-4 5,1 3-3zM1122,861l6,0 7-2 -15-16 -6-2 -6,4 -1,6 2,3 3,4zM1164,366l4-2 4-4 5-6 -5,1 -1-1 -12,13 -2,2 3-1 0,2zM1098,829l5,4 5,0 0-4 -1-5 1-3 -10-4 -6,3 0,6 1,3 1,2zM1158,756l-2-2 -3-1 -1-6 -2,1 -7,8 -1,6 -6,8 0,2 12-4 8-8zM1559,861l0-3 -2-5 -3-3 -5,0 -2-3 -1,3 -3,3 1,3 0,5 7,5 4,1 5,0zM851,571l4,2 1,4 5-4 7-1 8-4 1-4 0-2 -7-7 -5-1 -6,1 -4,2 -4,4 -2,3 -1,4zM1472,757l-1-3 -12,4 2,2 0,6 10-2 2-3 1-3zM1230,408l0-5 4-3 -3-4 1-4 3-4 -2-1 -4,0 -4,2 -5,5 -3,2 -1,4 1,3 0,6 6,2 4-1zM766,673l-10-7 -3,1 -1,2 4,9 5,5 9,4 5,3 3-1 -4-4 1-1zM1921,406l-7,3 -6,6 0,7 2-1 2,1 5-4 4-2zM1430,544l0-6 2-5 -2-2 -4,4 -4,1 -3,3 -3,5 0,6 3-1 2,3 2,1 4-2 3-2zM1508,620l3-5 4-4 -1-1 0-3 -5,4 -4,2 -4-1 -4,5 -1,5 7,4 4-2zM1036,727l7,2 6-5 4-9 1-6 -3-5 -4-3 -5,0 -3,3 -5,13 -2,7zM1145,724l-2,5 4-1 2,3 3,1 6-3 6-7 2-3 -1-6 -3-1 -3,0 -4,4 -4,3zM1176,598l5,1 4,2 5,0 2-8 8-1 3-8 0-4 -3-2 -5-1 -6,2 -3-1 -11,17zM1164,355l5-3 3-1 5-11 -1-1 -5,1 -6,4 -5,2 2,3 -3,6 1,2zM1055,540l-2,5 3,5 1,3 3-2 7-2 3-4 -2-3 1-4 -5,0 -4-3 -5,2zM865,452l10-5 4-5 2-4 -1-5 -3-2 -17,5 1,4 -3,4 -1,5 4,2zM836,569l-6-3 -7,2 -3,5 -7,4 5,4 2,5 3,3 7,0 4-2 3-2 1-6 0-5zM1113,332l7-1 0-6 4-5 -1-6 3-4 0-1 -1-2 -2,1 -4,4 -2,2 -3,6 -2,4 1,5zM1394,534l7,6 2,3 8-7 2-4 -4-4 -9-8 -4-1 -4,3 0,5zM1473,635l-2-5 -2,2 -5,0 1,3 -1,3 5,4 2,3 4-2 0-3 1-3zM871,297l6,2 6,4 -3-15 -2-7 -8,0 0,9 -3,4zM1026,402l-3-2 -2,0 -7,2 -7,7 -3,5 -8,6 11-3 3,1 15-13zM948,810l-5,3 0,5 -2,9 1,6 1,2 5-3 3-5 1-7 2-4 0-4 -2-2 -1-2zM1020,353l-4,1 -2,4 0,4 2,4 1,4 0,5 4-1 4,2 2,2 4-2 1-5 0-5 -2-5 -5-5zM891,648l-5-6 0-2 -4-2 -5-3 -3,1 -8-1 -2,5 2,8 -6,2 2,1 8,0 13,2 5-2zM1435,553l-1,10 6,1 3,2 6,0 1-3 5-5 -4-3 0-5 -5,3zM1100,736l10-7 2-2 -3-2 0-4 -6,0 -6,2 -6,6 0,3 -3,5 5-1 2,2zM1187,813l-1-6 -13-7 -5-4 -5,3 0,6 6,4 4,5 7,1 5,1zM1305,397l-3,4 5,5 -2,5 4,7 4,3 6-1 7,4 4-1 0-4 1-3 -4-4 -2-5 -5-5 -7-3zM1679,738l6-4 1-4 -1-1 0-3 -4,0 -4,2 -4,1 -2,4 -5,3 -3,5 3,2 4,0 2,3 5-4zM1522,874l-12,6 8,3 2-3zM1061,641l1,3 0,3 4,4 4,3 2,4 2-2 3,1 -1-4 2-3 -2-4 -10-8 -5,0 -4-2zM1476,770l-5-6 -10,2 -5,6 3,3 5-1 3,2 4-3 4,0 0-2zM858,792l1-4 -2-3 -2,0 -4,3 -4,0 -3,3 -1,4 -3,4 2,3 5,1 0,4 3-5 5-1 3-4 2-3zM1475,643l-4,2 -2,2 1,3 3,3 5,1 5,4 0-3 4-1 -3-3 -1-3 -2-3zM1626,654l5,1 0-4 -3-3 -2-5 -3-2 -5,0 -4-2 -2,1 -1,4 1,3 4,2 4,4 4,2zM1063,756l-4-2 -2-2 -5,4 -6,6 -4,6 1,5 5,0 6-4 5,0 1-4 5-4zM1122,302l2-3 3-4 3-2 -3-3 -9-3 -2,1 1,1 -2,3 8,7 -2,2zM1172,701l3-8 0-3 -2,0 -5,3 -9,10 -2,5 0,3 2,1 3,0 5-4zM1032,828l-4-3 -6-1 -1,2 1,5 1,3 4,3 11,7 5,5 6-3 -2-5 -6-5 -3-6zM1007,777l-3,4 -3,7 2,3 3,1 2,2 6-4 1-6 3-6 -1-2 3-5 -1-2 -6,3zM1642,918l4,3 -2-5zM1147,686l1,9 4-1 7-3 1-7 3-6 -2-7 -5-5 -4,1 -3,2 -3,5 4,6zM1000,811l0-3 -1-7 -5-5 2-6 -1-1 -5,1 -5,7 -1,3 2,4 3,4 9,5zM993,676l-2-4 -9-2 -5,1 -9-2 -5,3 0,4 -1,5 1,1 5,0 10,3 8-1 1-5 6-2zM1368,667l-1-2 -3-1 -3,8 -1,4 1,3 4,3 5,2 4-1 -3-6 0-5 0-5zM854,580l-3,3 4,6 0,4 7-4 2-5 8-4 4-6 1-4 -1-2 -8,4 -7,1 -5,4zM1513,730l6-3 2-4 -2-7 -3-3 -6,5 -3,5 -5,4 1,5 2,2 5,0zM1226,515l5,6 3,0 2-5 5-1 0-6 -4-3 -4-5 -7,0 -2,3 -2,4 -3,2 2,4zM1262,403l-1,4 6,4 2,5 12,5 3,0 1-2 -2-5 4-6 -7-11 -5-2 -5,0 -5,3zM1431,646l-5-2 -6,5 2,5 0,6 2,5 4,2 6,1 4-2 2-4 3-4 0-4 -3-4 -2-5zM1071,787l-9,2 -2,3 5,10 6,4 2,1 2-2 4-2 3,0 -2-4 0-4 1-4 -3-2zM1843,459l-1-5 2-3 0-1 -6,7 -5-2 1,1 1,4 7,2zM968,762l-14-3 -2,5 0,8 -4,4 5,5 7-2 3,4 1-3 1-5 3-2 -1-3zM1320,813l14,6 6,1 4-2 -1-4 1-3 -3-4 -6,2 -7-3 -7,0 -4,3zM1467,691l-9,8 -6,3 -2,6 0,4 5,2 9-5 5,2 -1-6 1-5 0-7zM1505,734l-2-2 -1-5 -3,6 -6,3 -3,5 1,1 -1,3 3,0 2,1 4-2 6-6 4-2 1-2zM1164,467l-5,3 -6-4 -1,4 -3,3 7,8 14,5 4-2 5-1 -7-8 0-4zM925,627l-4-4 -6,1 -6,2 -1,4 2,4 3,4 5,3 7,0 5,2 3-4 -1-3 -2-4 1-5zM1314,780l-6,0 -4-3 -3,2 -5,0 3,5 -1,6 2,3 3,1 3,0 6-2 3-3 0-3 3-3zM1070,532l2,4 4,1 7,4 4-2 3-7 -2-2 -9-3 -4,0 -2,1 -1,3zM1092,851l-1,5 2,7 3,7 6,5 2,0 3-6 5,1 4-3 -1-5 -3-4 -3-4 -7-2 -5-1zM1217,516l4-2 -2-4 -6-4 -8-3 -9-3 -6,0 -2,3 6,5 -4,3 4,2 13,2 5,2zM1236,612l4,0 3-4 3-4 0-5 -3-5 0-4 -2-2 -6,1 -4,3 3,7 0,7 0,5zM1578,836l4-2 4-4 4,1 -3-5 -3-8 -3-2 -4,2 -2,5 2,6 -1,4zM1378,495l14,1 4-1 -2-2 0-3 -8-5 -17-8 -3,2 2,6 -1,3zM1355,660l3-9 -2-1 -2-5 -3,0 -5,1 -2,3 2,10 5,5zM1022,764l-3,5 1,2 -3,5 1,2 5-4 4,0 5-3 10-15 1-5 -4,1 -8,7 -5,2zM761,524l-8-3 -4,1 -5,4 -1,4 0,4 1,6 5,2 0,5 4,3 10-10 1-9zM1123,820l1-4 4-3 0-6 -1-5 -3,1 -3-1 -1,8 -2,6 -2,5 3,0 1,2zM888,651l-5,2 6,2 5,4 3,4 10,0 -2-4 1-3 4-2 -7-1 -12-5zM1467,664l0,4 -1,4 1,2 2,1 6-2 5,1 -1-3 3-3 -1-3 -5-1 -4-1 -4-4 -1,1zM680,502l0,3 -5,7 -1,2 0,3 4,0 5-3 8-9 5-2 1-5 -4-1 -1-4 -2-3 -2,1 -3,1zM1307,858l14,1 7,3 4-2 -1-4 -2-4 -3-2 -19-6 -2,3 -8-1 -2,2zM1539,832l5-4 -1-3 -6-7 -3,0 -5,2 0,9 8,1zM1533,599l1-4 5-5 -7,3 -2-1 -6,2 -10,13 0,3 1,1 7-2 3,1 4-4 3-3zM992,629l2-4 -3-3 -7-7 -7-2 -7-1 -4-3 -1,2 -1,1 0,7 7,3 -1,4 8,5 6,1 4-1zM1642,689l22,6 1-2 5-1 -1-3 -6-5 -4-1 -6-3 -12-2 0,3 -4,1zM1634,741l-5-2 -2-4 -3,0 -5,1 -5,2 -6,1 -2,2 6,7 2,5 6,0 6-2 5,2 2-2 2-6zM1200,606l5,3 7,0 5-4 0-5 -2-8 -6-5 -6-3 -3,8 -8,1 -2,8 0,6 4,3zM730,649l-11-7 -4,5 -6-1 -12-4 7,9 8,6 12,7 7,3 4-1 -2-5 4,0 -4-5zM1070,709l-1,5 2,4 10-1 2-4 5-4 -7-9 -6,1 -6-2 -4,6zM1076,480l1-2 -12-4 -2-6 -6-6 -6,0 -6,2 2,4 -2,10 7,4 14-2 7,1zM1224,715l2-6 -3-4 -6,0 -3-3 -4,1 -3,4 -5,2 1,4 0,5 4,3 3,3 4-4 6,0zM1128,897l1,1 7-2 6,5 7-2 4-7 3-4 -3-3 -8-3 -3-4 -5,0 0,7 -11,2zM1515,849l3-5 -1-7 2-5 -2-2 -3,0 -1,4 -10,8 2,2 0,5 3,2 3-2 2,2zM1041,734l-10,11 -5,3 -1,6 0,3 1,4 5-2 8-7 4-1 5-6zM1230,707l4-5 -1-6 2-6 -4-3 -6,1 -4-5 -7,7 0,5 0,7 3,3 6,0 3,4zM1313,399l7,3 4-2 4-4 5-1 -9-8 -1-5 -5,0 -4,3 -5,2 0,4 -8-1 3,4 1,3zM918,368l3-6 -1-4 -5-1 -2-6 -3,4 -5,2 -4,3 2,4 1,5 2,2 4-1 4,1zM1621,664l-2,1 8,12 10,5 4-1 0-3 -3-4 -6-3 -3-4 -5-3zM1345,524l0-7 -2-3 -3-3 -6-2 -6-3 -6-5 5,7 0,3 1,3 4,4 4,1zM1209,369l-7,6 -1,5 2,3 5-1 4,2 4-2 5-2 3-3 1-4 -5-4 -5,1zM1094,400l8-1 -1-6 2-3 -3-3 -2,0 -8,3 -4-1 0,3 -4,3 2,2 1,5 2,1 2,0zM1224,891l-8,3 -5,4 2,5 3,3 -1,5 3,0 3,1 4-2 0-5 4-3 -2-3 -2-8zM1851,481l3,0 1-4 -2-7 -4,2 -4-4 -1,2 0,4 6,9zM862,608l-3-1 -5,2 -3,0 -9,8 1,2 3,3 5,1 5-2 4-2 2-4 1-7zM1580,585l-5,6 0,2 1,0 7-3 7-4 1-3 6-5 2-2 -7,2zM1050,644l9,8 1,3 4,1 4,3 4,0 0-1 -2-4 -4-3 -4-4 -5-3 -3,1 -4-2zM1197,335l0-3 -5,2 -2,2 -3,3 1,3 -2,4 -3,4 3-1 4-2 3-3 3-4 5-5zM668,490l-3-2 -1,0 -1,6 -2,2 -3,17 8-3 1-6 4-9zM1484,798l3-4 4-2 -5-4 -12-3 -4-1 -1,3 -7,0 -2,2 4,4 8,2 5,4zM988,833l4,0 -3-6 2-3 0-3 -5-1 -12-7 1,5 -1,3 2,5 5,5zM895,605l-5-4 -7,1 -2,1 -2,6 3,8 -3,6 3,2 7-2 13,0 1-5 -2-12zM1156,760l-8,8 -4,7 -1,5 3-2 3,1 7-7 1-2 2-2 -3-2 3-5zM846,586l-9-1 -3,2 -4,2 -1,3 2,4 6,0 5,1 3,2 5-1 2-1 3-4 0-4 -4-6zM769,668l11,9 5,2 2-1 -1-4 1-3 -3-5 -2-1 -3-3 -3,2 -4-2 -3,0 0,3 -1,1zM1330,769l4,3 5,0 6-3 3-4 0-5 -3-1 1-6 -13,7 -5,0 0,4 -2,4zM977,671l5-1 9,2 -8-5 -4-6 -4-5 1-5 -7,0 -8,2 -5,0 1,3 2,5 0,3 6,2 3,3zM1824,497l-3,3 -3,1 3,13 4,2 2,0 1-4 3-2 -1-4 0-6 -3-3zM1613,553l-1,0 2-3 -2,2 -5-4 0-1 -3,0 -2,6 3-4 7,4 1,1zM966,739l4-1 1-5 7-6 4-5 0-2 -2,0 -9,1 -4,4 -8,5 -4,3 3,1 0,3 3,2zM1110,612l3-4 -1-4 -5-1 -6-2 -3,1 0,3 -4,4 1,6 6,2 2,5 3,0 3-2 2-3zM834,617l8,0 9-8 5-10 -1-2 -3,0 -9,5 -3,6 -7,5 -1,3zM1434,898l0,3 11-2 6-4 -2-1 1-3 -4-1 -9,5zM1564,687l-3,1 -6-2 -1,1 8,10 -1,5 1,1 3,0 6-6 3-5 -5-4zM771,593l2-3 -1-3 -5-3 -2-3 -8,3 -1-5 -3,2 -2,6 -6,6 -1,6 6,4 5,0 8,4 2-3 5-4zM1530,524l1-5 -4-4 -3,0 3,17 4-3zM1251,760l-3-6 -3-3 -2-1 -5,0 -4,5 -2,6 4,5 1,5 4-2 6,1 7-3 2-3zM1260,599l-5,8 1,4 -1,3 4,1 3,3 4-4 5-7 4-7 0-2 -3-2 -4,0 -4,2zM1069,513l-9,0 4,7 8,4 3,3 4,0 9,3 1-3 -1-4 -7-3zM949,485l-7,3 -8-4 -5-1 -2,2 -2,2 7,10 5,4 8-2 4,4 2-4 3-5 0-5zM888,815l-2-5 -3-4 -4,0 -7,5 -1,4 -1,3 1,3 2,2 10,0 7,1 3-2 0-3zM1456,772l-3,4 0,4 4,9 3,0 2-2 7,0 1-3 -2-2 1-3 -2-3 -3-2 -5,1zM1853,530l8,5 6-3 1-6 5-1 -3-3 -7-4 -6-6 -7-3 1,5 -4,5 1,4zM1919,397l-4,4 -2,4 1,4 7-3 0-10zM1185,454l2-4 0-4 -9-9 -5-3 -5,1 -5-1 -4,4 -2,6 3,6 5,2 4,4 7,1zM850,720l-18-10 -3,0 -1,3 4,3 0,3 7,5 5,3 5,2 6-1 1-3 3-1zM894,575l-12,12 -3,6 -1,5 5,3 5-7 8-3 4-6 -4-2 4-11 -1-3zM1299,540l0-5 1-4 -2-4 -7-6 -6,0 -5,4 -2,5 2,5 -2,6 5,3 5-2 7,1zM850,763l8-3 6-7 0-3 -4,0 0-3 -3,2 -6,1 -5,4 -4,5 -2,4 3,2 3,1zM1438,581l-8,11 -5,4 0,3 2-1 7-4 4-2 9-7 -1-2 -3-2zM1008,319l-12-11 -4,0 -1,3 -3,3 2,5 0,3 6,4 4,6 6,2 5-2 0-4 -2-6zM1505,844l-2-2 -6,0 -3,4 -7,0 -3,4 4,9 6-1 3,3 2-4 5-4 1-4zM777,650l2,6 0,6 3,3 2,1 9-2 2-4 0-2 -2-4 -4-1 -3-9 -5-1 -3,1zM1166,380l7,0 1,3 4-1 2,0 2-2 4-2 -1-4 1-4 -2-5 -4,0 -12,7 -6,6zM803,745l-2-5 -4-6 -5-1 -3,1 -3,3 -3,1 -2,4 2,5 0,4 4,5 5-1 3,4 3-3 6-4 2-3zM1272,641l2-3 0-6 -3-5 3-5 -5,2 -4,0 -3-3 -2,12 3,4 4,3zM1226,411l5,7 1,6 5,5 5,3 3,0 6,1 3-2 7,1 0-2 -4-4 -8-4 -2-4 -7-3 -6,0 -7-5zM1153,707l4-3 2-1 9-10 5-3 0-3 -3,1 -1-3 -3,2 -3,3 -4,2 -1,4 -5,7 -2,4zM1445,597l5-2 6-6 5-4 -7,3 -3,1 -5,4 -12,7 -1,2 4,0zM1056,341l7,5 4,1 4,0 -2-5 -6-6 -3-5 -5-1 -5-3 -4,1 3,3 4,4 0,4zM1156,369l15-15 1-3 -3,1 -5,3 -4,2 -6,8 1,1 -2,4 2-1zM1433,623l-1,2 3,2 11,2 4,0 1-1 3-1 -1-3 2-4 -3-2 -4-1 -4-2 -6,5 -5,1zM1075,572l-5,5 1,3 5,2 5,4 8,0 3-4 7-1 -5-5 -4-5 -5-3 -6,0 -5,0zM1747,539l0,10 10-5 5-3 2-8 -3-2 -4,0 -7,3 -2,2zM1193,614l1-4 -4-3 0-6 -5,0 -4-2 -5-1 -3,6 0,6 -4,5 5,4 5,4 7,0 4-4 4,0zM681,559l-12,10 -3,6 0,3 -3,6 7-5 6-1 8-3 2-6 4-6 -5-3zM1443,325l6,0 7,2 7,4 1-1 -4-2 -1-5 -13-7 -5,5zM952,810l2,2 0,4 3-1 2,1 1-5 3-3 1-3 1-6 -2-5 0-5 -7,3 -3,6 -2,10zM1487,625l9-3 1-5 4-5 1-8 -3,0 -2-2 -6,4 -3,5 -4,5 -2,6 3,0zM810,730l4-1 8,2 2-5 -4-3 -3-6 -14-6 -7-1 -5,1 9,7 -1,5 4,6zM1540,576l-6-1 -5,2 -8,4 3,3 -3,5 -1,3 2,2 2,0 6-2 2,1 9-5 3-4 -1-2 0-3zM1178,750l-2-2 -3-1 -15,9 -2,4 3,1 -3,5 3,2 6-6 5-1 8-8zM1296,586l1,3 -5,8 4,3 9-7 6-11 4-5 -3-1 -5-1 -6,2 -2,1zM830,621l-1,4 2,3 5,2 4,3 12-2 -1-8 -5-1 -3-3 -1-2 -8,0zM861,451l-4-2 -3,3 -6,1 1,5 -4,11 5,2 2,1 5-5 5-1 4-3 -1-11zM978,685l-10-3 -5,0 0,3 -4,2 1,3 4,3 0,4 6-1 7,3 1-3 3-3 4-2 -1-4zM1484,563l-3,0 -4,2 -5,0 -4,2 -5,5 -1,2 -3,4 6-2 2,3 7-2 8-8 4-4zM1705,697l-12-5 -3,3 -1,3 -4,0 2,2 14,6 3-3 6,1 2-3 -1-2 1-2zM1133,391l6-5 10-10 4-6 2-4 -1-1 -3,2 -2,1 -4,4 -7,12zM1732,543l-1,3 3,1 8-4 8-9 0-2 1-2 -3-2 -10,5 -4,5zM1058,527l12,5 2-1 1-3 2-1 -3-3 -8-4 -4,1 -5-1 -5,0 -1,1 1,1zM1358,639l-5,0 -2,3 0,3 3,0 2,5 2,1 2,0 2-6 4-4 0-4 -5-2zM745,418l-2,5 -2,3 2,7 3,3 2,5 2,1 4-2 2-7 4-1 1-10 -5-2 -3-4 -5-1zM771,549l-2,4 -2,12 -5,7 6-2 5-7 6-2 6-10 1-5 -3-1 -2-3 -4,1 -1,1zM1767,649l-6-4 -5,1 -3,1 5,8 2,5 3-1 6,2 3,0 -2-5 2-2zM825,701l-8-5 -9-3 -2,1 -8-2 4,4 2,3 2,3 14,4 9,4 3,0 -2-2 4-2 -2-2zM1535,804l5,4 3,5 2,0 -1-3 1-2 2-2 -5-4 -4-3 -7-1 -4,0 1,3zM1499,780l-9,2 -5-1 1,4 0,3 5,3 5,2 10-1 -2-3 7,0 -1-3 -3-2zM1273,542l5-1 2-6 -2-5 2-5 -7-5 -10,9 -3,4 2,8 3,3 4,3zM1375,859l-4-4 -10-2 -6-6 -2,0 -8,4 0,4 9,7 6,3 6,0 9-4zM1398,695l3,4 6-2 11,1 1-4 -2-3 -5-1 -8-3 -10,0 -3,5zM1259,708l6-5 -2-7 0-5 -5-2 -4,1 -6-3 2,6 -1,6 2,6 3-2 3,4zM1716,734l2,2 5,0 4-5 -1-5 4-5 -2-1 -1-2 -8,4 -3,8 -4,3zM1470,563l-1-3 -3-4 -6,3 -5-1 -5,5 -1,3 0,3 8,3 6,0 5-5zM1332,785l-3,4 3,1 11-8 6-8 -3-1 -1-4 -6,3 -4,4 -2,3 -3,4zM1306,906l-3-2 -5,2 -8,8 5,2 1,2 -1,6 11-8 2-4 0-3 2-4zM817,758l-7,5 -5,7 1,1 0,2 4-1 5-5 5,0 2-3 3-2 -1-3 2-5 -1-3 -4,0zM1407,714l-3,4 -4,2 1,8 4-2 6-2 4-5 0-4 -3-2zM726,550l-11,5 -9,10 0,5 -3,4 1,2 5,0 4-1 4,2 6-4 5-7 3-6 -4-3zM1320,335l3,3 3,6 2-7 -1-6 3-7 -2-2 -3-2 -1,0 -4,3 -3,3 -3,4 1,3zM843,689l2-3 8,0 -11-6 -8-11 -12,0 -6,4 -2,3 1,6 8,2 5,3 9,4zM1109,564l-5-4 -3-6 -5-4 -4,1 -5-1 3,4 -7,8 4,5 8-2 7,2zM1050,859l-5-5 -5,4 4,5 -1,4 3,4 7-5zM961,327l-1,5 5,6 2,0 5-2 1-3 -2-5 0-5 0-1 -8-1 -1,1 -4,1zM1864,410l1,1 5-1 1,5 4-4 -4-6zM1604,571l-13,12 -1,3 2-2 2,0 12-10 4-4 -2,1 2-3 -1,0zM876,779l-2-1 -5,2 -7,2 -5,3 2,3 -1,4 2,2 3-1 6-4 7-8zM1161,849l1-2 -7-5 -16-9 -4,1 -7,2 0,2 17,10 7,7 5-1 6-1zM875,605l-7,1 -5,2 -1,7 -2,4 5,2 5,1 9,1 3-6 -3-8 2-6zM722,521l0,3 3,8 1,7 2,6 7,1 4-6 5,0 -1-6 0-4 -5-2 -6-7 -8-3zM1066,745l5-10 -7,0 -2-1 -8,5 -6,6 -5,6 13-3 1,4 5-5zM1251,414l-4,4 2,4 8,4 4,4 1-5 13,2 2-7 -8-4 -2-5 -6-4 -6-1 -3,2zM1434,594l-7,4 -5,5 -10,10 8-5 3-1 7-6 2-2 6-7zM1823,548l10,3 0-8 4-2 -3-5 -1-3 -5,0 -4-2 -5,1 -2,14zM810,519l-3,2 2,7 -2,4 1,2 5-1 5,1 3-3 1-5 -2-5 -6-3 -5-6 -3-1zM999,476l2,5 3,5 2-4 5-3 4-4 -1-4 -4,1 -1-4 -4,0 -4,2zM1469,553l-3-4 0-6 -4,3 -6-2 -3,2 -2,3 0,6 4,3 5,1 6-3zM1736,623l6-3 3,0 -4-5 -7-2 -8-3 -7-4 0,4 -3,2 3,4zM1484,665l1-1 -3-3 1-3 -5-4 -5-1 -3-3 0,3 -1,2 -1,4 4,4 4,1zM1270,787l1,3 5,1 3,2 4-1 3-4 1-5 2-4 -7-1 -4-1 -6,1 -1,5 -3,2zM1595,575l-3,3 7-2 10-8 -8-1 -5,4zM763,639l-8-7 -2-5 -10,6 -5,0 1,4 5,6 8,5 5,0 5,0 2-3zM1108,845l6-4 -3-5 -3-3 -5,0 -5-4 -4,2 5,5 8,12zM1268,818l3-1 3-2 0-4 2-3 -2-5 -5-2 -3,1 -6-2 -3,4 2,6 6,7zM769,671l0,2 -3,0 9,11 3-1 7,3 -1-3 -3-3 -1-3 -11-9zM1513,742l2,9 4,5 4,0 1-5 4-4 3-4 -4-1 -5-4 -4,0zM1348,901l-8,1 -4-2 -1,5 3-3zM1201,348l-3,4 3,1 1,3 3,2 5-2 4-3 2-7 -1-3 -4,0 -5,3 -4-1z"/>
<path fill="#ead9ce" d="M1495,481l-1,2 2,6 0,1 3-8zM874,347l2,5 -3,6 10,7 6,2 5,0 4-2 3-5 -5-4 -3-4 -5-5 -5,0 -4-2zM738,334l3,2 3-1 8,2 4-1 5,3 2-1 0-2 -9-9 -7-4 -9-1 -4,0 -7-3 -1,1 2,2 0,3zM971,323l0,5 2,5 5,5 10,6 2-1 -2-5 0-5 -3-5 -11-5 -1-1 -2,0zM1271,449l8,1 0-4 -5-4 -6-7 -7-3 -7-1 -3,2 -6-1 5,6 12,8 5,6 6,2zM1587,473l-3,1 -7,1 0,1 1,5 3,4 0,5 3,3 2-1 6-7 -3-5 1-4zM1424,887l5,0 5-4 6-2 5-3 0-1 -7-5 -5,1 -5,3 -5-1 0,4 -5,9zM813,507l-1,3 -3,2 5,6 6,3 2,5 5-7 1-4 -1-3 0-2 -4-2 -3,0 -6-4zM1776,469l-1-4 -12,5 4,1 6,0zM678,368l-9,10 5,4 7-1 3,1 4-5 5-3 3-5 -3-3 -6,0 -6-4z"/>
<path fill="#cecbc5" d="M1558,554l4-6 4-2 -2-7 -1-3 -3-1 -4,3 -3,1 -5,10 7,2zM685,536l-1-3 2-5 -4-2 -2-3 -4,1 -4,6 -2,5 -5,5 2,7 3,1 5-2 7-2 4-3zM1105,651l10-3 7,4 -4-11 -5-5 -5-1 -3,3 0,5 -1,4zM705,665l-5-11 4-3 -7-9 -6-4 -6-1 -3,6 -5-1 5,10 4,5 10,5zM1883,549l0,7 3,4 3,0 1-2 -7-14 -3,0zM1266,769l6,9 6-1 4,1 7,1 2-1 0-6 -5-3 -2-6 -5-3 -10-1 -5,4zM1083,458l4,4 2-5 6-2 8-1 -3-3 -10-6 -4,3 -8,0 -5,4 1,3zM1249,449l3,0 -8-7 -12-5 -8-7 -7,0 -5,4 5,3 12,8 19,6zM968,762l-1,8 1,3 3,5 5,1 3,4 3-5 4-2 0-5 1-2 -1-5 -8-4 -7,0zM1528,801l-1-3 -12-6 -4-3 -7,0 2,3 -6,1 12,4 6,4 3-1zM1502,331l-5-1 0,2 14,2 -2-2 -6-1zM832,286l4,9 3,0 1-2 0-7zM1308,484l-11-11 -4-1 1,4 6,6 4,9 3,0 11,6 -3-6zM893,711l-3,4 -2,4 2,2 0,3 3,0 5-2 11-17 -4-2 0-4 -4,4 -4,1 -4,2zM790,304l13,8 1-1 0-3 -6-11 -9-7 -2,1 -5-2 -4,0 -2,1 4,5 4,6zM770,687l-9-4 -1,4 4,7 -4,2 5,11 5,4 6,0 9,1 4-2 -6-6 -3-6 2-2 -7-6zM1118,816l2-6 1-8 -2-4 0-3 -3,6 -10,7 1,5 1,3 0,4 3,2 5-1zM1054,673l-2-1 -4,6 -8,7 -2,5 3,1 -1,5 3,3 4-3 2-3 5-10 1-6zM1488,522l-4,5 3,5 0,7 2,4 3,3 4-1 -2-14 0-11 -2,0zM1283,740l4-4 8,3 3-4 -2-5 1-6 -2-2 -1-2 -4,4 -7,2 -6,3 4,5 0,5zM899,754l-7-3 0-3 -6,2 -4,3 -4,2 0,4 -4,2 2,6 5,1 4-2 5-3 6-5zM880,797l5-8 3-4 -1-3 -6,3 -4,5 -6,6 2,1 4-2zM892,842l4-7 -3-8 -3-3 -7-1 -10,0 -2,8 -3,4 5,3 0,4 8,5 5-1zM1107,522l0,5 -5,9 3,7 3,1 6-1 1-4 5-4 2-5 0-3 -4-4 -6,2 -4-4zM1020,649l5,5 6,4 4-1 3,1 3-2 1-5 -1-3 -6-6 -4-1 -12,3 -7,1zM913,797l11,2 -1-6 3-8 3-5 -6,1 -5-5 -4,0 -4,4 -5,10 2,4zM1156,606l1-4 0-5 0-3 -3,0 -3-1 -4,6 -10,9 1,1 5,0 4,3 7-1zM1529,349l4,7 6,4 -7-12 -1-1zM1559,366l1-1 -1-3 -2-1 -5,1 6,1 0,3zM1492,402l3,8 8,4 15-2 -1-2 -14,0 -8-9 -2-1zM740,680l-4-5 -4,4 -3,2 -7-1 4,5 -1,3 4,6 4,2 3,5 4,2 3-3 1-4 3-2 1-5 -4-7zM1150,857l2-2 -7-7 -17-10 -2,2 -5,0 -1,3 15,16 7,2 5,1 5-1zM840,393l-10,1 -1,8 -2,7 -8,10 4,2 7-5 3,1 9-10 5-4 2-5 -2-3 0-5zM1043,773l-1-5 -5,2 -4,2 -2,6 -1,5 14,6 2-4 0-7 2-5zM1108,635l5,1 1-3 0-5 -4-4 -1-4 -3,2 -3,0 -3,4 -1,4 3,7 3,1zM1038,828l2-1 -8-7 -6-9 0-7 -7,7 -5,3 8,10 6,1 4,3 6,2zM1584,849l4,3 2,0 6-6 1-5 -2-3 -1-4 -2-2 -6-2 -4,4 -4,2 1,6 2,4zM1089,467l-5,4 2,4 10,3 14,1 1-4 5-2 0-3 -7-2 -6-2 -8-1 -7-2zM1159,355l3-6 -2-3 -2-2 -4-1 -5,3 -1,7 -5,4 1,4 5,7 2-1 3-2 3-4 3-4zM805,640l-5,2 -2,3 -3,4 -2,5 2,4 0,2 9,1 6-1 -1-5 4-5 -3-3 0-4zM1897,483l-7-6 -3,2 -2,6 -5,1 4,5 4,3 6,3 8,0 0-4 -1-6zM801,328l5-1 2-4 -5-11 -13-8 -6-3 -4,0 -1,3 1,2 0,2 4,6 6,4 3,7 4,2zM1295,924l1-6 -1-2 -5-2 -7,1 -5,6 1,3zM1514,862l-1-1 -6,4 -5,6 -7,8 6,0 2-1 11-12 2-4zM1528,722l1,5 3,2 5,0 4,1 2-1 3-1 1-3 1-6 -1-3 -3-3 -4-1 -7,7zM1122,730l5-3 9-9 7-8 2-10 -2,2 -3,0 -2,6 -4,4 -4,4 -3,8zM1815,561l-6,0 -3,1 -1,2 1,6 3,4 6,5 6,4 2,0 2,1 4-5 -2-5 -3-3 0-5zM1313,924l6-6 -13-2 -11,8zM905,790l5-10 4-4 1-5 -7,1 -1-1 -1-4 -5,7 -7,9 1,3 3,1 3,3zM1548,755l10,4 4-1 3,1 -1-4 6-1 -1-4 -5-4 -5-1 -7-1 -4,2 -6-1 0,4zM1555,821l-3-1 -1,3 -1,3 -2,3 0,4 3,5 4,0 4,1 3-2 -1-5 -3-9zM1220,866l5,2 3,3 2-1 3,0 4-9 -1-3 -2-3 -4-3 -3,2 -5-3 -2,4 -4,7zM1587,741l8,10 3,5 7,3 5-1 2-2 2-3 -2-5 -6-7 -6-2 -5,4 -6-3zM1178,649l-3-4 -7-4 -5,1 -7-4 -2,2 9,10 1,4 7,4 4,1 7-3 0-2zM878,402l0-5 -4,0 -6,3 -5,1 -10,12 0,4 3,1 0,4 5-3 5-3 5-5zM704,684l15,6 8,4 2,0 -4-6 1-3 -4-5 -6-3 -6-6 -2,3 -6-1 -3,1 2,6 3,2zM1482,778l-7-5 -4,0 -4,3 2,3 -1,3 2,2 4,1 12,3 0-3zM909,748l10-10 -5-4 -5,0 -5,3 -6,3 -5,5 -1,6 7,3 2,0 4-2zM1185,678l-4-1 -1-5 -5-1 -1,1 0,5 -3,3 -2,5 1,3 3-1 0,3 2,0 5-4 4-5zM1060,770l-1-1 -5,0 -6,4 -2,5 0,7 -2,4 1,1 4-2 7,6 4-2 2-3 -4-6 3-11zM886,490l0,1 1,4 4,4 5,4 6,2 2-2 6,1 5,0 0-1 -7-9 -3-5 -5,1 -7-3zM893,745l5-5 -1,0 -6,0 -7,1 -3-2 -3,3 -1,4 -3,4 8,3 4-3 6-2zM1484,616l4-5 3-5 -3-2 -4,1 -4,0 -5,3 -6,5 -2,5 3,3 4,2 8-1zM1550,795l-13-3 -1,3 2,4 4,3 5,4 4,2 4,0 0-6 1-3zM1147,515l9,2 8,5 4,5 2,0 6-4 -1-8 7-3 -8-3 -8-5 -10-1 -10,6 -1,4zM1495,642l-7-1 -5,7 1,3 3,3 4,2 3-1 0-4 4,0 -2-6 0-3zM1303,794l-3-1 -5,4 -1,5 3,4 0,5 2,2 3-1 2,2 3-2 1-3 4-1 -5-4 -2-5 1-5zM1161,924l14,0 0-5 -1-2 -4,0 -3,2 -5,4zM858,444l3-4 -1-4 -4-1 -1-5 -3-2 -4,2 -3,2 -4,6 2,5 -3,4 4,2 4,4 6-1 3-3zM945,330l-3,1 -2,10 2,5 0,5 0,4 3,2 3-3 4,1 3-2 2-5 -1-5 1-4 -3-4 -4-2 -2-3zM1440,650l3,4 5,1 7,0 3-4 1-3 -1-4 -4-4 -2-1 -3,2 -6,0 -3,1 -2,3zM1177,626l2-3 -5-4 -5-4 -7-1 -5,2 1,6 -3,4 7,1 8,5 7,2 1,0zM1233,495l-1-4 -7-4 -8-3 -10-5 -4,3 2,5 -5,1 3,3 2,2 7,3 7,1 7,4 7,0 2-4zM1136,317l-4,8 5,2 3,6 5,3 5,0 3-3 2-3 3-2 -1-2 0-3 -5-2 -3-3 -3-1 -9-1zM1469,586l-13,8 -2,3 2,2 -1,3 1,0 5-3 8-6 5-4 -1-1 3-3 0-2zM1607,788l2-2 1-4 3-3 -1-3 0-2 -11-4 -1,5 0,4 3,2 3,6zM1065,320l5,0 1-4 -12,3zM1006,699l3-4 1-5 -7-1 -2,2 -4,1 -9,12 2,3 7-2 4-2zM1063,870l-1-12 -2-6 -4-1 -7-5 -6,3 2,5 5,5 3,7 2-1 4,8 1-1zM1809,510l2,5 -1,6 1,1 2,1 1-4 7-5 -3-13 -2,4 -6,0zM1045,827l7,1 -2-6 -5-9 2-6 -2-1 -8-4 -5,3 -6-2 0,8 6,9 8,7zM886,640l17,1 7,0 2-1 1-2 -3-4 -2-4 1-4 -4,0 -3-3 -13,0 -7,2 -4,3 0,4 -1,3zM1435,553l11,0 5-3 0-1 2-3 -1-3 -4-3 -1-4 -3,0 -3,5 -7,10zM881,847l-5-2 -1,1 10,3 1-3zM1092,663l-2,1 -4,0 2,5 -3,4 2,5 1,2 8,3 5,0 1-2 -1-6 -3-5 -4-5zM1799,498l-7,2 -1,4 -2,3 3,4 6,4 1-6 4-4 0-4zM1052,588l4,4 -3,4 6,2 11,1 9-4 3-3 0-3 -1-3 -5-4 -5-2 -6,3 -6-1 -4,2zM935,880l6-4 -5-4 -3-2 -6,1 -7-3 -5,2 3,5 14,4 2,3zM952,820l-1,7 -3,5 5,1 3,6 6,2 5,0 1-3 0-8 -3-5 -3-6 -3-3 -2-1 -3,1zM1880,429l2,1 5-5 2-4 5-4 0-2 -4,1 -2-2 -5,2 -4,6 -5,2 -1,4 0,3zM1159,416l-4,3 -1,5 -4,5 -2,4 1,4 7,2 3-1 4-4 2-6 2-6 0-4 -5,1 0-4zM1550,527l-3,3 2,3 -2,3 3,2 3,1 3-1 4-3 1-3 -1-3 0-5 -6-3 -1,1zM884,741l7-1 6,0 2-5 0-4 3-4 0-4 -4-1 -5,2 -3,0 -7,10 -2,4 0,1zM1402,558l5-5 1,5 5-4 3-4 0-6 3-5 -2-4 -3-3 -1,0 -2,4 -8,7 1,4 -4,7zM833,824l5-2 3,0 2-2 2-3 0-5 2-5 0-4 -5-1 -2-3 -3,2 -5,10 -5,4 0,4 1,4zM1376,759l-4,3 -6,5 -1,2 1,5 2,2 17-4 3-4 5-5 -7-1 -1-5 -3-2 -2,0zM1239,324l-5,3 0,6 3,5 -3,4 4,3 0,3 5-6 9,0 4-3 -2-5 -4-2 -2-5zM1199,801l2-2 5,0 -6-5 -5-10 -7-2 -3,4 -6-1 0,3 13,11zM1198,546l-2-3 -2-4 -4,3 -4,6 0,3 -5,9 1,2 6-4 4-1 7-6 3-4zM1405,621l-1,1 5-7 -6,5 -9,10 -4,7 0,3 5-6 3-1 5-7zM1637,866l-2,6 0,3 -4,6 1,1 6,0 3-17zM1137,593l2-5 4-3 -12-3 -4,3 -6,6 1,3 -1,3 5-1 4,2 4-2zM1000,640l-4-4 -8-5 -4,1 -6-1 -5,4 6,10 -3,6 8,1 11,1 8,2 3-3 -1-5 4-2zM1107,692l-2-5 -4-4 -5,0 -8-3 2,8 -1,3 9,4 3,4 6,0 1-2zM1249,453l-1-2 -19-6 -4,1 -2,8 3,4 5,3 4,5 8-1 8,3 -2-6 3-2 2-3zM1066,638l10,8 2-1 4,0 2-3 -3-5 -1-5 -4-6 -3-3 -6-2 -2,1 -3,10zM1212,545l-4,7 4,3 5,0 11-6 3-5 -1-5 -18,1 -3,3zM892,783l2,0 7-9 5-7 -3,3 -3,0 -2,1 -11,11 1,3zM1121,332l3-3 4-1 4-3 4-8 -3-1 -1-4 -5,1 -1-3 -3,4 1,6 -4,5 0,6zM1525,649l10,4 7,4 9,1 1-3 -1-5 -4-2 -10-8 -6,0 -6-3 -4,1 0,6zM886,474l-1-4 -8,5 -1,3 0,3 -1,4 2,4 5,2 4,0 0-1 2-1 -2-5 4-4 0-5zM1305,494l-2,0 2,4 8,8 10,6 5,2 -1-3 0-3 -9-11 -11-6 -3,0zM870,806l-3-6 -6,3 -5,8 -3,8 3,2 4-1 5,1 5-3 1-3 1-4zM1396,473l-10-5 -2,2 -7,0 6,6 9,6 9,7 5,0 0-3 4-2 -6-5 -1-4zM1287,783l-1,5 -3,4 1,3 8,0 3,2 5-4 -2-3 1-6 -3-5 -5-1 -2,1zM1164,300l5-3 5,1 5-2 -2-1 -12,2zM1370,684l-5-2 -3,7 4,6 7,1 6,4 1-8 5-1 -6-2 -4-6zM982,308l4,2 2,4 3-3 1-3 4,0 0-4 -6,1 -8,0 -1,1zM1663,626l-4-5 -2-4 -4,1 -3-1 -4,3 -2,2 -2,5 4,11 10-9 6-2zM1532,534l-4,5 -2,4 10-5 3-4 4-4 0-3 -3-3 -6,5 -3,0zM1663,789l-2-3 -5,0 -5-2 -5,1 -4,4 0,1 4,11 7,2 5,2 5-5 5-2 0-3 -1-2zM1121,695l-8-1 -5,3 -1,2 3,3 2,8 5-1 6,3 3-4 3-5 0-5 -3-3 0-2zM1257,638l3-5 2-12 0-3 -3-3 -4-1 -4,3 -5,8 0,3 2,4 3,1 3,4zM817,802l-1-5 -5-3 -9-1 3,2 10,11zM934,730l5-7 -2-2 -2-1 -2-4 -7,3 -6,4 -5,7 -1,4 5,4 5-2 5-2zM1091,482l5,4 1,8 9,4 1-4 3-5 4-2 0-3 -4-5 -14-1 -10-3 -3,1 -1,2zM1227,341l-11,1 -1,1 1,3 -2,7 4,4 6,0 4,1 5-3 5-1 -1-3 1-3 0-3 -4-3zM1048,490l4-3 0-5 -7-4 -6-2 -6,4 -6-3 -3,2 3,5 0,3 4,3 13,5 1-1 5,1zM1746,631l12,7 2,0 0-4 -5-5 3-2 -7-5 -6-2 -3,0 -6,3zM1358,686l-7-1 -4,5 4,2 2,6 5,2 1-3 5-1 2-1 -4-6zM1220,720l-6,0 -4,4 0,2 3,3 2,4 1,4 6-2 7-7 -2-3 0-6 -3-4zM1594,616l-6-2 -7-1 -6,2 -2,4 7,4 2,4 8,4 3,0 3-3 2-6 5-4zM1193,424l3,5 7,3 9,2 5-4 7,0 -5-4 -3-4 -7-3 -4,2 -7-1 -5,1zM1516,862l-2,4 6,0 4,2 4-5 2-4 1-4 -2-2 1-3 -5,4 -4,3zM1001,821l1,3 3,6 9,7 8,3 2,0 1-2 2-1 -4-3 -1-3 -7-3 -7-6 -5-2zM1348,630l3-4 -4-5 0-3 -1-5 -5,4 -10,4 0,5 3,3 6,3 5-1zM1471,630l3-7 -4-2 -3-3 -2-1 -5,2 -5,1 -2,4 1,3 4,1 3,3 3,1 5,0zM1366,563l-2-9 -7-1 -3,2 -4,7 0,4 1,3 3,2 6,0 6-2 3-2zM1456,658l4,1 4-1 3,2 1-1 1-4 1-2 -1-4 -3,0 -3-2 -4,1 -1,3 -3,4zM674,514l-18,21 2,9 7-4 5-5 2-5 4-6 0-4 2-3 -4,0zM1157,602l10-6 7-1 0-7 -4-2 0-5 -1,0 -5,5 -7,8 0,3zM1468,883l2,0 4-3 4-2 3-4 -1-4 -1-3 -9-2 -5,2 -3,2 0,2 4,3 2,3 -2,5zM768,666l-17-12 -2,1 0,3 7,8 10,7 3,0 0-2zM852,631l-12,2 -3,3 0,4 2,5 5,3 9,2 7,0 6-2 -2-8 2-5 -8-1zM1078,368l-3-4 -5,2 -2,4 5,7 1,4 3-1 2,1 3-7 3-3 -3-4zM1079,750l-1-4 5-5 -5,0 -7,3 -5,1 -4,2 -5,5 2,2 4,2 2,5 4-3 6-3zM1447,585l-9,7 -6,7 -2,2 4-1 12-7 5-4 1-2 2-3 -1-2 -2,1zM1592,584l-9,6 -6,3 -2,4 0,2 -2,4 3,2 5,0 6-12 8-6 -1-3zM1334,821l0-2 -14-6 -3-4 -1,1 -4-2 -4,1 -1,3 -3,2 4,5 11,2 9,6 5-1 -1-2 4-2zM924,747l21-19 3-4 -2-2 -1-2 -6,3 -5,7 -5,4 1,4 -4,5 -4,5zM1165,344l6-4 5-1 1-2 -2-3 -5-4 -12-2 -3,2 -2,3 -3,3 4,4 0,3 4,1 2,2zM1271,790l-2,11 5,2 2,5 4,0 2-5 2-4 0-4 -1-3 -4,1 -3-2zM909,840l-2-6 -3-2 -8,3 -4,7 3,2 0,5 1,2 8-3 3-4zM1231,728l-2,0 -7,7 -6,2 -2,3 -3,2 -3,5 1,2 -4,4 5-1 1,3 6-2 2-1 4-7 5-6 1-5 6-7zM1558,823l4-5 -3-3 -2-4 -2-3 -4,0 -4-2 -2,2 -1,2 1,3 7,7 3,1zM1190,561l2-4 -4,1 -6,4 -1-2 -5,5 -4,4 0,3 -3,6 0,3 5-2 7-6 7-8 2-3zM883,602l7-1 5,4 6,1 6-5 7-2 2-10 0-5 -4-1 -8,2 -4,0 -4,6 -8,3zM1806,519l-4,0 -3-2 -1,3 -4,4 -1,3 2,5 3,2 5-1 3-4 3-3 2-4 -1-1zM1496,581l-1,3 2,3 3-1 1,0 3-6 7-7 2-6 -4,0 -5,2 -5,6 -5,4zM1222,613l-5-7 -1,9 0,7 -4,6 1,2 2,4 2-4 7-4 2-5 0-6zM1437,786l2-6 -2-1 -1-3 -5-2 -6,4 -5-1 -2,6 0,5 4,3 2,1 5-1zM1437,786l7,10 4,1 1-4 5-3 3-1 -4-9 0-4 -10,1 -4,3zM1464,349l1-4 4-3 -4-1 4-6 -2-3 -3-2 -1,1 -2,6 3,7 -3,3zM1167,793l-5-3 -3-4 -12,9 1,5 5,4 5,1 5,0 0-6 5-3zM779,590l7-4 7,1 4-2 0-6 3-3 -6-3 0-5 -5-2 -1,1 -3,1 -3,6 -4,7 -6,6 1,3zM1150,336l-5,0 -8,7 -6,4 2,6 1,4 5-2 4,2 5-4 1-7 5-3 0-3zM1522,505l6,9 3-3 10,3 1-1 0-3 -3-4 -10-7 -7-1zM1430,571l0,5 -2,4 2,2 8-1 5-3 2-6 4-3 0-3 -6,0 -3-2 -6-1 -3,3zM1122,402l10-9 7-7 -8,6 -4,5 -7,6 3-2zM1520,880l-2,3 5,2 7,5 2-3 3-4 1-5 -5-6 -4,0 -3,0 -2,2zM1214,393l3,3 3-2 5-5 4-2 2-3 0-3 -2-3 -5-1 -3,3 -5,2 -4,2 -4,7 -1,3zM871,358l-16-11 -7-2 -12-1 -1,2 3,5 -3,3 6,7 5-2 11,6 5,2 6-1 -1-5 4-1zM988,610l-4-5 -4-1 -3-2 -3-1 -5,1 -3,5 0,2 4,3 7,1 7,2 1-2zM1655,824l-9-8 -4-5 -4,0 -7-4 -2,3 0,4 3,5 7,4 6,3 6,1zM1199,878l-3,2 2,5 -3,4 8,3 1,4 2-1 2-5 3-5 0-5 -5-1 -3-2zM1517,677l1-1 -3-3 -7-3 -2-3 -6-1 -4,0 -4,0 3,4 10,7 8,1zM1456,544l6,2 4-3 1-3 -1-4 -5-1 -6-4 -5,0 -2,3 -1,2 1,4 4,3 1,3zM1481,527l-2,0 -5,3 -4,1 -4,5 1,4 5,4 10,0 7-1 -2-4 0-7 -3-5zM1020,689l3,1 2-1 9-11 0-5 -2-3 -6-3 -3,5 -1,6 -4,2 -1,6zM1823,583l-2,0 -2,4 2,7 -3,3 1,1 14-4 -3-2 -5-8zM1517,856l2-5 -1-1 -3-1 -2,2 -3,6 -8,9 -1,2 -1,3 2,0 5-6 6-4zM1570,754l-6,1 1,4 8,5 5,4 4,1 3-1 2-6 3-1 -7-3 -10-7 -4-1zM877,427l1-3 4-4 -3-4 -10,3 -3-3 -5,3 -5,3 -3,4 -1,2 3,2 1,5 4,1 17-5zM1383,785l4-2 -2-6 0-5 -17,4 -3,11 4,2 6-1 6-1zM1778,674l-8,0 -1,5 -2,2 1,5 4,5zM1312,657l0-6 1-3 -3-6 -4-2 -3-4 -4,1 -4,2 -4,5 4,5 4,5 3,0 6,2 3,2zM778,279l-1-4 -3,1zM780,274l-2-4 -1,5zM1202,901l-9,6 11,4 4,3 7-3 1-5 -3-3 -2-5 -3-1 -2-2 -2,1zM1443,658l-3,4 -2,4 2,3 5-1 6,2 3,1 0-5 2-4 0-4 -1-3 -7,0 -5-1zM804,702l3,4 -1,3 3,4 8,4 9,2 6,0 0-3 -4-3 1-3 -9-4zM1104,647l1-4 0-5 -3-1 -3-7 -5,3 -2,3 0,5 -2,4 1,0 4,1 4,5 6,0zM1119,753l1-6 6-6 -3,0 1-5 -5,6 -8,4 -5,6 1,8 4,1 4-2zM779,362l4,5 -2,6 3,7 5,5 9-9 6,0 -2-8 -6-2 -3-6 -5,1 -5-1 -3,1zM1558,798l-1-3 1-3 -4-4 -1-2 -6-2 -9-2 -6,6 5,4 13,3 6,4zM1422,617l-6,1 -2,9 2,3 4,0 5,0 3-4 4-1 1-2 0-2 -4-1 -1-4 -3-2zM1375,588l-4-2 1-4 -12,5 -5,1 -3,3 -1,4 7-1 9,5 6-6zM1234,785l12-1 7,3 1-2 -2-5 1-7 -1-5 -5,2 -6-1 -4,2 0,6 -5,3zM1146,381l11-8 3-3 0-2 -3,1 2-2 -3,2 -18,19 2-1zM1090,688l-2-8 -1-2 -4-1 -3-2 -2,3 -3,1 -2,3 5,3 2,4 3,2 3,1 3-1zM878,759l0-4 4-2 -8-3 -5,0 -5,3 -6,7 5,1 5-1 6,1zM1454,640l3-1 4,0 3-1 1-3 -1-3 -3-1 -3-3 -4-1 -3,1 -2,5 3,6zM838,574l0,5 -1,6 9,1 5-3 3-3 2-3 -1-4 -4-2 -3-3 -5,0 -7,1zM951,323l-3,2 0,5 2,3 4,2 3,4 3-3 3,0 -3-4 1-5 -3-4 -6-4zM1511,849l-3,2 -3-2 -1,4 -5,4 -3,7 0,1 3,0 0,3 3-2 8-9 3-6zM827,604l4,3 -3,5 5,1 7-5 3-6 7-4 -5,1 -3-2 -5-1 -6,0 -2,3zM1171,402l2,2 5,0 1,1 4-3 5-3 4-5 -1-2 1-2 -3-1 -5-1 -4,5 -9,8zM1000,711l-7,7 -7,4 1,2 6-1 3,3 4-2 6-6 4-5 1-4 -1-2 -3,1z"/>
<path fill="#c9c7c1" d="M1041,648l1,3 4,4 7,1 3,4 1,0 1-3 2-2 -1-3 -9-8 -4-1 -5,0 -6-1zM1662,658l4-4 -1-2 -2-4 -6-5 -11-3 -2,1 -1,2 1,7 6,6 6,3zM1246,725l-11,2 -6,7 -1,5 -5,6 -4,7 11-6 6-2 1-4 7-9zM777,275l1,4 3,1 0-2 -1-4zM1126,510l2,5 6-1 6-2 5,1 1-4 -5-2 -4-8 -5-4 -3-3 -3,5 -4,4 -1,5zM895,473l-2,0 -3,2 0,5 -4,4 2,5 5-2 7,3 5-1 2-1 2-4 -1-4 -4-4 -2-5 -3-2zM1545,829l3,0 2-3 1-3 1-3 -7-7 -6,0 -2,1 0,2 0,2 6,7 1,3zM1439,610l-4-1 -2-2 -4,4 -4,3 3,2 1,4 4,1 5-1 6-5 2-4 0-2zM952,319l6,4 4-1 1-1 -8-3zM1291,475l-6-5 -2,0 -1,2 0,2 8,11 4,3 6,5 3,1 2,0 -1-3 -4-9 -6-6zM1274,724l1,4 2,1 6-3 7-2 4-4 2-4 -1-4 -3-4 -8,0 -3,5 -2,4 -4,4zM882,801l-2-4 -3-2 -4,2 -2-1 -4,4 3,6 2,5 7-5 4,0 0-2 2-1zM1188,565l-2,3 -2,5 2,5 3,1 6-2 5,1 3-7 1-5 -2-4 -2-2 -6,2 -4,0zM1878,485l0,5 -5,0 -2,3 1,3 4,4 6,3 8,3 -2-5 1-4 -1-3 -4-3 -4-5zM1795,532l-4,7 -3,3 5,1 7,6 5,0 2-3 4-2 -6-4 -2-7 -5,1zM862,515l5-9 -4-4 -1-6 -3-4 1-5 -3,3 -1-2 -3,3 -3,13 1,6 2,4 3,0 4,1zM683,615l-3,2 -6-2 0,4 -1,6 5,3 7,9 6,1 6,4 1-4 -4-6 3-3 0-6 -4-5 -4-3zM1320,921l-1-3 -6,6 5,0 3-4zM1383,438l-4-2 -10,5 -4,0 -1,5 10,9 7,2 4-3 -1-4 1-4 1-4zM1591,781l2-2 -2-5 -4-2 -2-4 -3,1 -4-1 -1,2 0,4 3,4 3,2 3,4 3,0 3,1zM792,613l-2,3 3,3 2,4 0,5 2,1 3,0 3-3 5-4 3-1 3-7 -2-2 1-5 -4-2 -4,0 -4-3 -3,3 -6,4zM899,569l-1-3 -2-1 -3,1 -4,2 -5,4 -5,4 0,4 -4,6 -4,5 1,0 4-1 6-3 12-12zM1070,363l2-10 1-4 -2-2 -4,0 -4-1 -5-3 2,6 -1,4 -2,5 5-1 3,2 3,2zM883,734l7-10 0-3 -2-2 -2,1 -3,4 -5,0 -5,4 -2,4 1,3 -4,4 4,2 9-3zM1215,532l-4-4 -4,1 -5,3 -5,0 0,2 -3,5 2,4 2,3 4,1 7-4 3-3zM1107,699l-6,0 -4,2 -3,3 -3,5 3,5 4,3 5,2 9-9 -2-8zM911,816l-2-3 -1-2 -8-2 -4-6 -6-1 -1,1 -4,0 -2,1 0,2 3,4 2,5 5,4 6,1 11-2zM876,767l-2-6 -6-1 -5,1 -5-1 -8,3 -4,3 1,1 4,2 5,0 4,3 4-2 7-1zM1375,404l-2-3 1-6 -5,3 -7-3 -8,1 -2,2 -2,1 5,3 1,6 4,3 10-2 4,0zM921,301l-2-4 -3,2zM1321,593l7-9 3-11 -3-4 -8,3 -9,10 -6,11 3,1 3,3 5-1zM1181,753l5-2 7-6 2-3 1-4 -3-4 -6-1 -4-3 -5,3 0,5 -5,9 3,1 2,2 0,3zM933,639l-3,4 -1,3 3,5 4,3 6-1 8,3 5-3 -5-5 1-5 -4-4 -4,2 -6-2zM979,359l3,4 5,2 9,1 1-5 2-1 -3-6 -4-4 -4-5 -3,2 -7,1 -2,4 0,2zM1116,678l10,7 6-3 1-4 0-6 1-6 -5-4 -3-4 -6,2 -5,3 -2,7 0,3zM910,543l2,3 4-3 3-1 2,0 3-2 1-5 -1-4 -4-3 -5,2 -6-2 -2,3 0,6 0,5zM932,571l10-4 8,2 -1-4 1-4 -4-4 -5-1 -5-2 -4,1 -9,7 -2,4 -1,4 4,3zM1467,579l-2-3 -6,2 -6,4 1,2 -2,3 -1,2 3-1 7-3 12-7 1-1zM970,791l-4-4 -3,1 0,1 0,5 2,5 -1,6 4,0 3,4 1-3 2-2 0-4 0-3 -1-5zM1483,882l12-8 6-6 1-2 -3,2 0-3 -3,0 -3,4 -4,3zM1247,537l0-3 -3-2 -8,3 -3,0 -2,1 -1,3 1,5 -3,5 3,1 5,3 5,1 0-4 6-5 3-5zM1113,673l0-3 -4-4 -4-3 -7,3 -4-1 4,5 3,5 1,6 4-1 4-3 6,1zM1205,686l-4,2 0,5 -5,8 0,4 2,2 4,2 5-2 3-4 4-1 0-7 0-5zM1234,468l-15-1 -8,0 -3,3 -1,4 -2,4 2,1 10,5 8,3 7,4 1-4 8-1 2-3 -3-5zM939,320l-1,5 3,4 1,2 3-1 3,0 0-5 3-2 1-4 -5,2 -9-4zM1104,402l-2-3 -8,1 -5,3 -1,6 1,3 3-1 2,1 15-10zM1786,632l-3-1 0,6 -2,2 6,6 2,3 5-8 -5-6zM933,624l-2,3 -1,5 2,4 1,3 4,0 6,2 4-2 2-4 2-5 -2-6 -3-1 -5,1 -3-3zM825,762l4-2 5-6 11-8 0-1 -5,0 -1-2 -5,4 -5,0 -4,4 1,3 -2,5zM1443,581l3,2 1,2 4-2 2-1 6-4 3-4 1-2 -6,0 -8-3 -4,3 -2,6 -5,3zM872,735l-1-3 2-4 -3-2 -4,0 -4-3 -6,2 -1,3 1,8 4,3 4-1 4,2zM1235,645l-2,7 3,7 3,2 6-1 2-2 -1-5 3-1 -7-9 -4-1 -3-2zM1073,845l4-4 -2-9 -3-2 -13-4 -4,4 1,5 4,7 4,7 3,0 3,3 4,1zM707,596l7-2 5-7 -1-4 -1-6 -4-2 -4,1 -5,0 -4,6 -8,7 -2,5 4,7 5,0 5,2zM1173,641l4-4 0-3 -7-2 -8-5 -7-1 -3,1 3,4 1,4 0,3 7,4 5-1 7,4zM936,707l6-4 -2-4 5-5 -3-4 -5-1 -2-2 -5-1 -3,1 -6,11 -2,5 0,1 5,2 9-3zM923,683l-10-2 -6,2 1,6 -3,10 0,4 4,2 4-3 6,1 2-5 6-11zM1102,875l-4,3 -3,5 0,3 3,3 10,10 4,0 8-4 8,2 -1-1 -6-4 -3-8 -11-3 -3-6zM1551,772l-11-5 -5,4 -4,3 7,8 9,2 6,2 0-5 2-5zM970,744l-1,4 0,6 2,6 2,1 5-1 5-2 -1-8 6-1 4-5 -1-2 -21-4 -1,0zM1615,584l-5,1 -4,2 -2,7 -2,4 2,1 1,2 6-2 7-1 8-7 -4-3 0-3 -2-3zM1283,915l7-1 8-8 5-2 0-3 -3-5 -5-4 -9,2 -1,8 -7,2 1,7 3,3zM1072,504l-13-8 -14-2 -1,1 -5,3 1,4 2,5 12,5 6,1 9,0 1-3 3-2zM1108,821l0-5 -1-3 -1-5 -3-1 -3-3 -3,2 -4,0 -2,4 2,3 1,5 4-1zM1386,540l3,4 -2,4 1,6 4,7 4-4 4-3 4-7 -1-4 -2-3 -7-6 -5,1 -2,2zM1369,753l-1-2 -14,12 -6,2 -3,4 1,4 3,1 14-11 2-5zM943,855l-3,5 -6-1 -1,3 0,4 0,4 3,2 5,4 4,2 9-1 3-3 2-4 -8-9 -3-7zM1716,612l3-2 0-4 -2-2 -10-2 -5-3 -3,1 -6,1 -1,3 2,4 6,4 11,4 8,0zM1083,362l-1-5 1-6 -2-1 -2,2 -3-4 -3,1 -3,14 0,3 5-2 3,4 4-1zM1222,649l0,5 -1,6 0,7 4,1 4-4 5,1 0-4 2-2 -3-7 -3-3 -4,1 -2-4zM1542,749l0-4 -2-2 -4-1 -5,1 -3,4 -4,4 -1,5 9,2 6,5 2-4 4-3 4-1zM1581,885l3-1 0-6 2-5 -2-6 -4-2 -6-2 -5,0 -8,4 0,3 2,4 5,4 4,4zM1170,761l-5,1 -6,6 -2,2 -1,2 5,5 6-4 3-1 2-6 1-6 4-5zM1022,824l-8-10 -5-4 -9-2 0,3 -2,2 5,7 5,2 7,6 7,3 -1-5zM1661,816l0-5 -3-6 -5-2 -7-2 0,4 -1,4 -3,2 4,5 9,8 5,1 3-5zM1507,666l-1-1 -11-6 -4-3 -4-2 -4,1 -1,6 3,3 7,2 4,0 4,0 6,1zM898,559l1-5 0-5 -10,1 -3,5 -5,3 -4,4 0,2 -1,4 1,2 -1,4 2,1 1,1 5-4 5-4 4-2zM1190,417l2-4 -2-4 -3-1 -5,2 -3,0 -4,6 4,1 0,5 4,3 10-1 0-3zM1130,753l5-3 1-5 -3-2 3-7 -5,4 -5,1 -6,6 -1,6 -4,6 6,2 5-2zM1461,347l-2,1 -1,6 1,4 1-2 4-7zM1545,873l6-7 -7-5 -10,8 -7,3 4,0 5,6 8-1zM1016,400l-3-1 -1-3 -6,5 -10,3 -6,5 4,2 2,3 0,6 8-6 3-5 7-7zM1154,457l4-3 2-4 -3-6 2-6 -3,1 -7-2 -3,4 -6,11 2,3 5,2 5,4zM1383,572l-4,1 -3,4 -4,5 -1,4 4,2 -2,5 8-3 6-4 1-3 2-2 -3-3 4-8 -3-3zM862,466l-5,1 -5,5 2,11 -2,8 1,0 3-3 1,2 3-3 4-9 2-5 3-6 -3-1 0-3zM1287,319l9,3 4,4 5,1 3-2 -2-4 -2-3 -11,1zM1022,600l2-3 -5-4 -2-4 -5-1 -5,2 -6,5 -5,1 -1,1 2,2 2,2 6-1 13,4zM1325,407l2,5 4,4 3-2 7,2 2-2 1-5 -2-5 -1-5 -3-1 -5-3 -5,1 -4,4 -4,2zM812,294l-2-6 -5-3 -8,2 -8,3 9,7 6,4 3,1 1-4zM778,279l1,2 2,2 0-3zM1382,316l9,3 1-3 4-2 -1-2 -4,3 -7-1 -2-4 -4,2zM1314,442l-7-2 -5-7 -5-6 -8,0 3,7 -1,13 9,1 7,1 5,0 2-6zM1082,374l-3,7 4,2 0,3 3,3 4,1 8-3 1-3 0-4 -4-2 -2-5 -3-3 -5,1zM1253,787l0,11 3,5 1,1 3-4 6,2 3-1 2-11 -1-3 -2-2 -4,1 -5-2 -5,1zM1516,712l-3-5 -5-1 -10,3 -3,4 -1,4 -4,5 3,4 9,2zM1375,511l6-1 0-5 -1-7 -2-3 -11-7 -8-3 -2,1 0,5 2,5 -3,2 7,5 4,4zM1061,442l11-1 2-3 5-2 4-4 -5,1 0-4 -6,3 -4,2 -5,4 -1,2zM904,762l-5,3 -5,3 -2,3 1,2 2,0 5-3 17-18 -9,5zM1197,534l0-2 -2-2 -14,2 -7-2 2,7 -4,12 6-2 8,1 4-6 4-3zM1379,663l4,0 4-3 4-2 2-11 -4-1 1-4 -3,2 -8,11 -1,7zM1366,359l6,1 0-4 3-5 3-2 -5-4 0-5 -5-4 -4,2 -6-1 -4,3 0,5 5,12zM1495,879l7-8 -2,0 1-3 -6,6 -7,5zM1308,656l-6-2 -3,0 -2,7 0,4 9,9 2,5 2,1 2-3 2-1 -3-7 1-4 -1-7zM1660,668l-12-3 -4,1 0,4 10,7 -1,3 6,3 4,1 8,1 1-4 -4-5 -6-3zM763,718l3-4 4,0 0-3 -5-4 -2-4 -10-4 -6-5 -3,2 -1,4 -3,3 4,9 4,4 5,0 6,2zM1440,642l-5-11 0-4 -3-2 -4,1 -3,4 -5,0 -1,5 7,9 5,2 7-1zM1329,458l-2-6 -2-6 -5-3 -6,0 -2,6 4,11 0,7 5,2 8,7 2-2 0-5 1-4zM1151,558l7-4 -2-4 -4-4 -1-5 -5-2 -4,1 -14,8 -3,4 0,1 11,1 4,4 9,3zM1372,816l-19-5 -5-5 -3,1 -3-1 -1,1 3,4 -1,3 1,4 9,3 9,2 9,1 3-2 -2-2zM1530,552l2-4 -2-4 2-4 -7,4 0,4 -3,5 2-1 2,2zM1177,315l7-2 2-4 -5-11 -2-2 -5,2 -5-1 -7,4 -1,3 3,4 2,5 3,4 5,0zM1362,645l-2,6 2,3 2,2 3,0 3-3 3-7 1-3 -3-3 -2,0 -3,1zM1279,577l4-3 3-4 -1-5 3-5 -6,1 -7-5 -6-2 -2,3 -2,1 5,5 -2,7 0,6 3,2zM900,572l-4,11 4,2 4,0 8-2 4,1 5-3 0-5 3-3 -4-3 1-4 -4-3 -7,0 -11,6zM1660,825l-5-1 -4,3 4,7 8-6zM1262,823l3,6 4,2 6,1 5,4 2-2 -1-5 -2-5 -5-2 -3-5 -3,1 -3-1 -1,4zM1517,635l4,3 4-1 6,3 6,0 1-3 7-1 0-4 -5-2 -1-2 -5-3 -5,0 -4-3 -2,4 -7,5zM1413,596l-7,7 -2,7 -3,5 3,0 4-3 13-14 -2,0 -1-4zM1300,558l6,2 6-5 6-1 2-4 -5-13 -7-6 -5-1 -3,1 -1,4 0,5 -4,3 0,5 3,7zM1169,578l3-6 0-3 -2,2 -2,0 -7,7 -3,6 -6,5 -1,3 0,1 3,1 3,0 7-8 5-5zM1379,900l3-6 -3-2 2-5 -4,0 -4,2 -3,0 -2,5 0,5 1,1zM922,327l4-1 2-4 -4-8 -1-1 -7-4 -5-5 -3,4 -9,8 8,4 7,5 3,6 2,0zM942,599l-8,5 -1,6 5,11 3,3 5-1 3,1 1-5 3-3 0-6 -2-7 -4-4zM816,438l11-12 5-6 1-3 -3-1 -7,5 -4-2 -5,5 -5,9 -6,5 1,3 -1,4 9,1zM1017,336l-6-4 -5,2 0,5 3,7 7,8 4-1 5,3 4-1 2-4 2-2 -7-11zM1158,622l-1-6 -3-5 -7,1 -4-3 -5,0 0,4 -2,5 3,3 5,3 8,3 3-1zM1533,686l-7,0 -4,4 0,2 4,2 4,3 8,1 2-3 4-3 -4-4zM1245,363l-2-6 -2-3 -3,0 -5,1 -5,3 -1,5 -5,3 -2,3 5,4 -1,4 5,1 4-4 9-6zM1115,788l4,0 0,5 4-4 5-3 3-5 3-4 2-5 0-2 -3,0 -3-3 -5,1 -5,5 -2,6 -5,5zM1161,322l3-5 5,0 -3-4 -2-5 -3-4 -3,3 -6-1 -4,3 1,4 -3,4 3,1 3,3 5,2zM1138,699l-4,1 -5-2 0,5 -3,5 -3,4 0,2 0,2 7,0 4-4 4-4 2-6zM909,857l-1-4 -2,0 -4,2 6,4zM1541,616l-11-2 -5-3 -1,7 1,4 4,3 5,0 5,3 2-3 2-4 -1-4zM1256,803l-8,1 -4,2 -2,4 1,4 2,2 6,1 5,6 6,0 2-2 1-4 -6-7 -2-6zM1560,882l1-5 2-3 -2-4 0-3 -10-1 -6,7 -1,4 4,4 2,5 6,0zM1088,709l-5,4 -2,4 -1,4 5,2 -2,4 8,2 6-6 6-2 0-2 -5-2 -4-3 -3-5zM1423,494l1-2 -8-3 -6-5 -4,2 0,3 -5,0 7,6 10,5 4,0 5,0zM1080,795l0,4 2,4 5,2 4,5 2-4 4,0 3-2 0-4 -1-2 -4-3 -4,0 -4-5 -2,1 -4,0zM881,768l-2,0 -1,4 -4,6 2,1 0,2 6-2 5-4 5-4 2-3 -3,1 -3-1 -3-2zM1564,727l2-4 -5-3 -1-4 -4-2 -3,1 -6,1 1,3 -1,6 -1,3 5,3 9,1 3-1zM1075,602l2,7 5-1 4,3 5,0 3-2 4-4 0-3 -7-2 -9-8 -3,3 -9,4zM949,624l2,6 6-2 8,6 8,1 5-4 -8-5 1-4 -7-3 0-7 -3,2 -5-1 -6,6zM1360,587l12-5 4-5 3-4 -2-1 -6-1 -1-5 -1,1 -3,2 -3,7 -5,4 -3,8zM796,771l-7,8 -4,3 0,2 3,1 7,4 3-3 1-4 7-9 0-2 -1-1 -4,1zM1208,675l-3,6 0,5 9,4 7-7 0-5 0-5 -1-4 -4-4 -4,3 -2-2 -3,4zM1315,793l1,3 4,1 12-7 -3-1 3-4 -2-2 -3-1 -5-1 -4,2 -3,3 0,3 -3,3zM1446,611l-2,4 4,2 4,1 3,2 5-1 5-2 -3-4 -1-4 1-5 -4,1 -2-3 -1,0 -9,7zM1123,433l6-2 5,0 0-5 3-6 5-6 -3-2 -8,2 -8,5 -3,4 -3,5 1,4zM1034,449l8-6 5-5 -8,0 -7,3 -9,12 0,3 2,2 6-3zM1355,847l6-1 0-3 6-1 -2-3 -12-2 -13-6 -11-3 0,3 -2,3 18,10zM1115,862l1,5 6,5 9,1 6,5 5,0 3-5 -6-6 -1-4 -3-4 -7,2 -6,0 -10-3zM1560,775l4,0 -1-5 -3-6 -2-5 -10-4 -4,1 -4,3 -2,4 2,4 11,5 4,4zM1093,366l6-3 1-11 -1-3 -3-5 -1,4 -3,2 -2,3 1,5zM813,448l1,3 6-2 5-5 8-11 1-5 3-6 0-1 -5-1 -5,6 -11,12 -4,8zM1238,687l-3,3 -2,6 1,6 3,5 4,2 2,3 8-7 -2-6 1-6 -2-6 -1-2 -4,0zM1567,429l1,0 10-2 3-6 3-2 3,0 -3-1 0-1 -5-2 -4,2 -3,0 -6,7zM1167,773l-6,4 0,3 -2,6 3,4 5,3 3-1 3-4 6,0 0-3 -4-8 0-3 -2-2zM1059,678l8,0 0-3 -1-4 -1-5 -5-2 -3-4 -1,0 0,4 -2,3 -2,5 2,1 1,4zM1420,649l-12-1 -5,7 -2,5 2,7 1,2 5,3 5,0 4-5 6-2 -2-5 0-6zM1239,831l3,0 0-2 -1-3 -5-5 -8-3 -5-4 -3,0 -1,1 0,5 4,4 5,4 9,5zM1275,556l7,5 6-1 5-3 5-2 -3-7 0-5 -7-1 -5,2 -5-3 -5,1 -4,5 0,7zM1712,733l4-3 3-8 -1-2 -2-2 -4,0 -5,3 -2,5 -4,4 4,0 0,3 3,2zM1526,686l-13-8 -8-1 -5,2 7,5 2,3 0,5 2,0 4-1 7,1 0-2zM1538,763l-6-5 -9-2 -4,0 -3,1 -2,4 2,9 8,2 7,2 4-3 5-4zM1040,559l1,2 3,1 11-7 2-2 -1-3 -3-5 -6,0 -5,2 0,4 -2,3 -4,4zM782,696l-2,2 3,6 6,6 2,1 5-1 7,1 6,2 -3-4 1-3 -3-4 -11-5 -8-2 -9-5 -1,0zM1320,773l0,4 -2,6 4-2 8,2 3-4 2-3 4-4 -5,0 -4-3 -4-1zM917,815l6,2 5-2 1-10 -5-6 -11-2 0,7 -3,3 -2,4 1,2 2,3zM1036,371l-4,0 -1,5 -2,1 1,3 5,0 -1,5 8-7 4-6 -2-4 -3-2zM1041,836l6,5 2,5 7,5 4,1 2-1 2-2 -4-7 -4-7 -1-5 -3-2 -7-1 -5,0 -2,1 0,2zM1505,564l-10,6 -2,4 -7,9 3-3 5-1 5-4 5-6 2-4zM1423,703l2,1 10-9 2-4 -1-6 -5,2 -5-4 -5,2 0,3 -4,3 2,3 -1,4 2,5zM1531,798l7,1 -2-4 1-3 -5-4 -10-3 -6,1 -6,0 1,3 4,3 12,6zM1351,642l-5-6 -1-5 -5,1 -6-3 -1,3 3,5 2,6 3,5 3,1 2-3 5-1zM1408,812l-8,0 -3,3 0,4 4,4 2,4 3,2 3-3 5-1 3-4 0-4 -2-4 -1-4 -3-1zM1530,844l2,2 2-3 3-2 3-5 -1-4 -2-2 -8-1 -1,1 -1,13zM1332,303l3,2 -2-4 -4,1zM1404,885l7-1 5,4 2,0 5-9 0-4 -2-3 -3-1 -5,3 -4-2 -4,3 -2,3 -1,2zM1496,806l-17-5 -1,2 -2,2 1,7 5,3 5,6 10-3 7,2 1-2 1-2 -3-5zM1129,409l2,5 8-2 3,2 5-3 3-5 4-5 -2-4 -3-2 -1-3 -4,1 -5,3 -8,9zM1456,662l-2,4 1,5 3,0 4,2 4-1 1-4 0-4 0-4 -3-2 -4,1 -4-1zM1646,638l-4-11 -3-3 -4,0 -2,3 -4,2 0,6 1,5 5,0 4,4 4-1 1-2 2-1zM904,848l-8,3 2,1 4,3zM915,771l6-9 2-5 0-3 6-8 -9,7 -10,10 -4,4 1,4 1,1zM1039,635l11,8 4,2 3-1 5,3 0-3 -1-3 -4-5 -6-3 -8-3 -2,1 -5,0zM1496,642l0,3 2,6 4,3 9,3 4,3 2,0 3-1 -2-4 -4-4 0-4 -6-1 -6-1 -4-3zM826,784l-5-6 -2,0 -3,1 -4,5 -5,2 -5,4 -1,3 10,1 5,3 3-1 2-1 2-6zM1735,655l3-1 -1-7 -6-5 -16-6 -4,2 8,9 -2,5 14,5zM1762,541l-5,3 4,4 -2,5 4,2 4,0 3-2 0-4 3-6 -4-2 -3-2 -2-4zM877,746l1-4 3-3 0-1 -9,3 -4-2 -4,4 -4,4 0,3 4,0 0,3 5-3 5,0zM1437,786l-8,5 -5,1 -1,4 2,5 0,3 3,4 4,0 4-4 3-6 5-2zM1491,677l-5,1 1,5 -3,3 2,5 1,1 9,1 7,0 6-1 0-5 -2-3 -7-5zM1126,764l-1,4 5-1 3,3 3,0 6-8 1-6 7-8 -2-1 -8,1 -10,5 -4,6zM1307,348l-2,3 -1,4 2,7 9,2 5-4 0-7 -9-6 -3-3zM1139,534l3,6 4-1 5,2 9-4 3-4 5-6 -4-5 -8-5 -9-2 -6,6 0,5zM1582,627l-2-4 -7-4 -3,1 -4-1 -1,4 -3,2 5,5 7,3 6,2 10-1 0-3zM1096,518l-8,5 1,4 -1,3 2,2 5,0 3,1 4,3 5-9 0-5 -8-1zM910,807l3-3 0-7 -6-3 -2-4 -4,0 -3,6 -5,2 -3,4 6,1 4,6 8,2zM1521,857l4-3 5-4 2-4 -2-2 -3-1 -8,8 -2,5 -4,5 1,1 2,0zM1170,486l-14-5 -4,1 -4,3 -2,3 10,9 8,1 16-2 -2-3zM1711,699l3,6 3,3 5,1 4-1 4-2 2-10 -2-3 -11,0 -6,1 -1,1zM663,494l1-6 -1-1 -2,9zM1175,595l11-17 -2-5 2-5 -5,5 -7,6 -4,2 0,5 4,2 0,7zM1031,398l5-6 0-4 -3,1 0-3 -6,5 -6,6 -5,3 -2,2 7-2 2,0 3,2zM1237,834l-9-6 -5-4 -6-2 -4,1 -1,2 4,4 3,6 13,6 1-4zM1004,860l2-2 -5-5 -9-7 -7-2 -7,2 -4,4 0,5 3,5 6,2 7,3 4,6 8-2 2-5zM1514,866l-11,13 4,0 3,1 12-6 2-2 1-3 -5-3zM1032,521l0,2 -3,3 5,4 4,3 5-1 5,3 4-1 2-3 -6-5 -1-4 -5,0 -8-3zM1146,778l-3,2 -4,4 -3,5 -1,3 1,1 0,5 3,1 4-3 4-2 -1-5 3-6 0-4zM905,357l5-2 3-4 -2-3 -1-5 -12-6 -5,0 -4,6 -1,4 5,5 3,4 5,4zM1111,784l-2,7 -8,1 -2,6 1,2 0,4 3,3 3,1 10-7 3-8 0-5 -4,0 -2-4zM801,637l-1-8 -3,0 -2-1 -6,3 -5,5 -3,7 5,1 3,9 4,1 2-5 3-4 2-3zM1070,383l-9,9 1,4 2,0 7,1 5-3 6,1 4-3 0-3 -3-3 0-3 -4-2 -2-1zM1385,503l9,4 4,4 4-1 6,2 3-2 -1-3 -14-12 -4,1 -14-1zM949,535l-3-2 0-5 -3,0 -1-2 -3,1 -4,4 1,5 -2,3 1,0 1,2 13-1zM1058,706l-4,3 -1,6 -4,9 5-2 6,1 5,1 3-2 3-4 -2-4 1-5 -5-4zM1075,755l5,0 5-2 8-5 6-8 1-4 -5,2 -2-2 -5,1 -5,4 -5,5 1,4zM1019,493l16,12 7,2 -2-5 -1-4 5-3 -13-5 -4-3 -1,3 -5,1zM1216,863l-1,5 -3,7 -1,5 4,0 3,4 4-1 1-4 5-8 -3-3 -5-2zM1487,872l2,0 4-3 3-4 0-1 1-3 -3-3 -6,1 -2,4 -7,4 1,3 1,4zM1190,806l-4,1 1,6 -2,3 8,6 6,1 9,3 4-1 1-2 -4-5 -6-5 -10-6zM892,778l1-2 5-5 -3,2 -2,0 -1-2 -5,4 -5,4 -2,5 1,1 3-1 3-2zM1909,386l-10,8 -1,2 0,1 2,0 5-2 5-3 5-5 -1-2zM1127,724l3-8 -7,0 -5,5 -6,6 -2,2 2,3 6-2 2,1zM1497,799l-1-3 -5-4 -4,2 -3,4 -7,1 2,2 7,2 10,3 5-1 2-3zM805,538l-4,4 -4,3 0,4 -1,9 15-4 -3-3 4-7 -1-5 -3-5zM1128,807l0,6 5-1 3,3 3-12 0-4 -3-1 0-5 -1-1 -5,5 -3,5z"/>
<path fill="#eae6dc" d="M1718,756l-4,1 0,5 4,5 6-2 5,1 6-1 1-4 5-5 -1-2 1-4 -1,0 -8,3 -6-2 -8,0zM1635,457l-2-3 7,0 1,3 1,0 -2-3 -7,0 1,3zM1914,488l7-7 0-6 -13,0 0,6zM1190,913l1,3 -3,5 6,3 4-1 5-1 3-3 2-5 -4-3 -11-4 -2,1zM925,535l-1,5 3,0 4-2 3,1 2-3 -1-5 2-2 -4-1 -3-2 -4,3 -2,2zM798,605l3-3 1-3 -2-4 -5-3 -2-5 -7-1 -7,4 -6,0 -2,3 -1,7 8,1 0,7 8,2 6-1zM1601,644l-9-5 -6-4 -6,0 -6-2 -1,2 8,6 19,8 3-1 2,0zM1380,838l6,1 3-1 -5-4 3-4 -5-4 -2-2 -6-2 -3,2 -9-1 4,4 1,3 -3,2 7,4zM1229,613l2-1 3-1 0-5 0-7 -3-7 -4,2 -6,4 -4,2 0,3 0,3 5,7 4,2zM845,469l4-11 -1-5 -4-4 -4-2 -4,4 -4,0 -4,3 -1,6 3,5 2,8 5-2 3,2 2-1zM741,363l-4,2 -4-1 -3,2 -5,4 -4,5 2,3 -3,4 5,2 3,4 7-3 0-6 10-11 -1-2zM1008,385l0-5 -3-1 -2-2 -4,1 -5,2 -4,3 -1,5 -6,5 -2,5 4,1 1,2 6-4 6-4 7-4zM1691,680l-2,4 -6,0 4,4 6,4 7,4 5,1 7,0 1-3 1-5 -7-7 -5-3 -7-1zM1182,386l2,2 5,1 3,1 11-7 -2-3 1-5 -5,1 -7,2 -4,0 -4,2 -2,2zM1721,581l1-5 -5,0 -2,0 -5,1 -1,9 10,3 5,5 3-7zM768,458l-2-6 -4,1 -5,0 -5,1 -1,5 3,3 1,8 4,4 4,1 2-3 5,3 -3-7zM798,297l6,11 0,3 6,5 7,4 5,1 -2-4 1-2 -4-4 0,2 -10-8 0-3 -3-1zM1870,573l-6-1 -9-9 -8,3 2,6 -1,10 0,1 5,3 5-2 2-4 5-3 5-2zM1297,756l-7,6 -6,1 2,6 5,3 0,6 5,1 5,0 3-2 -1-4 4-2 0-4 -4-3 -5-8zM1254,743l-4,5 -5,3 3,3 3,6 5,4 4,1 4-2 5-4 -1-7 -9-5 0-4zM1144,393l4-1 5-4 2-5 6-4 -3-1 1-4 -2-1 -11,8 -6,6 -3,5 4-1 -2,5zM1282,327l1,8 2,5 4,3 6,0 6-5 -10-11 -10-4 -2,0zM1460,449l-5-4 -6-2 -6,2 -1,6 -6,4 1,6 4,4 10,4 5-1 1-9 6-2 0-3zM1761,723l6-5 2-12 -1-6 -10,0 -6,13 0,5 5,1 1,4zM799,340l-2-6 0-7 -4-2 -3,0 -6,6 0,3 0,5 6,3 3,6 3,3 6-2zM868,538l3-4 6-3 -8-5 -1-5 -6-6 -2,0 -1,7 -4,5 -2,6 8,6 4,5zM893,410l0-4 -3,0 1-5 -5,2 -4,0 -4-1 -7,9 -5,5 3,3 10-3 3,4 5-4 3-2zM1494,507l-3,10 1,3 2,0 0-10zM1114,415l15-18 6-6 -28,24 -4,5 4,0zM1365,473l4,4 17,8 8,5 6,1 1-1 -9-8 -9-6 -6-6 -8-3 -2,2 -3-1 0,3zM1138,388l8-8 10-11 -1,0 -2,1 -4,6 -17,17zM1696,773l5,3 4,6 5-2 3-3 5-1 2-4 -2-5 -1-3 -3-2 -5-3 -8,2 -6,2 -1,3zM1260,876l-6-3 -2,5 -4,4 -5,1 5,6 1,5 6-1 7,0 7-4 0-5 2-1 -2-2 -1-4zM1020,542l3,0 5-1 5,0 5-4 0-4 -4-3 -5-4 -7-1 -5-1 0,11 -2,5zM1176,844l13-8 -7-5 -7-4 -6-5 -18,0 5,8 12,5 4,8zM1027,477l-1-5 2-6 6-7 -3-1 0-3 -6,3 -8,12 -2,5 3,3 6,1zM1607,891l7-6 4-4 0-4 2-5 -6,0 -5-4 -4,2 1,4 -5,10 5,7zM894,457l-5,5 -4,8 1,4 4,1 3-2 2,0 4-4 2-6 0-7 -5,3 0-3zM724,479l-7-1 -3-3 -1,3 0,5 -1,3 1,5 -1,5 3,5 3,3 2-4 2-4 3-4 1-6zM1733,587l-6,0 -3,7 6,6 9,0 8,5 6-3 -4-11 -5-2 -8-4zM1111,402l-17,10 -1,2 0,1 2,1 6-3 2,1 9-7 1-2 1-2zM1543,497l5,0 -7-10 -7-4 -5-1 -3,3 -2,0 -1,2 10,8 9,3zM1102,567l-7-2 -8,2 -2,1 5,3 4,5 5,5 4,1 8-5 -1-3 2-5 -4-4zM1005,534l-6-4 -5-5 -5-1 -5-1 -4,6 -4,3 -2,5 2,2 6,3 9,2 10,1 4-4 5-1zM1737,635l3,3 1,4 5,2 7,3 3-1 5-1 0-3 -3-4 -12-7 -9-1 -4,0zM1369,441l10-5 0-4 4-8 -6-2 -1-3 -4,3 -4,6 -5,2 2,7 0,4zM1921,375l0-3 -5-3 -2,4 4-2 2,4zM1692,558l9-4 -1-4 4-5 0-4 -5,4 -5,3 -6,1 0,3 -3,5 4,2zM1383,411l8-5 5-7 1-4 -4-7 -7,2 -6,3 -6,2 -1,6 2,3 -1,5 2,2 1,2zM1550,634l9,5 15,4 5,0 -1-2 3,0 -8-6 1-2 -3-1 -7-2 -5,1 -7,0zM786,610l-8-2 0-7 -8-1 -5,4 -2,3 0,9 -2,4 8,2 4,3 5-5 12-4 2-3 0-4zM1378,649l11-15 1-1 -2,0 -1-2 -5,6 -5,4 -4,5 -3,7 2-1zM1673,468l5-1 -4-8 0,1 3,7zM783,462l-1-3 -5,2 -5-5 -4,2 -1,10 3,7 5,3 3-3 5,2 1-5 -1-4 2-5zM1355,869l-1,4 -6,1 5,5 5,3 6,4 4,0 4-8 -4-3 -2-6 -6-2zM1839,531l6-4 5-1 -2-3 -1-4 -6-1 -5-5 -5-3 -3,2 -1,4 2,5 3,5 1,4zM1282,663l2,0 1-2 -4-7 2-4 -2-7 -7-5 -2,3 -5-1 2,6 2,5 0,4 4,2 4,5zM1358,882l-5-3 -5-5 -4,0 -3-2 -4,2 0,2 1,4 4,4 7,7 5,2 4-1 2-4 4-2zM1487,846l7,0 3-4 -4-5 -4-7 -5-6 -6,0 -3,2 -1,0 0,8 -3,6 0,7 6,1 7,2zM1600,494l1,2 3,1 2,2 1,0 2-4 -4-4 -5,2zM1434,486l-2-4 -16-4 -7-4 -6,1 1,4 6,5 6,5 8,3 7-2 4,1 1-3zM1063,409l3,1 6-1 6-2 7-5 -1-5 -2-2 -6-1 -5,3 -7-1 1,4 -4,7zM924,394l4,2 7-3 2-6 4-6 1-7 -2-3 -6,2 -12,9 -2,3 1,4 -2,5 -1,5zM1371,838l0-2 -7-4 -10-5 -8-1 -10-4 -4,2 1,2 -5,1 1,1 11,3 13,6 12,2zM751,405l7-9 -6-6 -10-1 -7-4 -7,3 -2,6 0,6 6,3 7,6 7,1zM1697,531l0-4 2-2 -3-7 -4,4 1,3 -4,1 -5,2 0,1 9-3 3,3 -1,3zM991,544l-9-2 -6-3 -3,5 1,6 -2,4 7,3 7,0 7,1 3-3 6-1 -2-4 1-5zM1531,679l11,6 12,2 1-1 -1-3 -9-8 -8,0 -6-2zM1552,561l2-5 4-2 -3-3 -7-2 -4,2 -8,3 -1,3 0,4 1,2 7,2 4-1zM1128,328l-4,1 -3,3 1,10 9,5 6-4 8-7 -5-3 -3-6 -5-2zM736,474l0,10 -2,6 1,4 3,3 4-3 4,2 1-4 1-9 -1-5 -3-4 -1-5 -3-3 -3,1zM1053,437l6-2 10-7 6-3 -3-1 3-3 -2-2 -14,7 -3,4 -6,5 2,0zM1000,808l9,2 -2-10 1-6 -2-2 -3-1 -2-3 -3,3 -2-1 -2,6 5,5zM1485,470l6,4 4,6 1-9 4-2 -1-2 -1,3 -5,1 5-6 -2-3 -2-4 -2,0 -4,1 -4,1 -2,5zM1144,918l0,6 7,0 1-1 4,0 3-3 3-5 2-7 0-1 -5-2 -6,1 -2,4zM1701,706l-14-6 -1,7 -2,4 4,3 3,4 8-2 2-3 1-4zM945,469l5-6 -1-13 -10,0 -6-3 -7,13 2,7 0,1zM1571,723l2-2 0-4 -2-4 2-5 -4,0 -4-5 -3,0 -1,4 -4,4 -1,3 4,2 1,4 5,3zM1106,499l6,7 5-1 4,1 1-5 4-4 2-5 -4-2 -6-1 -4-2 -4,2 -3,5zM1784,594l8,0 -3-6 3-7 -3-4 -8-4 -9,5 3,4 1,4 3,6zM1600,531l3,0 4-2 2,0 1-6 2-4 -3-3 -6-4 -8,2 2,15zM1552,455l-5-5 -2,4 -6,6 3,10 6,1 2-4 6,0 -1-7 2-4zM1697,589l-5-3 -2,1 -3,3 -4,7 9,7 1-3 6-1 3-1 0-3zM1324,595l-3-2 -5,3 -4,6 -1,5 1,4 3,6 5,0 3-1 3-5 5-5 2-5 -2-7zM1203,580l3-3 7,0 3-2 2-4 3-1 -2-5 1-7 -3-3 -5,0 -5,3 -5,4 2,4 -1,5 -3,7zM1364,446l-4,2 -2,6 10,8 1,5 8,3 7,0 2-2 -3-4 -2-7 -7-2zM1748,659l11,0 -1-4 -5-8 -7-3 -5-2 -5-1 -5,1 6,5 1,7 5,2zM1018,391l4-8 5-5 -2-2 -4-2 -4,1 -6,2 -3,3 0,5 -3,4 3,3 0,3 4,1zM1287,408l-4,6 2,5 13-4 11,3 -4-7 2-5 -5-5 -6,0 -12,2zM1402,378l6,2 5-3 2-5 3-3 -2-6 -7-3 -6-5 -4,5 -7,13 3,3 1,3zM1448,747l-7,0 -4,2 -4,5 7,0 6,4 8,0 2-1 3-3 -1-3 2-3 -5-3zM1733,732l-5,5 -4-1 -1,0 -6,8 0,4 1,3 8,0 6,2 8-3 2-7 -1-5 -3-4zM1085,673l3-4 -2-5 -3-1 -6-6 -3-1 -2,2 0,3 1,3 3,3 0,5 4,3 7,3zM1468,433l9-4 2-4 0-2 -2-3 -6-1 -5-4 -6-1 -7,6 6,8 4,4 2-1zM1494,412l5,8 1,5 5,1 2,3 5-3 1-6 5-3 1-4 -1-1 -9,1 -6,1 -8-4zM1030,322l7,1 7,3 -4-5 -2-5 -6-6 -10-1 -2-1 -4,1 4,8 4,3zM764,770l-2,2 -2,5 5,2 11,3 -1-7 -6-5zM1918,446l-1-2 -4,0 -5-2 -3,2 -1,4 1,4 -1,4 5,0 8,6 4,1 0-16zM899,385l-2-3 -5,2 -2-1 -8,8 -4,6 0,5 4,1 4,0 5-2 4-5 2-4 3-3zM1857,503l2-4 -1-3 -5-5 -2-3 -3-2 -2,2 -4-1 2,4 2,5 4,5zM1615,772l1-3 -6-11 -5,1 -7-3 -1,5 -4,1 2,3 6,5 11,4zM1393,749l-5,1 -6,5 3,2 1,5 7,1 5-6 12-7 0-2 -4-1 -8,1 -1-3zM862,723l-3-5 6-3 -2-6 -9-3 -9-3 -9-1 -4,2 2,2 -4,2 2,2 18,10 9,4zM1205,851l-5-5 -2-7 -4-3 -5,0 -13,8 8,5 2,6 10,5 3-2 8,0zM1474,440l-4-2 -2-5 -3-2 -8,1 -2,7 -6,2 0,2 6,2 5,4 3,5 5-2 2-7 5,0zM1192,642l0,7 3,4 4,2 0,4 2-5 3-1 2-3 -3-5 -2-2 -2-6zM1359,357l-5-12 0-5 -4-2 -2-3 -2,1 -4-1 -1,3 0,6 -3,3 5,3 9,9 2-2zM1043,731l-2,3 7,11 6-6 8-5 3-10 -5-1 -6-1 -5,2 -6,5zM1045,478l2-10 -2-4 -5-3 -2-3 -2,0 -2,1 -6,7 -2,6 1,5 6,3 6-4zM1278,695l-3-6 -1-6 -3,0 -3-2 1,3 -6,7 0,5 2,7 4,1 2,0 3-2 2-1zM781,418l-2-2 -5-2 -6,0 -3,7 -4,1 -1,10 3,2 5,1 3,6 2-2 1-7 7-5zM1543,527l0,3 4,0 3-3 3-5 -2-5 -9-4 -1,1 1,4 -2,3 0,3zM1889,570l4,1 2-3 -1,0 -4,0zM1307,858l-12-10 -9-4 -4,0 -3,3 5,4 0,3 20,8zM913,645l3,8 6,1 3-4 7,1 -3-5 1-3 -5-2 -7,0 -5-3 -1,2 -2,1zM1060,664l5,2 1,5 3-3 3,0 1-4 -1-3 0-2 -4,0 -4-3 -4-1 -2,2 -1,3zM1000,757l-2-8 -6-5 -4,5 -6,1 1,8 -5,2 8,4 1,5 3-3 4,0 4-3zM1305,498l-2-4 -3-1 -6-5 -4-3 -2,2 1,4 2,4 6,7 1,4 6,5 6,1 2-1 1-2 0-3zM718,350l-7,1 -4,2 -3,5 0,4 -3,4 2,3 1,4 3,0 7-6 11-17 0-2 -2-1zM1224,626l-7,4 -2,4 -2,11 3,2 3-1 3,3 2-3 3-13 -2-2zM1829,475l0,3 0,3 6,7 2-2 3,1 2,0 -3-7 -7-7zM1184,365l1,1 6-1 6-2 6,1 2-6 -3-2 -1-3 -3-1 -8,2 -4,3 -1,4 -3,4zM1616,659l-5-6 -6-5 -2,0 -3,1 2,3 -1,2 9,6 2,4 3-1 4,2 2-1zM1650,762l2,2 2,2 2-1 2-1 5-6 4-2 3-6 2-4 -2-3 -4,0 -3-2 -3,2 -4,6 -1,5 -6,6zM1009,614l-10-13 -2-2 -2-2 -2,0 -3,3 -5,0 -1,5 4,5 5,2 6,3 7,2 -1-3zM1689,770l-4,2 -4,4 0,4 3,3 3,1 5,4 3,2 8-3 1-2 1-3 -4-6 -5-3 -2-7 -1,0zM1469,861l-2-6 1-7 -5-1 -16,4 -7,4 1,4 15,5 8,2zM1212,862l-5-4 -8,0 -3,2 -2,3 5,5 0,4 4,5 3,2 5,1 1-5 3-7 1-5zM1684,751l4-4 0-2 0-1 -5,1 -1-4 -5,1 -5,4 -2,4 -3,6 1,2 6-2 2,3 2-1 3-2zM1809,449l0,4 3,5 4,2 3,4 3-1 4,1 2-1 0-1 -4-6 -4-3 -4-5 -2,2zM740,466l3,3 2-4 4-1 3-7 0-3 -1-4 -1-8 -2-1 -6,4 -7,11 0,5 1,3 1,3zM1407,896l4-5 5-3 -5-4 -7,1 -2-5 -4,2 -4,6 0,5 3,2 -1,4 6,0zM1018,565l-2,0 -6,6 0,3 -1,2 2,2 -1,5 4,1 4-2 4-4 4-2 2-6 -3-2 2-5 -4-1zM1037,678l3-8 3-3 -5-9 -3-1 -4,1 -1,4 -4,5 6,3 2,3 0,5zM1455,742l7-9 -2-2 -6-1 -14,4 -5,3 1,7 5,3 7,0 7-2zM1915,387l6,1 0-13 -1,0 -6,10zM734,629l4,4 5,0 10-6 0-2 -13-11 -8-5 -3,3 -2,0 1,6 -2,4 3,4zM1914,488l-6,1 -7-2 1,6 0,4 1,1zM1039,438l8,0 3-3 6-5 3-4 0-3 -3,1 -2-2 -5,1 -4,3 -3,5 -9,8 -1,2zM1866,549l6,5 5,3 2-1 4,0 0-7 -3-5 -7-2 -4-4 -8-3 -3,8 1,4zM1135,470l4-1 5,3 5,1 3-3 1-4 0-2 -1-3 -5-4 -5-2 -2-3 -4,1 -2,4 -3,2zM769,752l5-1 9,0 0-4 -2-5 2-4 -7,0 -7-3 -5-1 -6,2 -3,4 0,4 5,4 -1,3 2,1zM747,755l0-4 -7-3 5,7 1,3zM1325,673l1-8 -3-5 -7-3 -4,0 -1,1 1,7 -1,4 3,7 5-1 8,6 1-2zM1654,600l0-3 -6,2 -2,3 -1,5 1,3 3,2 1,5 3,1 4-1 1-3 1-5 -4-3 2-6zM962,407l-10,4 -13,10 -6,5 0,1 -2,5 6-4 2,0 4-4 8-6 5-4 2-3zM1752,526l5-5 4-5 -1-1 -5,0 -3-1 -5,4 -3,3 -4,6 -2,6 10-5 3,2zM1480,484l-4-5 -2,5 -3,2 1,6 2,4 0,7 3,0 2-2 3-2 2-4 -1-8zM1176,874l3-1 0-3 2-2 2-4 -6-5 -8-1 -6-5 -6,1 -5,1 -2,2 2,4 8,3 6,6 8,4zM1246,649l3,3 8,4 2-1 -2-4 1-4 -3-4 -1-6 -3-4 -3-1 -2-4 -1,1 -1,11 1,6zM1307,858l-3,4 3,4 11,7 6,1 13,2 0-2 4-2 -7-6 -6-4 -7-3zM865,298l6-1 -4-3 -2,4 0,2zM1733,671l-3-10 1-4 -8-3 -6-2 -5,0 -3,4 1,7 14,10 5,1zM1582,791l-9-5 -2,4 0,3 3,8 4,0 3,4 0-8 3-2zM1358,700l-5-2 -2-6 -4-2 -3,5 0,6 -4,3 3,3 5-3 6,3 5-4zM1232,794l2-9 -6-6 -7,0 -6-4 -3,4 -3,6 3,5 7,4 5,2 4-1zM1188,863l6,0 2-3 -10-5 -2-6 -8-5 -4-1 -10,4 -1,2 2,4 6,5 8,1 6,5zM1511,742l-4,5 -6,4 -4,6 5,3 6,0 6,1 2-4 3-1 -4-5 -2-9zM1828,498l2,2 3-2 4,0 -2-10 -6-7 -1,4 -3,2 0,4zM939,450l3,0 11,0 1-2 -1-4 5-3 0-4 -5-6 -4-2 -6,3 -4,1 -2,4 -1,5 -3,5zM1807,470l-1,4 2,4 1,6 5,2 4,1 2-3 -3-12 -4-1 -4-3zM725,350l-11,17 6,3 5,0 5-4 3-2 1-12 -4-3zM1662,705l-10-1 -8-5 -6,2 -2,5 0,6 6,6 9,2 9-1 6-7 1-3zM731,488l-5-2 -1,6 -3,4 -2,4 -2,4 2,1 2,5 5-1 6,0 5-2 -1-5 1-5 -3-3 -1-4zM1307,566l-6,11 6-2 5,1 3,1 5-5 7-3 -4-5 -5-10 -6,1 -6,5zM1342,335l-3-8 -2-3 -4,1 -3-1 -3,7 1,6 -2,7 2,5 8,1 2-3 3-3 0-6zM1354,357l-2,2 -2,7 5,12 5-1 9,3 6-8 3-4 -2-6 -4-2 -6-1 -7-2zM807,352l4,1 4-2 4,0 4-2 -4-6 -5-5 -8-11 -5,1 -4-1 0,7 2,6 3,9zM672,412l0,4 -1,4 5,1 5,0 5,3 0-7 2-6 4-5 -5-6 -9,6 -5,1zM1579,584l1,1 12-7 3-3 1-4 -5,1 -3-1 -5,2 -7,6 -2,4zM1216,803l-10-4 -5,0 -2,2 -7-2 1,3 2,3 9,4 6,2 9,4 1-1 3,0 1-3 -4-4zM1764,535l2,4 3,2 4,2 13,0 2-1 -5-4 -4-11 -5,3 -5-1 -2,3 -3,1zM949,665l6,1 4-2 0-3 -2-5 -1-3 -6,3 -8-3 -6,1 -1,3 2,4 5,2 3,3zM1577,513l0,4 3,2 4-3 1-4 0-5 -2-1 -6-3 0,4 -2,3 0,1zM996,414l-2-3 -5-3 -6,1 -6,5 -5,2 0,3 -3,4 1,3 8-1 6,2 8-4 4-3zM1166,504l8,5 8,3 2-1 6,0 4-3 -6-5 2-3 -10-4 -16,2 -8-1 2,4 -2,2zM733,671l-2-4 -7-3 -12-7 -8-6 -4,3 5,11 5,6 6,6 6,3 7,1 3-2 4-4zM1614,905l-3,1 -5,6 2,4 -2,2 2,2 2-1 5-2 6-4 2-4 1-3 4-5 -3-2 -5,1zM1857,503l-7-2 1,4 -1,4 7,3 6,6 7,4 -1-4 4,0 1-2 -1-1zM781,542l2,3 3,1 4-3 3-7 0-15 -3,2 -6-2 -2,3 -2,5 -1,8 -2,6zM1900,429l4-2 4-5 0-7 -4,0 -6,4 -1,4 -6,6 -1,5 4-1 3,1zM1353,302l1,4 2,3 6-1 2-2 -6-2 -4-5 -1,0zM1766,492l3,0 2-1 -1-3 -4-6 -2-1 -2,8zM1285,565l1,5 -3,4 6,2 1,5 9-3 2-1 6-11 -1-6 -6-2 -2-3 -5,2 -5,3zM1189,638l-6,0 -5-4 -1,0 0,3 -4,4 2,4 3,4 4,5 3-2 5,0 2-3 0-7zM1257,656l9,9 5,2 5,3 3,0 -1-4 1-4 -4-5 -14-10 -3,0 -1,4 2,4zM1471,840l3-6 0-8 -10,0 -6,1 -9,1 1,5 -1,4 3,4 7,3 4,3 5,1 3-1zM1496,622l-9,3 0,4 -3,6 3,2 1,4 7,1 0-5 -2-5zM1287,670l6,5 4,7 4-1 4,0 3-2 -2-5 -9-9 -4,0 -8-4 -1,2 -2,0zM1596,459l-8-2 -1,6 2,5 -2,5 3,3 5,1 1-1 1-6zM1792,452l6,4 6,5 8-3 -3-5 0-4 -11,0zM1527,515l1-1 -6-9 1,5 1,5zM929,841l3,1 1,2 4-1 2-5 4-1 0-2 -1-2 -1-6 -7,2 -5,2 -1,4 0,5zM1418,783l2-6 -1-3 -5-3 -8,3 -3,6 -7,4 2,3 5,3 2,5 4-4 5-1 4-2zM919,703l-6-1 -4,3 -7,10 -4,7 4,1 0,4 5-2 4-3 3-4 1-4 3-6 1-4zM1804,599l-6,0 2,6 3,6 -1,6 3,2 2-18zM1438,343l-4-2 -4,0 -5,0 -3,1 0,5 3,4 5,3 2,4 6-1 4,1 2-3 -3-10zM1667,709l-2-4 4-5 -5-5 -22-6 -2,1 0,2 1,3 3,4 8,5 10,1zM1275,621l4-12 2-5 -6-4 -4,7 -5,7 -4,4 0,3 3,3 4,0 5-2zM1380,848l-6-2 -7-4 -6,1 0,3 -6,1 6,6 10,2 4,4 1-4 4-2 4-2zM1000,499l7,4 7,4 5-3 6,2 -10-6 -9-4 -4-5 -3,1 0,2 -2,1zM1601,665l-7-8 -5-3 -4-1 -8,1 2,3 1,4 6,3 2,4 5,3 4-1 1-3zM1690,645l0-9 -5-3 -7-6 -10-2 -5,1 -1,1 6,11 0,5 8,3 11,1zM728,592l1,6 -4,6 7,4 3-5 5,1 4-5 1-6 6-6 2-6 -8-1 -5-2 -5,2 -5,5 -5,2zM1447,405l5,2 6,0 3-5 5-2 0-1 -3-2 -9,3 -10,3zM990,471l3-2 6-2 0-8 -3-2 -5,0 -7-1 0,6 -3,3 -1,4 2,3 5,3zM1355,421l1,5 7,4 5-2 4-6 4-3 1-3 -1-5 -2-2 -4,0 -10,2zM1585,542l-5,2 -3-2 -3,2 -1,2 2,7 4,3 3,0 5-2 0-5 2-5 -1-1zM1710,563l-3,5 -5,4 0,3 2,2 3-2 3,1 2-5 9-10 0-2 -2,0 -4,1zM1723,492l-16,3 -1,1zM1051,572l7-2 2-5 -3-3 0-4 -2-3 -11,7 0,4 -7,6 0,4 6,2 5-2zM805,514l-10-1 -4-2 2,6 0,4 0,1 5,7 6-2 3,5 2-4 -2-7 3-2 -4-8zM1908,475l13,0 0-12 -4-1 -8-6 -5,0 -3,1 1,4 -2,5 1,5zM1668,638l-6-11 -6,2 -10,9 0,2 11,3 6,5 4-2 1-3zM1335,683l1,20 2,2 2-1 4-3 0-6 3-5 -3-3 -2-5 -3-2 -3,3zM937,354l-10,9 -4,13 -1,6 12-9 6-2 2-4 1-5 2-5 -3-2 0-4zM1146,697l-1,3 -2,10 -7,8 15-11 2-4 5-7 1-4 0-1 -7,3 -4,1zM1770,674l8,0 1-4 -2-4 -5-5 -3,0 -6-2 -3,1 1,3 4,3 3,4zM1299,356l5-1 1-4 2-3 1-4 -2-4 -5-2 -6,5 -5,0 2,4 2,3 1,4zM907,844l-3,4 -2,6 4-1 2,0 7-6 2-4 -1-4 -2-1 -5,2zM1469,693l11-3 6,1 -2-5 3-3 -1-5 -6-4 -5-1 -6,2 -2,3 -2,9 2,4zM801,506l-2-5 -4-4 -16-9 1,4 -1,4 1,4 5,4 6,7 4,2 10,1 1-3zM1142,822l10-1 -1-5 -1-7 3-5 -5-4 -1-5 0-1 -4,2 -4,3 0,4 -3,12 3,4zM1399,740l-2,5 1,3 8-1 4,1 2-4 7-5 -1-3 -5-4 -6,2 -5,4zM1090,840l3-3 1-6 -2-5 -7-3 -2,4 -5,1 -2,5 3,6 6,2 5,5zM1587,532l-2-3 -2,2 -3,2 -3,0 0,9 3,2 5-2 3,1 2-4 0-6zM1008,665l-7,2 0,4 7,4 6,2 4,3 4-2 1-6 3-5 -6-2 -4,0 -6-3zM1744,589l5,2 6-2 1-3 0-5 -2-5 -5-4 -5-1 -6,1 -1,3 -3,4 2,6zM1556,481l-5-4 -8-2 -1,4 0,4 1,4 8,5 6,2 5,0 1-2 2-1 -3-6zM1578,677l-3,1 -12-2 4,5 -2,3 4,4 3,3 7,3 4-1 -3-5 2-5 -2-5zM1756,581l0,5 9,4 6,3 8-1 -3-6 -1-4 -3-4 -8-5 -7,0 -3,3zM1130,365l0,10 1,2 11-5 3,0 4-4 -5-7 -1-4 -4-2 -5,2 -2,3zM1401,313l-5-2 -1,1 1,2 4,0zM1832,526l-3-5 -2-5 -2,0 -4-2 -7,5 -1,4 4,4 2,5 5-1 4,2 5,0 0-3zM1400,314l10,6 -2-3 -7-4zM1425,328l5,0 2-3 -5-5 -2,1 -7,2zM1322,694l-3,0 -3,3 0,4 -1,6 2,3 4,1 3-4 2-5 0-10 -1-3zM1003,820l-5-7 -9-5 -3-4 -1,1 -1,1 2,4 0,5 4,5 15,10 -3-6 -1-3zM1203,398l4-4 1-3 4-7 -4-2 -5,1 -11,7 -1,2 1,2 6,2 1,3zM967,338l6,11 3,3 2-4 7-1 3-2 0-1 -10-6 -5-5 -1,3zM1278,666l1,4 -3,0 2,4 5,5 1,4 9,2 4-1 0-2 -4-7 -6-5 -5-7 -3-1zM990,327l-5,1 3,5 0,5 2,5 6,2 13,1 -3-7 0-5 -6-2 -4-6 -6-4zM1566,535l5-5 0-4 -2-7 -1-1 -2,0 -3,6 -3,0 0,5 1,3 -1,3 3,1zM1028,596l2-6 4-8 2-5 -5,1 -5-2 -4,2 -4,4 -4,2 -2,4 5,1 2,4 5,4zM1794,612l-6-3 -4,3 -5,0 6,5 5,7 9,1 1-4 -1-4zM819,490l-7-2 -5,2 3,5 0,4 4,5 6,4 3,0 4,2 2-8 0-5 -6-10zM1630,853l0-6 4-1 -5-6 -4-6 -4,0 -5-1 -6-3 5,7 1,8 4,7 4,3zM812,457l-3,9 3,7 7,1 5,6 5-2 3-5 -2-8 -3-5 1-6 -5-2 -3-3 -6,2zM1353,387l-1,4 2,5 8-1 7,3 6-4 -1-4 -2-5 -3-5 -9-3 -5,1 -2,3 -4,1zM1046,631l2-3 -7-7 3-3 -2-1 -6,0 -7-2 -5-2 -3,0 -2,3 10,5 3,4 11,5zM1272,507l-1,4 2,9 7,5 5-4 6,0 0-4 -1-5 -3-5 -10-7 -2,3 -2,0zM745,730l-2-8 -2-5 -4-2 -6,2 -4,4 1,5 0,1 2,4 17,4zM1695,650l6,3 8,3 3-4 5,0 2-5 -8-9 -6,0 -8-2 -7,0 0,9zM1707,517l7,0 4,1 3-3 1-3 -16,1zM703,451l4-2 -1-5 3-3 -8-4 -9-12 -5-1 0,6 3,8 -3,3 13,9zM1232,794l7,9 5,3 4-2 8-1 -3-5 0-11 -7-3 -12,1zM1585,512l-1,4 2,3 2,0 3-3 3-2 -1-5 1-4 -2-1 -2-4 -2,4 -3,3zM1627,884l4-3 4-6 0-3 2-6 -4,0 -3-7 -5,0 -4,8 -3,10 0,4 5,0 1,4zM1675,766l0-4 1-3 -2-3 -6,2 -1-2 -4,2 -5,6 2,4 0,4 4,3 8-4zM1159,692l4-2 3-3 3-2 2-5 3-3 0-5 -4-1 -4,1 -5-1 2,7 -3,6 -1,7zM823,487l6,10 4,3 4-5 4,1 1-9 -2-8 0-6 -3-2 -5,2 -3,5 -5,2 -1,3zM696,461l3,5 5,3 3-2 4,8 3-1 1-5 -1-6 -3-3 -4-4 -4-5 -3-1 0,5zM866,726l4,0 3,2 5-4 5,0 3-4 -4-1 -9-10 -7,0 -3,0 2,6 -6,3 3,5zM1436,685l1,6 -2,4 5,3 0,5 4-5 2-1 1-5 3-6 -4,2 -3-5 -5,0zM1511,431l2,4 3,1 4-1 3-5 4-2 -3-2 0-6 -6-3 -5,3 -1,6 -5,3 0,1zM1725,566l1-5 -2,0 -3,0 -9,10 -2,5 0,1 5-1 2,0 5,0 1-3 3-2zM1058,437l4-1 1,2 5-4 4-2 7-5 0-1 0-2 -4,1 -6,3 -10,7zM1358,580l5-4 3-7 -6,2 -6,0 -3-2 -4,3 -1,3 -1,9 5-1 1,3 4,1zM1818,597l-6-1 -2,4 9-2zM667,379l-5-1 2,8 4-2zM1483,412l-14-8 -3-4 -5,2 -4,7 3,5 6,1 5,4 6,1 0-5zM1591,868l7,2 4-3 0-2 -5-3 -7-10 -2,0 -3-1 1,5 -6,4 0,5 4,2 2,6zM1401,606l-7,1 -4,5 1,4 -1,5 -3,5 2,0 12-11 3-5 2-7zM1916,430l-5,0 -4,4 -4,5 0,4 2,1 3-2 5,2 4,0 -2-7 3-4 -2,0zM1871,433l-2,4 2,3 -1,5 2,3 3-2 3-4 3-2 2-4 -1-3 0-3 -2-1 -7,2zM1199,435l0,5 0,5 7,2 8,4 9,3 2-8 4-1 -12-8 -5-3 -9-2zM1649,559l4-2 4-2 1-2 -10,4zM1422,791l-4-3 -4,2 -5,1 -4,4 1,4 5,9 3,1 4-2 7-3 0-3 -2-5 1-4zM1573,736l-7-2 -3-3 -3,1 -3,0 3,5 -3,2 2,6 5,1 5,4 4,1 -1-5 1-4 5-2zM1300,326l2,9 -1,3 5,2 2,4 1-4 5-2 1-5 -1-3 -6-5 -3,2zM1117,384l-3,3 3,3 2,3 7-4 2-4 3-8 -1-2 -7,3 -5,0zM1147,565l2-4 -9-3 -4-4 -11-1 -5,3 -1,4 -3,3 3,4 7,1 4,3 11-3zM1047,545l6,0 2-5 0-3 -3-3 -4,1 -5-3 -5,1 0,4 -5,4 9,6zM1897,398l-3,5 -4,10 -2,1 2,2 4-1 2-4 6-7 0-5 -2-2 -2,0zM1803,501l0,4 -4,4 -1,6 1,2 3,2 4,0 4,2 1-6 -2-5 1-5 -3-2 -1-3zM1244,851l-3-1 -5-3 -2,8 2,3 1,3 3-1 5,4 3,0 0-4 3-1 1-3 -4-5zM1283,703l1,5 8,0 3,4 4-7 -4-2 -2-6 -5-5 -2,2zM1635,920l-3,4 15,0 -1-3 -4-3 -2,0zM904,433l-4-1 -6,3 -6,1 -7,2 -2,4 0,7 8,1 -2,5 4-4 4-6 5-3 6-7zM1185,875l5,4 6,1 3-2 4-1 -4-5 0-4 -5-5 -6,0 -5,1 -2,4 -2,2 0,3zM922,545l-2,3 0,3 4-1 3,0 3,2 1-4 4-2 1-5 -1-2 -4-1 -4,2 -3,0 -3,2zM995,653l-11-1 -8-1 -1,5 4,5 4,6 8,5 6,0 4-1 0-4 7-2 2-3 -4-3 -3-4zM920,846l1,8 4-1 5,1 1-5 2-5 -1-2 -3-1 -1-1 -5,2zM1592,530l-2,3 0,6 -2,4 1,1 5,1 6-2 1-4 3-3 -1-5 -3,0 -3-2zM1366,533l-4-10 -5-1 -7-6 -7-2 2,3 0,7 7,5 5,3zM1521,806l-3-5 -6-4 -12-4 -4,0 -5-2 5,5 1,3 6,3 14,5zM692,493l1,4 4,1 1-5 6-8 -3-8 -3-4 -3,4 -1,8 -4,5zM832,811l5-10 -2-4 -8-2 -6,0 -2,1 -3,1 1,5 -2,4 5,6 5,0 2,3zM1237,629l4,3 5-4 0-3 -1-6 -5-7 -4,0 -3,6 1,6 0,6zM945,843l3,11 3-5 9,3 3-7 4-2 0-2 -5,0 -6-2 -3-6 -5-1 -5,3 0,2zM1259,362l-2-3 1-5 -4,0 -6,3 -5,0 2,6 -3,5 8,1 3,2 5-5zM1539,460l6-6 2-4 -10,8zM930,800l5-3 4,3 3-4 0-5 2-5 -1-5 -3-2 -5-1 -2,2 -4,0 -3,5 -3,8 1,6zM1601,709l8,5 5,2 1-1 -2-4 4-10 -6-3 -4,1 -5-1 -2,5zM1916,430l0,3 2,0 3-2 0-6zM1902,497l-8,0 -6-3 1,3 -1,4 2,5 3,2 10-10zM1453,358l-6,3 -5-3 3,5 -1,5 10-6 3-2z"/>
<path fill="#cbc9c3" d="M916,653l2,4 7,3 1,4 9,0 2-3 -2-4 1-3 -4-3 -7-1 -3,4zM728,726l-1-5 4-4 -3-3 -5-4 -2-3 -5-1 12,21zM865,298l-2,7 -3,3 3,3 1,9 8,4 7,1 6,2 6-3 6-3 0-4 -4,3 -10-12 0-5 -6-4 -6-2zM1019,607l5,6 5,2 7,2 6,0 1-6 -3-6 -1-5 -5-4 -6,0 -4,1 -2,3 -4,4zM1519,814l-13,2 -1,2 -1,2 4,3 2,5 4,2 3,0 2,2 6,0 3-2 1-1 1-4 -1-5 -3-3zM1323,382l-2-6 -4-7 -2-5 -9-2 -2,4 -3,4 5,5 7,2 5,5zM1137,608l10-9 4-6 0-1 1-3 -1-2 -5,0 -3-2 -4,3 -2,5 -3,3 0,4 -1,4 1,4 1,0zM1666,712l-2,3 7,9 2,5 4-1 4-2 4,0 3-5 3-3 -3-4 -4-3 -6,1 -5-3 -6,0zM1603,905l-3,1 -3,2 3,4 5-5 0-2zM1318,889l10,4 5,1 2-5 -4-3 -11-7 -4-1 -5,1 5,4 3,3zM1455,745l5,3 11-4 5,0 3-2 0-4 -3-6 -7,1 -7,0 -7,9zM1213,770l2,1 17-10 2-6 4-5 1-3 -1-1 -2-2 -6,2 -11,6 -2,1 -4,5 -2,6zM1022,875l1-7 -2-4 -5-3 -4,0 -5-4 -1,1 -2,2 0,4 5,7 1,6 1,2 4,0 4,1 1-1 4,0zM1162,614l7,1 4-5 0-6 3-6 -1-3 -8,1 -10,6 -1,4 -2,5 3,5zM973,388l0,9 -2,5 5-3 5-1 2-5 6-5 1-5 -6-4 -4-1 -7,8 -5,2zM1166,870l-6-6 -8-3 -5,1 -5-1 -7-2 3,4 1,4 6,6 9,2 9,0 10,4 1-2 0-3zM942,739l-13,7 -6,8 0,3 -2,5 4-3 4,3 9-4 3-4 -4-3 2-7zM676,578l-6,1 -7,5 -1,5 2,8 0,4 8-3 3-3 4-7 1-4 4-7 0-2zM1400,459l-8-4 -7-1 -4,3 2,7 3,4 10,5 7,2 6-1 -4-6 2-4 1-5 -1-1zM807,786l5-2 4-5 4-10 0-2 -5,0 -5,5 -4,1 -7,9 -1,4 4,4zM1020,633l15,9 6,1 5,0 4,1 0-1 -11-8 -3-4 -18-5 0,3 -3,0zM787,422l4,4 4,0 10-9 0-5 1-5 -2-4 -5-3 -6-1 -1,7 -7,1 -3,6 -3,3 2,2 0,3zM1315,491l3,6 4,4 6,5 6,3 6,2 2-3 -4-7 -1-5 -7-4 -5-1 -8-3zM1190,652l-5,0 -3,2 0,2 5,4 2,3 1,5 2-2 3,2 3-4 1-5 0-4 -4-2 -3-4zM1059,826l13,4 -3-7 -1-5 -5-5 -5-1 -11-5 -2,6 5,9 2,6 3,2zM1396,737l-9,9 -4,4 -3,5 2,0 6-5 5-1 4-4 2-5 3-2 -5,0zM1494,559l4-6 -2-8 -4,1 -3-3 -1,1 -3,2 -1,6 -4,2 3,3 -2,6 3,0 2,2 3-2zM1610,573l-3,4 -1,3 8-6 6-3 5-4 -10,1zM1156,772l-7,7 0,4 -3,6 1,5 0,1 12-9 2-6 0-3zM1519,851l8-8 1-13 -3,2 -6,0 -2,5 1,7 -3,5 3,1zM1334,365l0-4 -2-7 2-5 -6,0 -2-4 -1,4 -3,2 -2,2 0,7 6,6 6,1zM1286,865l2-2 -2-2 -6-4 -1-2 -18-11 -2,1 1,3 4,4 5,6 6,4 5,2zM1329,831l0-3 -1-1 -9-6 -11-2 -4-5 -2-2 -3,1 -1,10 5,6 6,3 5-1 8,3 5,0zM1487,573l-10,5 -3,4 -5,4 7-3 5-3 8-6 -1,0 5-6zM1379,811l-1,4 -6,1 0,4 2,2 6,2 2,2 21,1 -2-4 -4-4 0-4 -5-5 -9-1zM864,738l-4,1 -4-3 -5,6 -6,3 1,3 5,2 6-1 3-2 8-7zM710,671l-5-6 -9-3 -10-5 12,15 1,2 3-1 6,1zM1312,792l-6,2 -1,5 2,5 5,4 4,2 1-1 4-3 1-3 -3-3 1-3 -4-1 -1-3zM1177,340l7,1 3-2 3-3 2-2 1-4 -1-3 -3-1 -4,2 -3-1 -4,4 -3,3 2,3 -1,2zM1468,819l-4-7 -9-5 -1,6 -7,3 -3,7 2,3 3,2 9-1 6-1 10,0 1,0zM1541,893l-6,0 -1,0 6,4zM1471,712l7-3 5,0 6-4 2-5 -1-5 -3-3 -7-2 -11,3 0,7 -1,5 1,6zM1092,851l10,1 7,2 -2-3 0-3 -8-12 -5-5 -1,6 -3,3 0,6zM1436,744l-1-7 -4-1 -7,1 -5,2 -7,5 -2,6 6,2 8,1 6,3 3-2 4-5 4-2zM1460,518l-9,0 -2,3 1,10 5,0 6,4 5,0 0-4 -4-6 0-6zM762,558l-5-1 -5,0 -2,1 -2,4 -1,6 -7,10 5,2 8,1 3-2 4-4 7-10 2-12zM956,343l1,5 -2,5 3,2 6-1 7,3 5-3 0-2 -3-3 -6-11 -2,0 -2-2 -3,0 -3,3zM829,564l-1-4 -10-6 -7,0 1,6 -4,9 0,6 5,2 7-4 3-5 7-2zM1560,406l0,5 -5,6 0,5 1,4 6,0 4-2 6-7 0-5 -4-2 -1-2 -5,0zM1638,790l-8,5 -2,4 1,5 2,3 7,4 4,0 3-2 1-4 0-4 -4-11zM1625,576l16-2 3-4 3-2 -1-2 -1-3 -5-1 -5,1 -7,3 -3,8zM1470,502l-5-3 -4,1 -1,5 -2,1 1,6 1,6 2,1 2-2 3,1 4-2 3-6 -1-6zM1321,527l-4-3 -3,2 -1,5 -5,0 7,6 5,13 4-5 11-1 -2-6 -8-5 -2-5zM1382,630l5-4 3-5 1-5 -1-4 -9,1 -3,5 -4,3 -3,4 2,2 1,3 4,1zM1456,684l4-1 5,4 2-9 2-3 -2-1 -1-2 -4,1 -4-2 -3,0 -2,4 -2,9zM951,808l2-10 -3-3 -1-7 -5-2 -2,5 0,5 -3,4 1,4 2,4 1,5 5-3zM828,352l7,2 3-3 -3-5 1-2 -11-11 -11-5 -6-5 -2,4 4,5 4,6 5,5 4,6zM672,598l-2,6 4,4 0,7 6,2 3-2 6,0 1-5 3-4 1-5 -4-7 -5,1 -10,0zM1342,806l-3-6 -5-8 -2-2 -12,7 -1,3 3,3 -1,3 7,0 7,3zM827,819l0-4 -2-3 -5,0 7,12 1-1zM1570,404l-4-7 -2-9 -2,6 6,11zM814,676l2-3 6-4 -7-3 -5-6 -6,1 -9-1 -2,4 4,8 9,3 6,7 3,0zM984,806l2-2 -2-4 1-3 -2-5 -3-4 -1-4 -2,2 -4,6 1,5 0,3 7,6zM1443,777l10-1 2-3 -5-5 -4-1 -4,0 -3,2 0,2 -3,5 1,3 2,1zM1346,659l-2-10 -3-1 -6,2 -3,2 3,5 0,6 3,2 2,0 3-4zM1443,641l6,0 3-2 -3-6 1-4 -4,0 -11-2 0,4 5,11zM1312,623l-7,3 -3,3 0,3 1,4 3,4 4,2 11-2 -3-7 -5-6 1-8zM1118,730l-6,2 -2-3 -10,7 -1,4 -6,8 4,0 7-3 16-14zM751,684l5,2 5-3 -5-5 -2-4 -5-6 -6-3 -6-4 -4,0 2,5 -4,1 2,4 3,4 4,5 4,2zM1043,876l-3-2 -3-2 -4,3 -3,1 -5,3 0,3 13,3zM1327,903l4-3 4-1 0-2 -2-3 -15-5 -6,1 2,4 2,4 1,4 3,2zM1494,651l0,4 -3,1 4,3 11,6 5,1 5-1 -2-3 1-2 -4-3 -9-3 -4-3zM1439,531l3,4 2,1 3,0 1-2 2-3 -2-9 -2,2 -4-4 -3,1 -2,3 0,7zM1193,745l-7,6 2,2 -1,4 2,5 1,2 1,0 4-2 10-9 4-4 -1-2 3-5 -4-1 -7,2zM939,723l6-3 5-5 4-3 2-6 0-3 -5,1 -5,0 -4-1 -6,4 -3,9 2,4 2,1zM1327,752l-5-5 2-5 -4-2 -4-4 -9,4 -1,5 1,4 -1,4 5,3 8,0 6,2zM1428,758l2-2 -6-3 -8-1 -6-2 -12,7 -5,6 17,2 4,5 3-3 10-6zM1068,722l-3,2 -3,10 2,1 7,0 7-4 5-4 2-4 -5-2 1-4 -10,1zM910,563l7,0 4,3 2-4 9-7 0-2 -5-3 -3,0 -4,1 -4,5 -12,10zM1250,369l-8-1 -9,6 -4,4 2,3 0,3 -2,3 4,0 2,1 4-2 4-5 5-2 3-3 2-5zM847,767l-8,9 -1,4 5,2 1,4 3,2 4,0 4-3 4-9 1-4 -4-3 -5,0zM1338,494l-2-5 -6-7 -1-6 -8-7 -5-2 -2,3 -4,0 2,5 3,6 5,8 5,2 5,1 7,4 1,0zM1550,622l7,3 7,5 3,0 -5-5 3-2 1-4 -3-1 -4-3 -10,0 -4,3zM1616,801l-2,3 2,4 3,3 5,4 4,4 2-1 2,1 -3-5 0-4 2-3 -2-3 -4-2 -5-3 -3-1zM1080,502l-8-13 1-8 -7-1 -14,2 0,5 -4,3 2,5 9,1 13,8 6-1zM1152,411l-1,7 4,1 4-3 3-1 2-4 5-5 2-4 0-1 -4,0 -4-3 -9,3 -4,5 -3,5zM1033,862l4,10 3,2 3,2 2-4 1-1 -3-4 1-4 -4-5 -6-4 -1,3 -4,0zM1042,799l4-4 -2-6 -14-6 -3,5 -1,5 -3,5 3,5 6,2 5-3 8,4zM1375,800l-14-1 -3,3 -6,2 -4,2 5,5 19,5 6-1 1-4 4-2 1-2 -1-3 -2-1zM1498,594l1,3 -2,5 2,2 3,0 6-3 12-9 1-3 3-5 -3-3 -11,4 -7,2zM1335,525l0-3 -3-4 -4-4 -5-2 -10-6 0,3 -1,2 -2,1 7,12 4,3 2,1 4-1 9,0zM1510,630l6,1 7-5 2-4 -1-4 1-8 -3-1 -7,2 -4,4 -3,5 -1,4 1,3zM1083,862l3-7 5,1 1-5 -1-3 -1-2 -5-5 -6-2 -3-6 -1-1 2,9 -4,4 1,8 5,7zM1100,352l-1,11 2,2 2,0 3-4 4,0 2-5 -1-4 -3-1 -1-4 -3,1zM1162,302l2-2 1-3 -6,1zM1171,401l9-8 4-5 -2-2 -2-4 -2,0 -4,1 -7,6 -7,4 -4,8 7-3 4,3zM1396,439l4,6 5,1 7-6 0-7 -4-5 0-8 -2-2 -4,2 -3,2 -4,6 -3,6 -1,5zM769,665l0-3 -6-9 -1-5 -5,0 -5,0 -7-3 2,4 4,5 17,12zM1478,598l-16,6 -1,5 1,4 3,4 2,1 2-5 6-5 5-3 -2-3zM863,384l-12-1 -3,3 -1,4 0,5 2,3 -2,5 6-2 2,0 7-2 2-7 5-5 1-7zM1022,748l4,0 5-3 10-11 2-3 0-2 -7-2 -4-3 -8,3 -4,3 -3,5 -1,11 1,3zM1003,628l5,0 7,1 3,0 0-3 -2-2 -9-5 -1-2 -7-2 -6-3 -5-2 -3,3 -1,2 7,7 3,3zM862,661l1-6 -1-4 -2-1 -7,0 -9-2 -5-3 -5,2 -3,6 0,3 5,5 1,4 10,0 11,3 9-1 1-1zM844,786l-1-4 -5-2 -5,0 -7,4 -3,5 -2,6 6,0 8,2 2,4 3-2 3-4 1-4 3-3zM1052,671l-6-1 -3-3 -3,3 -3,8 0,4 2,1 1,2 8-7 4-6zM1016,510l18,9 8,3 5,0 3,0 -1-1 1-1 -9-4 -8-5 -5-5 -9-2 -3,2 -2,2zM994,874l0-3 -4-6 -7-3 -6-2 -1,5 -5,2 -4,3 7,5 0,1 1-1 10-6 6,6zM1285,828l2-1 -4-10 2-5 -3-3 -2-1 -4,0 -2,3 0,4 -3,2 3,5 5,2 2,5zM1227,854l3-2 4,3 2-8 -4-6 -13-6 -3,6 2,6 4,4zM1601,583l-6,4 -8,6 -6,12 7,0 14-7 2-4 2-7 -1-5zM1317,524l-7-12 -6-1 -6-5 -1,3 -5,0 -2,3 1,5 0,4 7,6 2,4 3-1 5,1 5,0 1-5zM1426,902l8-4 3-3 0-4 -6-1 -2-3 -5,0 -5,1 4,5 -4,8 6,1zM1179,422l0-5 -4-1 -8,6 -2,6 -2,6 5,1 5-1 5,3 2-4 0-5 3-3zM1010,877l-1-6 -5-7 -2,5 -8,2 0,3 2,5 15,0zM1500,679l5-2 -10-7 -3-4 -7-2 -1,1 -3,0 1,3 -3,3 1,3 6,4 5-1zM1020,879l-1,1 6,2 0-3 -1,0zM1500,561l-2-8 -4,6 -1,4 4-1 -2,4zM1545,604l0,2 4-1 6,0 5-3 3-4 -3-1 1-3 -2-2 -4,1 -5,3 -3,4 -3,3zM1487,629l0-4 -2-3 -3,0 -8,1 -3,7 2,5 3,2 5,0 3-2zM1262,508l5,3 5-4 1-4 -4-4 -6-9 -2,2 -5-1 2,5 -5,4 2,9 1,3zM871,591l-6,4 -4,1 -5,3 -5,10 3,0 5-2 3,1 0-4 5-7 5-6zM1575,814l2,4 4-2 3,2 1-2 0-3 -4-8 -3-4 -4,0 -2,3 -2,6 1,2zM1125,736l12-12 6-5 5-7 3-5 -15,11 -9,9 -2,6zM976,651l3-6 -6-10 -8-1 -8-6 -6,2 -2,5 -2,4 4,4 -1,5 5,5 6,0 8-2zM1492,591l-7,2 -6,5 -1,4 2,3 4,0 4-1 3,2 6-4 2-5 -1-3 5-7 -2-1 -1,0 -3,1zM1709,759l5,3 0-5 4-1 0-5 -1-3 -7,1 -5-1 -4-2 -2,1 1,5 -3,5 4,4zM1490,695l1,5 -2,5 4,3 5,1 10-3 4-5 0-5 -1-4 -2,0 -6,1 -16-1zM901,563l8-11 3-6 -2-3 -3-1 -3,1 -5,6 0,5 -1,5 -5,7 3-1 2,1 1,2zM1568,410l4,2 0,5 3,0 4-2 3-7 -2-5 1-1 -11,2 -2,1 2,3 -3,0zM1068,695l1,4 6,2 6-1 1-5 1-4 -3-2 -2-4 -8-5 -2,1 0,4 -4,3 0,3zM1603,618l4,2 7,1 6-5 3-5 -4-3 -1-10 -7,1 -6,2 -1,6 3,6zM880,784l2-5 -6,2 -5,5 -2,3 2,7 6-6 4-5zM1719,627l-2,2 -7,0 5,7 16,6 5-1 5,1 -1-4 -3-3 -4-5 -5-1 -4-2zM1250,735l-6,6 -6,5 1,1 -1,3 5,0 2,1 5-3 4-5 5,0 2-4 2-5 -6,0 -1-3zM1279,911l-1-7 -9-2 -9,1 -7,3 -2,7 6,3 2,8 8-2 7-7 8-1zM1102,415l-9,5 -7,4 -7,3 -1,2 0,4 5-1 7-3 3-4 6-3 -1-3zM1243,712l-5,9 -3,6 11-2 5-4 3-5 4-4 1-4 -2-1 -3-4 -3,2zM970,591l-5-1 -5,1 -3,3 3,4 5,3 1,5 3-4 5-1 -1-4 3-3 -1-3zM1575,599l0-2 2-4 -1,0 -1,0 -12,5 -3,4 -5,3 3,3 6,0 3-1 6-4zM1415,719l-4,5 1,2 1,5 5-4 3-2 0-2 4-5 0-3 -3,0 -4,3zM1356,626l-5,0 -3,4 -3,1 1,5 5,6 2-3 5,0 3-4 1-4 0-3zM1347,690l4-5 0-4 -1-4 0-4 -3,1 -3-2 -3,3 -2,5 3,2 2,5zM1525,869l-1,3 3,0 7-3 5-4 5-4 0-5 -1-3 -4,2 -8,0 -1,4 -2,4 -4,5zM1307,740l9-4 1-6 -4-1 -3-4 -2-5 -3,4 -4-1 -4,1 -1,6 2,5 4,3zM1046,311l-4-3 -8,2 11,4zM1202,734l5-4 3-4 0-2 -3-3 -4-3 -6,1 -4,8 -9,2 -1,1 4,3 6,1 3,4zM1397,328l-9-4 -3,4 -9-4 1,4 -1,2 9,5 6,5 9,5 1-5 4-3 -4-6zM897,321l-6,3 -6,3 5,4 3,6 5,0 12,6 3-4 0-5 4-3 -3-6 -7-5 -8-4 -2,1zM1897,439l0-5 -3-1 -4,1 -4,3 -3,4 -1,7 2,2 4-2 3,0 3-3zM996,596l-2-4 3-4 -2-4 -3,0 -2-4 -4-1 -3,1 -3,1 0,3 -1,2 -1,4 5,3 7,0 3,4 2,0zM1596,846l-6,6 7,10 5,3 1-6 6-3 1-5 -5-2 -3-5 -5-3zM1140,296l-2,3 2,3 1,2 3-1 2-1zM1547,673l-2,2 9,8 1,3 6,2 3-1 5,1 -4-4 2-3 -4-5 -3-2 -6-1zM1434,668l-6-1 -4-2 -6,2 -4,5 5,4 0,5 2,4 5-2 5,4 5-2 2-2 -1-5 3-9 -2-3zM1562,801l4,6 4,3 2-6 2-3 -3-8 -4-3 -5,3 -4-1 -1,3 1,3zM1741,716l-6,2 -5,3 -4,5 1,5 -3,5 4,1 5-5 5,2 2-12 2-5zM1525,678l6,1 0-6 -15-8 -5,1 -5-1 1,1 -1,1 2,3 7,3 3,3zM760,575l-4,4 1,5 8-3 2,3 5,3 6-6 4-7 3-6 -3-2 -1-3 -2-2 -6,2 -5,7 -6,2zM1323,907l-3,5 1,4 4-4 4,0 6-7 1-5 -1-1 -4,1 -4,3 -4,0zM1268,716l-9,7 -3,8 1,3 6,0 4-4 4,1 4-3 -1-4 1-3 -5-3zM1331,679l1,3 4,1 3-3 2-5 -1-4 0-6 -2,0 -3-2 -2,4 -1,7 -4,5zM1495,566l2-4 -4,1 1-4 -5,4 -3,2 -4,4 -9,9 1,1 3-1 10-5zM1316,898l-2-4 -2-4 -6,0 -5-2 -2,2 -4,1 0,1 5,4 3,5 0,3 3,2 4-1 7-3zM1439,771l0-2 -5-2 -2-3 -5-3 -10,6 -3,3 0,1 5,3 1,3 5,1 6-4 5,2zM1286,865l12,8 13,6 5-1 4,1 -4-5 2-1 -5-3 -6,0 -12-4 -7-3 -1,1zM1009,645l-4,2 1,5 -3,3 3,4 10,6 4,0 6,2 4-5 1-4 -6-4 -5-5 -8-4zM1413,588l-4-2 0-3 -7,3 -5,5 -2,6 0,5 -1,5 7-1 5-3 7-7 3-5 0-2zM775,775l1,7 6,1 3-1 4-3 7-8 0-3 -2-4 -5,0 -6,4 -9-1 -4,2 -1,1zM1169,406l-5,5 -2,4 0,4 5-1 0,4 8-6 2-3 3-6 -1-2 -1-1 -5,0 -2-2zM1467,518l-3-1 -2,2 0,6 4,6 0,5 4-5 4-1 5-3 -4-4 -4-7zM1161,888l7,3 5-3 4,0 -1-6 -3-3 -10-4 -9,0 -9-2 -2,2 -1,3 3,4 8,3 3,3zM1359,738l-3-9 -3-5 -6-2 -10-1 4,6 -3,6 1,8 7,2 2,4 9-5zM931,849l-1,5 1,3 3,2 6,1 3-5 5-1 -1-7 -4-10 -4,1 -2,5 -4,1zM1354,895l0-2 -5-2 -2-3 -12,1 -2,5 2,3 0,2 5,3 8-1 2-1 4-3zM1194,773l18-5 -1-4 2-6 4-5 -6,2 -1-3 -5,1 -10,9 -4,2 2,3zM1189,697l3,3 4,1 5-8 0-5 -4-5 -3,0 -2,2 -4,1 0,4 -3,3 0,4zM1320,921l1-1 8-8 -4,0 -4,4 -2,2zM1183,906l5,0 3,2 2-1 9-6 2-5 -1-4 -8-3 -4,2 -4-1 -4,2 -1,4 0,5zM1143,687l-4-6 -7,1 -4,2 -2,1 1,5 -1,3 0,2 3,3 5,2 4-1 2,3 3,0 3-5 2-2 -1-9zM1481,637l-5,0 -1,3 0,3 6,2 2,3 5-7 -1-4 -3-2zM1787,555l-2-7 1-5 -13,0 -3,6 0,4 6,1 3,5 7,3 2,0 2-1zM1045,314l7,6 1,3 7,6 5,3 6,2 3-1 -7-8 -2-5 -6-1 -4,1 -5-5 -4-3zM664,601l0-4 -2-8 -2,9 2,6zM1272,321l-3,3 -6,0 2,4 5,3 1,4 4-1 4,2 4-1 -1-8 -3-4 -3-1zM1315,435l-5-9 3-5 -4-3 -11-3 -13,4 -1,2 2,4 3,2 8,0 5,6 5,7 7,2zM1232,780l5-3 0-6 -1-5 -4-5 -17,10 0,4 6,4 7,0 5,5zM1655,662l1-3 -6-3 -6-6 -3,2 -1,4 -5,1 5,3 3,6 1,0 4-1 11,3zM735,456l-4-9 -1-6 -3-1 -3-1 -4,3 0,5 2,6 0,5 2,3 3,1 1,4 2-3 2,1 3-3zM1767,743l-6,2 2,6 -2,7 12-16 -1-4zM1320,768l-7-2 -6,1 0,4 -4,2 1,4 4,3 6,0 4,2 2-5 0-4 5-5zM893,406l14-10 6-7 -2-5 -2,0 -6,4 -3,1 -3,3 -2,4 -4,5 -1,5zM1543,621l-2,4 -2,3 1,2 5,2 5,2 2-3 7,0 5-1 -7-5 -7-3 -5-4 -3-1zM1029,857l4,0 1-3 -5-5 -2-4 -5-5 -8-3 -6-5 5,6 -3,1 3,5 5,5zM1589,457l7,2 -1-4 -4-6 -1,1 1,4zM821,742l0-6 2-4 -1-1 -8-2 -4,1 -7-1 -6,5 4,6 2,5 3,4 5-2 4,2 4-1zM1136,618l2-5 0-4 -1-1 -2,0 -1,0 -3,0 -5,3 -1,3 -2,4 0,3 3,2 7,3 2-3 4-2zM1178,753l-5,7 -1,6 -2,6 3,0 2,2 5-6 10-4 -3-7 1-4 -2-2 -5,2zM1140,748l8-1 3-6 -1-4 2-5 -3-1 -2-3 -4,1 -7,7 -3,7 3,2 -1,5zM1243,590l5,0 2-2 5,0 1-5 4-4 -8-4 -3-6 -8-2 -3,2 -3,6 7,6 -1,7zM1707,721l-8-5 -8,2 -3,3 -3,5 0,3 1,1 4,0 6,2 5-2 4-4zM1360,794l1-3 -5,0 -6-3 -5,4 -2,5 -4,3 1,3 2,3 3,1 3-1 4-2 6-2 3-3zM1711,793l-7-8 -1,2 -3,1 -1,7 3,2zM1524,552l-2,1 -3,7 -11,5 -2,0 -2,4 5-2 4,0 3-4 8-5 2-4zM703,684l3,7 3,0 -4-6zM1180,352l6-6 2-4 -1-3 -3,2 -7-1 -4,8 -2,6 1,1 2,0zM897,382l7-6 2-5 -2-2 -1-5 -2-4 -3,5 -4,2 -5,0 1,11 0,5 2,1zM716,706l5,1 0-6 4-2 2-5 -8-4 -14-5 4,6 -3,0zM1298,823l1-10 -2-2 -4,2 -4-2 -4,1 -2,5 4,10 9,4 3-2 4,0zM1139,833l16,9 7,5 10-4 -4-8 -12-5 -5-8 -9,0 2,4zM1033,439l-7,0 -3-1 -4,1 -4,4 -3,4 0,3 -3,3 6,2 3,1 2,0 3-3 9-12zM1243,814l-8-4 -15-3 4,4 -1,3 5,4 8,3 5,5 3,1 0-3 4,1 -3-6 0-3zM1434,551l7-10 3-5 -2-1 -3-4 -2,0 -5,2 -2,5 0,6 0,5 2,0zM1079,860l-5-7 -4-1 -3-3 -3,0 -2,2 -2,1 2,6 1,12 4-1 2,1 3-5 8,4zM1001,764l4,0 3-5 9-10 -1-3 -7,4 -5-4 -6,0 -5-1 5,4 2,8 -2,6zM1395,680l3,7 6,0 8,3 5,1 4-3 0-3 -2-4 0-5 -5-4 -5,0 -5-3 -2,4 -7,3zM1254,517l2-5 -1-3 -1-5 -6,0 -13-7 -2,4 4,5 4,3 0,6 4,0 3,4 3,0zM962,819l3,6 3,5 3-4 5,0 -2-5 1-3 -1-5 -3-4 -3-4 -4,0 -1,3 -3,3 -1,5zM1110,677l-4,3 -4,1 -1,2 4,4 2,5 1,5 5-3 8,1 5-2 1-3 -1-5 -10-7zM1819,552l-1,6 2,5 4,3 7,2 3-5 7,0 -7-6 -1-6 -10-3 -6-2zM1152,747l6-7 12-6 0-5 -6-7 -6,7 -6,3 -2,5 1,4 -3,6 2,1zM1233,632l-6,1 -3,13 2,4 4-1 3,3 2-7 0-5 -2-4zM822,669l12,0 2-2 1-2 -1-4 -5-5 0-3 -7-1 -6-2 -5,0 -4,5 1,5 5,6zM1258,320l-1,0 -7-3 -8-5 -5,3 2,4 0,5 9,3 5-2 2-2 4-1zM1504,771l5-1 6,1 1-1 -2-9 -6-1 -6,0 -5-3 -3,5 6,5 -1,5zM1195,742l-2,3 14-4 4,1 3-2 2-3 -1-4 -2-4 -3-3 -3,4 -5,4 -6,4zM1069,775l-8-3 -3,11 4,6 9-2 7,2 -4-4 3-6 -3-4zM842,759l4-5 5-4 -5-2 -1-2 -11,8 -5,6 6,0 0,3 4,1 1-1zM1561,893l13-6 5-3 -7-2 -4-4 -5-4 -2,3 -1,5 -4,4 1,5zM1364,468l-9-5 -4-7 -5-4 -7-2 2,6 -1,4 5,7 6-1 3,0 10,5zM1520,811l-1,3 7,3 3,3 5-2 3,0 0-2 0-2 -5-3 -5-1 -6-4 -4,1zM1483,557l-3-3 -5,0 -6-1 -3,3 3,4 1,3 -2,4 4-2 5,0 4-2zM1367,547l-3,7 2,9 3,4 1-1 4-2 3-5 2-4 -3-3 -4-6 -2,1zM1365,626l-3-5 1-7 -1-4 -6,0 -5,4 -5-1 1,5 0,3 4,5 5,0 6,2zM1610,722l-5,2 -6,1 5,5 3,3 1,6 6-1 5-2 5-1 -3-6 -8-10zM1514,334l-3-2 -2,0 2,2 8,1 -1,0zM1531,347l-3-4 1,6zM1219,528l12-5 0-2 -5-6 -5-1 -4,2 -5,1 -1,7 0,4 4,4zM1148,768l-12,4 -2,5 -3,4 2,2 3,2 0,4 3-5 4-4 1-5zM1286,889l-6-2 -9-4 -2,1 0,5 4,10 5,5 7-2 1-8 9-2 0-1zM990,707l-2-3 -2,2 -4,0 -14,11 1,1 2,1 0,2 9-1 2-5 12-9zM1209,924l-6-2 -5,1 -4,1zM1338,733l3-6 -4-6 -9,4 -6-1 -2,2 -3,4 -1,6 4,4 4,2 4-2 6,3 5-2zM1374,630l-1-3 -2-2 -4,1 -2,0 -3,2 0,3 -1,4 5,2 0,4 5-1 4-5 3-4zM979,783l-3-4 -5-1 -3-5 -3,2 -1,5 -1,3 0,5 3-1 4,4 3,1 4-6 2-2zM1144,918l7-8 2-4 -4-7 -7,2 -6-5 -7,2 2,5 2,13zM1567,823l5,9 2,1 2,0 1-4 -2-6 2-5 -2-4 -4-2 -3,1 -2,2 -1,4zM1011,721l-5,3 -4-2 -2,2 -4,2 0,3 -4,5 2,4 7-2 9,0 8-7 -1-4 -2-4zM1720,623l-5-3 -4-4 -11-4 -3,3 4,4 -2,4 3,2 8,4 7,0 2-2 5,0zM1542,687l0-2 -11-6 -6-1 -7-2 -1,1 -4,1 13,8 7,0 7,2zM1228,871l-5,8 -1,4 1,4 1,4 1,0 7,0 4-8 5,0 -5-11 -3-2 -3,0zM1516,645l-2,2 0,4 4,4 2,4 12,3 5-1 0-3 5-1 -7-4 -10-4 -4-5zM1367,830l-1-3 -4-4 -9-2 -9-3 -4,2 -6-1 0,2 2,1 10,4 8,1 10,5zM1029,333l0,3 -3,2 7,11 4,1 4,2 2-1 2-1 0-3 -3-6 -1-4 -4-2 -5-4zM1476,589l-2,0 -5,4 -13,9 2,3 4-1 16-6 1,0 -3-2 2-4 1-4zM870,281l8,0 -3-8 -4-1zM1196,340l-3,4 -7,5 2,1 -1,4 3,0 4-1 4-1 3-4 1-3 0-4 -2-5zM901,754l-2,0 -3,4 -11,8 3,2 3,1 3-1 5-3 5-3 4-5 1-4 -4-1zM981,806l-7-6 0,4 -2,2 -1,3 3,4 12,7 4,0 -4-5 0-5 -2-4zM1359,485l-14-18 -6-2 -7,0 -1,4 0,5 7,2 8,4 11,6zM1342,532l-6-5 -9,0 -4,1 2,5 8,5 2,6 3,2 4-2 7-2 -1-3zM1139,734l4-5 2-5 -2,0 -1-3 1-2 -6,5 -12,12 -2,5 8-1z"/>
<path fill="#e8dcd2" d="M1201,332l3-7 -2-3 -2-2 -3,1 -4,4 -1,2 1,3 -1,4 5-2 0,3 4,0zM1700,612l-6-4 -7-1 -6,1 -5,2 2,5 4,4 7,2 10,2 2-4 -4-4zM959,451l4,1 3-3 6,2 6,0 0-3 1-4 -1-3 -5,0 -10-6 -2,1 -3,1 0,4 -5,3 1,4zM1831,469l1,4 7,7 2-3 0-3 -4-4 -1-4 -3-3 -4-1 -1,0 0,1zM1014,508l0-1 -7-4 -7-4 -3-4 -11-3 -1,1 2,4 -1,3 3,5 6,2 7,5 6,0 2-3 6,1zM1420,857l2-6 5-2 -3-2 -6-3 -2,2 -7,1 1,2 -2,3 4,2 3,5z"/>
<path fill="#e6d3c8" d="M1504,445l6,0 4-1 2-8 -3-1 -2-4 -4-1 -4,4 0,6 -3,3 0,3 1,2zM1862,457l4-4 4-2 2-3 -2-3 1-5 -2-3 -7,3 -4,7 2,5 -1,6zM747,320l-6-5 -4-5 0,2 -5,5 -5,2 7,3 4,0 9,1zM1375,861l-9,4 -6,0 0,2 6,2 2,6 4,3 3-3 5-1 0-9 -2-2zM1054,683l-5,10 6-4 5,1 4,1 0-3 4-3 0-4 -1-3 -8,0 -4-1z"/>
<path fill="#aeb9be" d="M999,467l2,3 4-2 4,0 2-4 7-8 -3-1 -6-2 -4,3 -2,2 -4,1zM1335,305l2,4 1,10 3-4 4,0 0-4 1-5 -3-5 -3,1 -4,4zM1002,491l4,5 9,4 10,6 3,0 7-1 -16-12 -6-2 -4-1 -5-4 -2,1 -1,1z"/>
<path fill="#b7c0c4" d="M1343,301l3,5 3-1 3,1 2,0 -1-4 0-3 -7,1zM1262,479l3,7 -2,4 6,9 4,4 2,0 2-3 3-9 -2-6 -8-7 -4-1 -3-1z"/>
</g>
<g stroke="#3d6e78" stroke-width=".6"><path fill="#4aa3b3" d="M1368,472l6,-4 8,-1 4,-8 3,9 3,8 -6,3 -3,-6 -9,2z"/><path fill="#2e8a9c" d="M1404,516l6,-5 6,-4 7,-1 -3,9 -4,8 -7,1z"/><path fill="#2a93a8" d="M732,692l10,-5 12,-3 8,5 6,8 -8,3 -10,-3 -4,4 8,3 -2,4 -12,2 -7,-8z"/><path fill="#a3b8bd" d="M1187,644h22v10h-18z"/><path fill="#a9bcc2" d="M1328,650l7,2 2,14 -9,2z"/><path fill="#a9bcc2" d="M1279,672h14v10h-14z"/><path fill="#d9dcc0" d="M1436,326l10,-8 12,3 9,12 -8,14 -14,3 -9,-10z"/></g>
<g fill="none" stroke="#1d1d1d" stroke-width="1.8" stroke-linejoin="round" stroke-linecap="round">
<polyline points="697,327 1326,327 1326,314 1333,315 1336,334 1344,337 1356,340 1357,343 1362,343 1367,340 1375,340 1383,343 1388,353 1391,349 1397,349 1404,357 1415,358 1423,353 1427,358 1443,358 1444,360 1454,362 1480,351 1518,373 1561,399 1565,410 1577,410 1580,423 1589,426 1590,432 1613,450 1623,504 1615,529 1600,545 1600,556 1610,563 1629,556 1658,543 1692,529 1694,518 1689,512 1700,505 1743,504 1760,484 1785,460 1863,460 1868,452 1881,449 1884,443 1891,431 1896,412 1905,397 1916,379 1920,379"/>
<polyline points="850,327 850,354 855,371 864,383 874,398 883,407 890,408 887,428 885,440 900,438 904,449 910,461 919,476 922,478 958,469 965,478 965,554"/>
<polyline points="663,554 705,554 715,518 723,514 742,531 743,554 768,554 773,566 785,566 788,554 965,554"/>
<polyline points="896,554 896,722 880,727 882,765 893,779 885,792 885,812 880,822"/>
<polyline points="896,702 1338,702"/>
<polyline points="1280,327 1287,371 1292,404 1288,438 1295,458 1295,511 1305,558 1312,598 1332,621 1338,638 1338,717"/>
<polyline points="1338,717 1442,717 1437,730 1450,730 1453,719 1462,704 1468,695 1485,689 1488,679 1512,672 1525,674 1538,662 1555,652 1562,642 1578,649 1602,655 1615,659 1620,654 1627,641 1640,634 1653,628 1659,604 1659,544"/>
<polyline points="1615,659 1618,675 1625,687 1605,705 1588,714 1760,715"/>
<polyline points="1338,717 1342,745 1340,772 1342,795 1352,799 1352,832 1358,852 1363,865 1358,885 1352,902"/>
<polyline points="880,829 965,857 1028,857 1028,847 1068,845 1082,859 1102,879 1115,909 1138,922"/>
</g><g fill="none" stroke="#1d1d1d" stroke-width="1">
<polyline points="825,825 880,821"/>
</g><g fill="none" stroke="#262626" stroke-width="2.600" stroke-linejoin="round" stroke-linecap="round">
<polyline points="697,327 700,338 704,346 700,352 706,358 709,366 704,372 700,380 694,386 692,394 700,392 706,384 708,376"/>
<polyline points="700,352 705,360 702,370 696,378 691,384"/>
<polyline points="653,350 672,355 690,356 697,352"/>
<polyline points="667,398 672,402 670,412 676,416"/>
<polyline points="670,428 680,430 690,434 700,443"/>
<polyline points="698,672 706,671 716,672 726,671"/>
<polyline points="705,676 709,684 713,690"/>
<polyline points="1749,637 1752,649 1744,656 1733,660 1738,666 1747,672 1753,681 1749,688 1741,687 1749,693 1759,700"/>
<polyline points="1765,628 1756,634 1753,643 1759,652 1762,663 1766,675 1769,685 1765,700"/>
<polyline points="1756,634 1750,640 1752,649"/>
<polyline points="1744,656 1750,664 1756,672 1760,684 1762,696"/>
<polyline points="1772,631 1778,640 1784,649"/>
<polyline points="1745,722 1755,728 1765,726 1770,735 1760,742 1748,745"/>
<polyline points="1750,735 1742,748 1750,752 1758,750"/>
<polyline points="1808,597 1822,590 1838,582 1853,575 1868,569 1880,566"/>
</g>
<path d="M656,325l-5,14 2,11 10,31 4,17 3,23 -3,33 -4,34 -5,23 -3,20 5,20 5,20 -5,27 5,20 7,14 10,20 16,20 7,17 13,20 14,26 13,20 3,17 17,7 23,6 17,10 13,14 10,16 4,7 13,3 13-10 14,20 13,4 13,3 14,10 6,13 14,4 6,13 20,3 17-20 10-6 10,10 10,0 10,0 10,3 13,3 7-13 10-7 7,14 10-14 13,7 13,17 10,10 7,10 13,10 10,5 180,0 20-22 27-2 33-1 27,3 23-3 7-10 18,0 15-10 19,0 16,6 20,14 10-4 20-3 17,7 13,16 10,9 34,0 -7-19 -3-13 3-20 3-20 10-17 14-10 16-10 14-16 16-7 10-10 17-13 20-10 13-17 -6-23 3-20 7-24 10-23 10-18 8-16 2-17 13-3 13-4 12-4 12-6 11-6 9-5 11-4 5,2 7-10 -10-3 -7-14 -3-16 7-14 10-10 10-10 14-13 0-109 -5-3 -3,6 -4,10 -10,9 -5,9 -4,10 -6,3 -9-5 -4-6 -7,5 8,8 0,9 -9,10 -6,9 -12,3 -7,8 -9-4 -2-10 2-9 -2-6 -4,6 -1,9 -8,7 -6-1 -10,0 -12,6 -7,8 -18,8 -10,3 -1,4 -1,7 -9,3 -14,3 -19,4 -14,4 -9,5 -7,12 -5,3 5,1 14,0 2,5 -4,1 -14,6 -14,4 -21,0 -12,7 -11,10 -5,0 7-10 12-9 8-12 -6,0 -19,10 7-10 10-13 2-19 7-12 2-9 -9-15 7,0 4,8 7,7 7,5 11,2 1-7 8-2 -8-16 -9-10 -10-11 -18-3 -16-5 -17,0 -16-4 -2-7 10-8 -1-7 -5,5 -16,3 -4-7 -3-11 -6-12 4-14 -19,5 -7-13 -10-17 -27-5 -13-2 -4,3 -4,4 -6,7 -6-1 4-6 -2-3 -7-4 -1-5 -6-3 -7-4 -6,6 -5-1 -4-5 -6,5 -7,2 -6-1 -4-5 -6-3 -6-3 -5,4 -7-1 -2-4 -7,4 -4-3 -4-4 -9-3 -4-5 -8,1 -6,2 -4,4 -3-5 -6,1 -6,0 3,6 -3,6 -1,4 -12,0 -15,1 -14-1 2-10 1-6 -5,8 -2,5 -8,2 -10,3 -7-3 -8-5 -9,5 -5-1 -4-4 -4,3 -6,2 -1,7 -7,1 -3-3 -6-4 -9-5 -5-11 -3-6 -3-1 -10,2 -8,1 3,5 -4,4 -8-2 -8-7 -3-4 -3-5 -3,6 -6-5 -9-3 -5,3 4,4 6,5 -3,3 -5,3 -5,2 -3,8 -7,1 -3,4 -4-2 -6-4 -9,0 -11,3 -12,3 -7-7 -6-5 -9,2 -11-1 -7-5 -8-2 -9,1 -8,2 -8,0 -4,5 -3,12 -12-1 -8-3 -8,3 -9-4 -8,1 -7-5 5-6 -1-4 5-6 -10-3 -7,6 -7,8 -8,7 -7,5 -6-7 -4-5 -1-10 -2-10 -5-15 -4-1 -1,18 -5,8 -2,7 -6,7 -7-2 -5,2 -8-7 0-7 3-5 0-7 -8,0 -7,4 0,10 -7,8 -1,5 -4-3 -6-5 1-7 7-7 -10-6 -8,2 -10,4 -7-3 1-10 -3-8 -1,5 -7,2 -3,8 -7,10 -5,2 -8-3 -7,6 -3,12 -5,5 -9,4 -11,2 -12-2 -10,1 -9,6 -5,10 -12-8z" fill="none" stroke="#2a2a2a" stroke-width="1"/>
</svg>
<svg viewBox="365 55 1555 868" width="1555" height="868" style="position:absolute;left:0;top:0;display:block;font-family:'DejaVu Sans','Liberation Sans',sans-serif">
<g fill="#cfcfcf" text-anchor="middle" font-size="10.5" letter-spacing=".2" stroke="#cfcfcf" stroke-width=".35">
<text x="909" y="164" font-size="10.3">Edmonton</text>
<text x="896" y="257" font-size="10.8">Calgary</text>
<text x="1111" y="279" font-size="10.3">Regina</text>
<text x="1281" y="298" font-size="10.3">Winnipeg</text>
<text x="690" y="321" font-size="10.3">Vancouver</text>
<text x="1871" y="404" font-size="10.3">Quebec</text>
<text x="1769" y="450" font-size="10.3">Ottawa</text>
<text x="967" y="920" font-size="10.3">Hermosillo</text>
<text x="1822" y="447" font-size="12">Mont eal</text><text x="1662" y="506" text-anchor="start">Tor</text><text x="797" y="825" text-anchor="start" font-size="12">San</text><text x="682" y="690" text-anchor="start">Fran</text><text x="1635" y="888" text-anchor="start">ville</text>
</g>
<text x="1205" y="104" fill="#8f8f8f" text-anchor="middle" font-weight="bold" font-size="14" letter-spacing="5.5">CANADA</text>
<g fill="#8a8d8e" text-anchor="middle" font-style="italic" font-size="10.5" letter-spacing="1"><text x="549" y="218">Queen</text><text x="549" y="230">Charlotte</text><text x="549" y="242">Sound</text><text x="1266" y="194" letter-spacing=".3">Lake</text><text x="1266" y="205" letter-spacing=".3">Winnipeg</text><text x="1658" y="166" font-size="11" letter-spacing="1.5">James</text><text x="1658" y="182" font-size="11" letter-spacing="1.5">Bay</text></g>
<g fill="#fff" fill-opacity=".45" font-weight="bold" font-size="10" text-anchor="middle"><text x="1540" y="524">ukee</text><text x="1505" y="560">ago</text><text x="1618" y="888">Jack</text><text x="1565" y="625">Indianapolis</text><text x="1290" y="712">Oklahoma</text><text x="1290" y="822">Dallas</text><text x="1262" y="888">Austin</text><text x="940" y="648">alt Lake</text><text x="860" y="728">Las V</text><text x="803" y="787">Los Angeles</text></g>
<path d="M961,424l3,4 4,2 3,4 1,5 -1,5 -3,4 1,5 2,4 -1,5 1,5 -2,3 -4,-2 -3,2 -3,-2 -2,-4 1,-5 -2,-4 1,-5 -2,-4 -3,-4 0,-6 2,-5 3,-3 2,-5z" fill="none" stroke="#00f6ff" stroke-width="2" stroke-linejoin="round"/>
<g transform="translate(700,443)"><circle r="11" fill="#000"/><path fill="#fff" d="M-.7,-9h6.400v4.600l-2.300,-.6l-2.600,-.5v3.300h-1.500zM0,-2.900l7.200,4.700v.6h-14.400v-.6zM-6.200,6.400h12.400l.6,1.800h-13.600z"/><path fill="#c9c9c9" d="M-5.100,2.400h10.200v3.900h-10.200z"/></g>
<g transform="translate(712,603)"><circle r="11" fill="#000"/><path fill="#fff" d="M-.7,-9h6.400v4.600l-2.300,-.6l-2.600,-.5v3.300h-1.500zM0,-2.900l7.200,4.700v.6h-14.400v-.6zM-6.200,6.400h12.400l.6,1.800h-13.600z"/><path fill="#c9c9c9" d="M-5.100,2.400h10.200v3.900h-10.200z"/></g>
<g transform="translate(963,439)"><circle r="11" fill="#000"/><path fill="#fff" d="M-.7,-9h6.400v4.600l-2.300,-.6l-2.600,-.5v3.300h-1.500zM0,-2.900l7.200,4.700v.6h-14.400v-.6zM-6.200,6.400h12.400l.6,1.800h-13.600z"/><path fill="#c9c9c9" d="M-5.100,2.400h10.200v3.900h-10.200z"/></g>
<g transform="translate(1117,808)"><circle r="11" fill="#000"/><path fill="#fff" d="M-.7,-9h6.400v4.600l-2.300,-.6l-2.600,-.5v3.300h-1.500zM0,-2.900l7.200,4.700v.6h-14.400v-.6zM-6.200,6.400h12.400l.6,1.800h-13.600z"/><path fill="#c9c9c9" d="M-5.100,2.400h10.200v3.900h-10.200z"/></g>
<g transform="translate(1416,496)"><circle r="11" fill="#000"/><path fill="#fff" d="M-.7,-9h6.400v4.600l-2.300,-.6l-2.600,-.5v3.300h-1.500zM0,-2.900l7.200,4.700v.6h-14.400v-.6zM-6.200,6.400h12.400l.6,1.800h-13.600z"/><path fill="#c9c9c9" d="M-5.100,2.400h10.200v3.900h-10.200z"/></g>
<g transform="translate(1565,817)"><circle r="11" fill="#000"/><path fill="#fff" d="M-.7,-9h6.400v4.600l-2.300,-.6l-2.600,-.5v3.300h-1.500zM0,-2.900l7.200,4.700v.6h-14.400v-.6zM-6.200,6.400h12.400l.6,1.800h-13.600z"/><path fill="#c9c9c9" d="M-5.100,2.400h10.200v3.900h-10.200z"/></g>
<g transform="translate(1727,584)"><circle r="11" fill="#000"/><path fill="#fff" d="M-.7,-9h6.400v4.600l-2.300,-.6l-2.600,-.5v3.300h-1.500zM0,-2.900l7.200,4.700v.6h-14.400v-.6zM-6.200,6.400h12.400l.6,1.800h-13.600z"/><path fill="#c9c9c9" d="M-5.100,2.400h10.200v3.900h-10.200z"/></g>
<path d="M961,424l3,4 4,2 3,4 1,5 -1,5 -3,4M961,424l-2,5 -3,3 -2,5 0,6 3,4" fill="none" stroke="#00f6ff" stroke-width="1.6" stroke-linejoin="round" stroke-opacity=".9"/>
<g font-family="'Liberation Sans',sans-serif" font-size="17" text-anchor="middle" fill="#111" stroke="#fff" stroke-width="4" paint-order="stroke" stroke-linejoin="round">
<text x="804" y="450">1</text>
<text x="808" y="660">8</text>
<text x="1131" y="801">2</text>
<text x="1471" y="520">3</text>
<text x="1537" y="795">4</text>
<text x="1777" y="562">5</text>
</g>
</svg>
 <!-- widgets -->
 <div class="mb" style="left:7px;top:5px;width:32px;height:62px"><svg style="left:7px;top:6px" width="16" height="16" viewBox="0 0 16 16"><path d="M7 0h2v7h7v2H9v7H7V9H0V7h7z" fill="#fff"/></svg><svg style="left:8px;top:43px" width="14" height="2" viewBox="0 0 14 2"><path d="M0 0h14v2H0z" fill="#fff"/></svg></div>
 <div class="mb" style="left:7px;top:75px;width:32px;height:32px"><svg style="left:4px;top:5px" width="22" height="20" viewBox="0 0 22 20"><path d="M11 0.500 21.500 10.500H18.800V19.500H13V13H9V19.500H3.200V10.500H.5zM16 2h2.500v4L16 3.700z" fill="#fff"/></svg></div>
 <div class="mb" style="left:7px;top:115px;width:32px;height:32px"><svg style="left:4px;top:4px" width="22" height="22" viewBox="0 0 22 22"><circle cx="11" cy="11" r="8.800" fill="none" stroke="#fff" stroke-width="1.600"/><path d="M11 2v4M11 16v4M2 11h4M16 11h4" stroke="#fff" stroke-width="1.400"/></svg></div>
 <div class="abs" style="left:46px;top:6px;width:272px;height:32px;background:#fff;border-radius:3px;box-shadow:0 0 0 1px #6d6d6d"><div class="abs" style="left:12px;top:0;line-height:32px;font-size:14px;color:#a3a3a3;font-family:'Liberation Sans',sans-serif">Find address or place</div><div class="abs" style="left:239px;top:0;width:1px;height:32px;background:#57585b"></div><svg class="abs" style="left:246px;top:6px" width="20" height="20" viewBox="0 0 20 20"><circle cx="7.800" cy="7.800" r="5.200" fill="none" stroke="#333" stroke-width="2"/><path d="M11.500 11.500 17.500 17.500" stroke="#333" stroke-width="2.600" stroke-linecap="round"/></svg></div>
 <div class="mb" style="left:45px;top:45px;width:40px;height:40px"><svg style="left:10px;top:10.500px" width="19.500" height="18" viewBox="0 0 22 20"><path d="M.5 1C6 .2 16 .2 21.500 1 18 5.500 15 8.500 13.200 11.500V18.500L9 20V11.500C7 8.500 4 5.500.5 1z" fill="#fff"/></svg></div>
 <div class="mb" style="left:95px;top:45px;width:40px;height:40px"><svg style="left:7px;top:8px" width="24" height="22" viewBox="0 0 24 22"><path d="M6 1h12v5H6z M2.500 7h19a2 2 0 0 1 2 2v8h-4.500v-4H5v4H.5V9a2 2 0 0 1 2-2zM6 14.500h12V21H6z" fill="#fff"/><path d="M7.500 2.500h9V6h-9zM7.500 16.500h9v3h-9z" fill="#555"/><circle cx="19.500" cy="10" r="1" fill="#555"/></svg></div>
 <div class="mb" style="left:145px;top:45px;width:40px;height:40px"><svg style="left:8px;top:6px" width="24" height="26" viewBox="0 0 24 26"><path d="M3.500 7h17l2 17c-4-1.500-7 1-10.500.5s-6-1.500-10.500 0z" fill="#fff"/><path d="M12 1v10M7.500 5.500h9" stroke="#fff" stroke-width="1.800"/><path d="M9.500 7h5v5h-5z" fill="#555"/><path d="M12 2v9M8 5.500h8" stroke="#fff" stroke-width="1.600"/></svg></div>
 <!-- scale bar -->
 <svg class="abs" style="left:8px;top:825px" width="150" height="22" viewBox="0 0 150 22" font-family="'Liberation Sans',sans-serif"><path d="M2.500 7.500V3h113V7.500" fill="none" stroke="#f2f2f2" stroke-width="3.600"/><path d="M2.500 8V3h113V8" fill="none" stroke="#2a2a2a" stroke-width="1.800"/><text x="109" y="17" font-size="11" fill="#222" stroke="#e0e0e0" stroke-width="2" paint-order="stroke">300mi</text></svg>
 <div class="abs" style="left:10px;top:847px;width:74px;height:17px;background:#000;border-right:1px solid #888"><svg class="abs" style="left:3px;top:3px" width="11" height="11" viewBox="0 0 11 11"><path d="M5.500 0v2M5.500 9v2M0 5.500h2M9 5.500h2M4.500 4.500h2v2h-2z" fill="none" stroke="#fff" stroke-width="1"/></svg><div class="abs" style="left:16px;top:0;width:1px;height:17px;background:#555"></div><div class="abs" style="left:22px;top:0;font-size:11.500px;line-height:16px;color:#fff">loading...</div></div>
 <!-- attribution -->
 <div class="abs" style="left:747px;top:853px;width:60px;height:20px;border:2px solid #777;border-bottom:none;border-radius:5px 5px 0 0;background:#2a2d2e"></div>
 <div class="abs" style="left:782px;top:849px;width:699px;height:15px;background:#fff;overflow:hidden;white-space:nowrap;font-size:12.500px;line-height:15px;color:#323232;letter-spacing:.24px"><span style="margin-left:3px;opacity:.5">Esri,</span> HERE, Garmin, FAO, NOAA, USGS, EPA | Funding for the Watershed Boundary Dataset (WBD) was provided by…</div>
 <svg class="abs" style="left:1486px;top:827px" width="69" height="42" viewBox="1851 882 69 42" font-family="'Liberation Sans',sans-serif" fill="#fff"><text x="1856" y="891" font-size="6.500" font-weight="bold" textLength="46.500" lengthAdjust="spacingAndGlyphs">POWERED BY</text><circle cx="1907.900" cy="888.900" r="3.100"/><text x="1853" y="915" font-size="38" font-weight="bold" textLength="58.500" lengthAdjust="spacingAndGlyphs">esri</text><path d="M1906,909l11,1.500 -3,3 6,6 -4,3.500 -5.500,-6 -3,3z" fill="#fff" stroke="#3a3a3a" stroke-width="1"/></svg>
 <!-- popup -->
 <svg class="abs" style="left:612px;top:380px" width="14" height="26" viewBox="0 0 14 26"><path d="M0 13 13 0v26z" fill="#fff"/></svg>
 <div class="abs" id="pop">
  <div class="tb"><span style="margin-left:5px">(1 of 7)</span>
   <svg class="abs" style="left:213px;top:5px" width="9" height="10" viewBox="0 0 9 10"><path d="M.5 0 8.500 5 .5 10z" fill="#fff"/></svg>
   <svg class="abs" style="left:237px;top:5px" width="12" height="11" viewBox="0 0 12 11"><path d="M0 0h12v11H0zM1.500 3v6.500h9V3z" fill="#fff" fill-rule="evenodd"/></svg>
   <svg class="abs" style="left:255px;top:5px" width="11" height="11" viewBox="0 0 11 11"><path d="M1 1 10 10M10 1 1 10" stroke="#fff" stroke-width="2"/></svg>
  </div>
  <svg class="abs" style="left:10px;top:27px" width="17" height="15" viewBox="0 0 17 15"><path d="M8 1 1.500 7.500 8 14M1.500 7.500H16.500" fill="none" stroke="#777" stroke-width="1.700"/></svg>
  <div class="abs" style="left:32px;top:26px;font-size:13px;line-height:17px;color:#333;letter-spacing:-.09px;white-space:nowrap">NWFHS_Case_Related_Data_LIMS</div>
  <div class="abs" style="left:0;top:49px;width:269px;height:1px;background:#ddd"></div>
  <div class="abs" style="left:10px;top:65px;font-size:12px;line-height:15px;color:#333;-webkit-text-stroke:.2px #333">Related records:</div>
  <div class="abs" style="left:245px;top:67px;width:10px;height:10px;border:1px solid #bbb"><svg class="abs" style="left:2px;top:4px" width="6" height="4" viewBox="0 0 6 4"><path d="M0 0h6L3 4z" fill="#555"/></svg></div>
  <div class="row" style="top:85px;background:#f0f0f0">Case: BZN-21-0278: National Wild Fish ...<i></i></div>
  <div class="row" style="top:110px">Case: BZN-21-0335: National Wild Fish ...<i></i></div>
  <div class="row" style="top:135px;background:#f0f0f0">Case: BZN-21-0472: National Wild Fish ...<i></i></div>
  <div class="row" style="top:160px">Case: BZN-22-0718: National Wild Fish ...<i></i></div>
  <svg class="abs" style="left:234px;top:199px" width="16" height="4" viewBox="0 0 16 4"><circle cx="2" cy="2" r="1.700" fill="#777"/><circle cx="8" cy="2" r="1.700" fill="#777"/><circle cx="14" cy="2" r="1.700" fill="#777"/></svg>
 </div>
</div>
<div class="abs" id="foot">All rights reserved</div>
</body></html>
